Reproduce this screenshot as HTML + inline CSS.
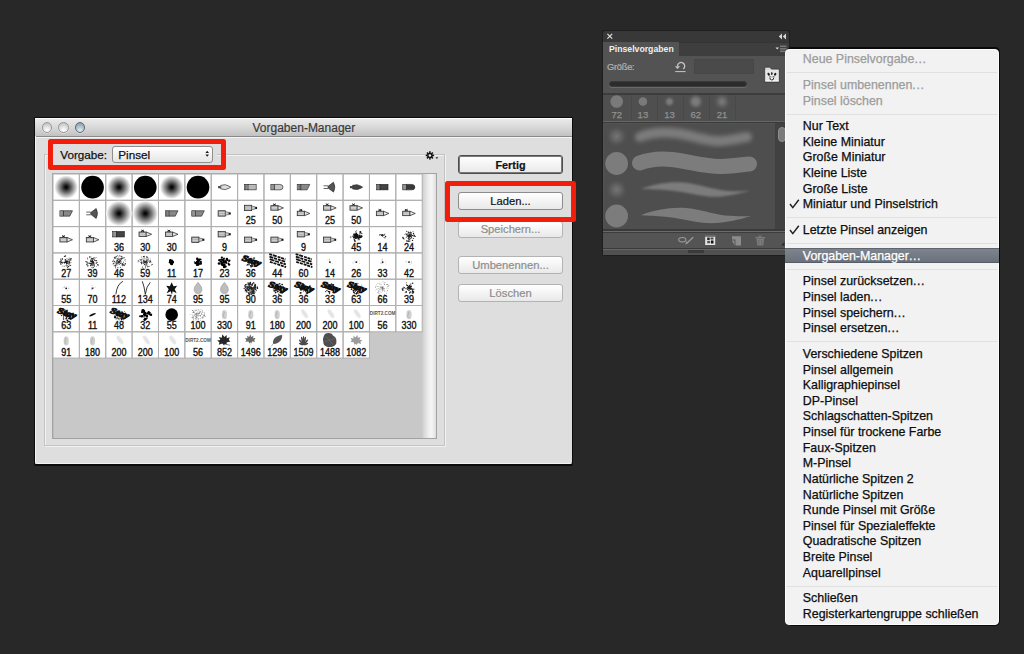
<!DOCTYPE html>
<html><head><meta charset="utf-8"><style>
html,body{margin:0;padding:0;}
body{width:1024px;height:654px;overflow:hidden;background:#282828;position:relative;font-family:"Liberation Sans", sans-serif;}
.abs{position:absolute;}
.t{position:absolute;white-space:nowrap;}
</style></head><body>

<div class="abs" style="left:34px;top:117px;width:539px;height:349px;background:#0c0c0c;border-radius:1px 1px 2px 2px;"></div>
<div class="abs" style="left:35px;top:118px;width:537px;height:346px;background:#dedede;border-radius:0 0 2px 2px;overflow:hidden;">
<div class="abs" style="left:0;top:0;width:100%;height:19px;background:linear-gradient(#eaeaea,#d8d8d8 50%,#c2c2c2);border-top:1px solid #fbfbfb;box-sizing:border-box;border-bottom:1px solid #8a8a8a;"></div><div class="abs" style="left:0;top:19px;width:100%;height:1px;background:#f3f5f5;"></div>
<div class="abs" style="left:0;top:18px;width:1px;height:328px;background:#f4f4f4;"></div>
<div class="abs" style="left:0;bottom:0;width:100%;height:1px;background:#f2f2f2;"></div>
</div>
<div class="abs" style="left:41.9px;top:122.3px;width:10.4px;height:10.4px;border-radius:50%;box-sizing:border-box;border:1px solid #9b9b9b;background:radial-gradient(circle at 50% 80%, #ffffff 0%, #ececec 30%, #c9c9c9 75%, #b4b4b4 100%);box-shadow:0 0.5px 0.5px rgba(255,255,255,0.7);"></div>
<div class="abs" style="left:58.3px;top:122.3px;width:10.4px;height:10.4px;border-radius:50%;box-sizing:border-box;border:1px solid #9b9b9b;background:radial-gradient(circle at 50% 80%, #ffffff 0%, #ececec 30%, #c9c9c9 75%, #b4b4b4 100%);box-shadow:0 0.5px 0.5px rgba(255,255,255,0.7);"></div>
<div class="abs" style="left:74.7px;top:122.3px;width:10.4px;height:10.4px;border-radius:50%;box-sizing:border-box;border:1px solid #5e6f79;background:radial-gradient(circle at 50% 80%, #e4eef3 0%, #bccbd4 35%, #8fa3ae 80%, #7b8e99 100%);box-shadow:0 0.5px 0.5px rgba(255,255,255,0.7);"></div>
<div class="t" style="left:252.5px;top:120px;font-size:12px;line-height:16px;color:#3a3a3a;-webkit-text-stroke:0.2px #3a3a3a;">Vorgaben-Manager</div>
<div class="abs" style="left:44px;top:154px;width:400.5px;height:292px;box-sizing:border-box;border:1px solid #c3c3c3;box-shadow:1px 1px 0 #f2f2f2, inset 1px 1px 0 #f2f2f2;"></div>
<div class="abs" style="left:52px;top:144px;width:164.5px;height:21px;background:#dedede;"></div>
<div class="t" style="left:60.3px;top:147.5px;font-size:11.7px;line-height:14px;color:#111;-webkit-text-stroke:0.25px #111;">Vorgabe:</div>
<div class="abs" style="left:112px;top:146px;width:101px;height:17px;box-sizing:border-box;border:1px solid #8f8f8f;border-radius:3px;background:linear-gradient(#ffffff,#f2f2f2 50%,#e6e6e6);"></div>
<div class="t" style="left:118.3px;top:147.5px;font-size:11.7px;line-height:14px;color:#111;-webkit-text-stroke:0.25px #111;">Pinsel</div>
<svg class="abs" style="left:203px;top:149px" width="8" height="10" viewBox="0 0 8 10"><path d="M4.2 1.8 L6 4.1 L2.4 4.1Z M4.2 7.8 L6 5.5 L2.4 5.5Z" fill="#1a1a1a"/></svg>
<svg class="abs" style="left:423px;top:149px" width="18" height="13" viewBox="0 0 18 13"><g transform="translate(6.9,6.4)"><circle r="2.7" fill="#111"/><rect x="-0.75" y="-4.2" width="1.5" height="2.2" fill="#111" transform="rotate(0)"/><rect x="-0.75" y="-4.2" width="1.5" height="2.2" fill="#111" transform="rotate(45)"/><rect x="-0.75" y="-4.2" width="1.5" height="2.2" fill="#111" transform="rotate(90)"/><rect x="-0.75" y="-4.2" width="1.5" height="2.2" fill="#111" transform="rotate(135)"/><rect x="-0.75" y="-4.2" width="1.5" height="2.2" fill="#111" transform="rotate(180)"/><rect x="-0.75" y="-4.2" width="1.5" height="2.2" fill="#111" transform="rotate(225)"/><rect x="-0.75" y="-4.2" width="1.5" height="2.2" fill="#111" transform="rotate(270)"/><rect x="-0.75" y="-4.2" width="1.5" height="2.2" fill="#111" transform="rotate(315)"/><circle r="1.25" fill="#f4f4f4"/></g><path d="M12.6 8.2 L15.2 8.2 L13.9 10Z" fill="#222"/></svg>
<div class="abs" style="left:52px;top:173px;width:385px;height:266px;box-sizing:border-box;border:1px solid #a2a2a2;background:#c8c8c8;box-shadow:inset 1px 0 0 #bcbcbc;"></div>
<div class="abs" style="left:422px;top:174px;width:14px;height:264px;background:linear-gradient(90deg,#cacaca 0%,#dcdcdc 20%,#f2f2f2 55%,#f4f4f4 70%,#dedede 100%);box-sizing:border-box;"></div>
<div class="abs" style="left:458px;top:155px;width:105px;height:19px;box-sizing:border-box;border:1px solid #4d4d4d;border-radius:3px;background:linear-gradient(#ffffff,#f4f4f4 50%,#e9e9e9);box-shadow:inset 0 0 0 1px #7a7a7a;"></div>
<div class="t" style="left:458px;top:155.8px;width:105px;height:19px;line-height:19px;text-align:center;font-size:10.8px;color:#111;-webkit-text-stroke:0.2px #111;font-weight:bold;">Fertig</div>
<div class="abs" style="left:458px;top:192px;width:105px;height:18px;box-sizing:border-box;border:1px solid #8c8c8c;border-radius:3px;background:linear-gradient(#ffffff,#f4f4f4 50%,#e9e9e9);"></div>
<div class="t" style="left:458px;top:192px;width:105px;height:18px;line-height:18px;text-align:center;font-size:11.2px;color:#111;-webkit-text-stroke:0.2px #111;">Laden...</div>
<div class="abs" style="left:458px;top:221px;width:105px;height:17px;box-sizing:border-box;border:1px solid #b3b3b3;border-radius:3px;background:linear-gradient(#ffffff,#f4f4f4 50%,#e9e9e9);"></div>
<div class="t" style="left:458px;top:221px;width:105px;height:17px;line-height:17px;text-align:center;font-size:11.2px;color:#8d8d8d;-webkit-text-stroke:0.2px #8d8d8d;">Speichern...</div>
<div class="abs" style="left:458px;top:256px;width:105px;height:18px;box-sizing:border-box;border:1px solid #b3b3b3;border-radius:3px;background:linear-gradient(#ffffff,#f4f4f4 50%,#e9e9e9);"></div>
<div class="t" style="left:458px;top:256px;width:105px;height:18px;line-height:18px;text-align:center;font-size:11.2px;color:#8d8d8d;-webkit-text-stroke:0.2px #8d8d8d;">Umbenennen...</div>
<div class="abs" style="left:458px;top:284px;width:105px;height:18px;box-sizing:border-box;border:1px solid #b3b3b3;border-radius:3px;background:linear-gradient(#ffffff,#f4f4f4 50%,#e9e9e9);"></div>
<div class="t" style="left:458px;top:284px;width:105px;height:18px;line-height:18px;text-align:center;font-size:11.2px;color:#8d8d8d;-webkit-text-stroke:0.2px #8d8d8d;">Löschen</div>
<div class="abs" style="left:48px;top:139px;width:178px;height:31px;box-sizing:border-box;border:5px solid #f21d0a;border-radius:2.5px;"></div>
<div class="abs" style="left:445px;top:181px;width:130.5px;height:40.7px;box-sizing:border-box;border:5px solid #f21d0a;border-radius:2.5px;"></div>
<svg class="abs" style="left:0;top:0" width="1024" height="654" viewBox="0 0 1024 654">
<defs><radialGradient id="gsoft"><stop offset="0" stop-color="#000"/><stop offset="0.12" stop-color="#111"/><stop offset="0.5" stop-color="#777"/><stop offset="1" stop-color="#fff"/></radialGradient><filter id="fblur" x="-50%" y="-50%" width="200%" height="200%"><feGaussianBlur stdDeviation="0.5"/></filter></defs>
<rect x="53.00" y="174.00" width="26.37" height="26.30" fill="#fff"/>
<rect x="79.37" y="174.00" width="26.37" height="26.30" fill="#fff"/>
<rect x="105.74" y="174.00" width="26.37" height="26.30" fill="#fff"/>
<rect x="132.11" y="174.00" width="26.37" height="26.30" fill="#fff"/>
<rect x="158.48" y="174.00" width="26.37" height="26.30" fill="#fff"/>
<rect x="184.85" y="174.00" width="26.37" height="26.30" fill="#fff"/>
<rect x="211.22" y="174.00" width="26.37" height="26.30" fill="#fff"/>
<rect x="237.59" y="174.00" width="26.37" height="26.30" fill="#fff"/>
<rect x="263.96" y="174.00" width="26.37" height="26.30" fill="#fff"/>
<rect x="290.33" y="174.00" width="26.37" height="26.30" fill="#fff"/>
<rect x="316.70" y="174.00" width="26.37" height="26.30" fill="#fff"/>
<rect x="343.07" y="174.00" width="26.37" height="26.30" fill="#fff"/>
<rect x="369.44" y="174.00" width="26.37" height="26.30" fill="#fff"/>
<rect x="395.81" y="174.00" width="26.37" height="26.30" fill="#fff"/>
<rect x="53.00" y="200.30" width="26.37" height="26.30" fill="#fff"/>
<rect x="79.37" y="200.30" width="26.37" height="26.30" fill="#fff"/>
<rect x="105.74" y="200.30" width="26.37" height="26.30" fill="#fff"/>
<rect x="132.11" y="200.30" width="26.37" height="26.30" fill="#fff"/>
<rect x="158.48" y="200.30" width="26.37" height="26.30" fill="#fff"/>
<rect x="184.85" y="200.30" width="26.37" height="26.30" fill="#fff"/>
<rect x="211.22" y="200.30" width="26.37" height="26.30" fill="#fff"/>
<rect x="237.59" y="200.30" width="26.37" height="26.30" fill="#fff"/>
<rect x="263.96" y="200.30" width="26.37" height="26.30" fill="#fff"/>
<rect x="290.33" y="200.30" width="26.37" height="26.30" fill="#fff"/>
<rect x="316.70" y="200.30" width="26.37" height="26.30" fill="#fff"/>
<rect x="343.07" y="200.30" width="26.37" height="26.30" fill="#fff"/>
<rect x="369.44" y="200.30" width="26.37" height="26.30" fill="#fff"/>
<rect x="395.81" y="200.30" width="26.37" height="26.30" fill="#fff"/>
<rect x="53.00" y="226.60" width="26.37" height="26.30" fill="#fff"/>
<rect x="79.37" y="226.60" width="26.37" height="26.30" fill="#fff"/>
<rect x="105.74" y="226.60" width="26.37" height="26.30" fill="#fff"/>
<rect x="132.11" y="226.60" width="26.37" height="26.30" fill="#fff"/>
<rect x="158.48" y="226.60" width="26.37" height="26.30" fill="#fff"/>
<rect x="184.85" y="226.60" width="26.37" height="26.30" fill="#fff"/>
<rect x="211.22" y="226.60" width="26.37" height="26.30" fill="#fff"/>
<rect x="237.59" y="226.60" width="26.37" height="26.30" fill="#fff"/>
<rect x="263.96" y="226.60" width="26.37" height="26.30" fill="#fff"/>
<rect x="290.33" y="226.60" width="26.37" height="26.30" fill="#fff"/>
<rect x="316.70" y="226.60" width="26.37" height="26.30" fill="#fff"/>
<rect x="343.07" y="226.60" width="26.37" height="26.30" fill="#fff"/>
<rect x="369.44" y="226.60" width="26.37" height="26.30" fill="#fff"/>
<rect x="395.81" y="226.60" width="26.37" height="26.30" fill="#fff"/>
<rect x="53.00" y="252.90" width="26.37" height="26.30" fill="#fff"/>
<rect x="79.37" y="252.90" width="26.37" height="26.30" fill="#fff"/>
<rect x="105.74" y="252.90" width="26.37" height="26.30" fill="#fff"/>
<rect x="132.11" y="252.90" width="26.37" height="26.30" fill="#fff"/>
<rect x="158.48" y="252.90" width="26.37" height="26.30" fill="#fff"/>
<rect x="184.85" y="252.90" width="26.37" height="26.30" fill="#fff"/>
<rect x="211.22" y="252.90" width="26.37" height="26.30" fill="#fff"/>
<rect x="237.59" y="252.90" width="26.37" height="26.30" fill="#fff"/>
<rect x="263.96" y="252.90" width="26.37" height="26.30" fill="#fff"/>
<rect x="290.33" y="252.90" width="26.37" height="26.30" fill="#fff"/>
<rect x="316.70" y="252.90" width="26.37" height="26.30" fill="#fff"/>
<rect x="343.07" y="252.90" width="26.37" height="26.30" fill="#fff"/>
<rect x="369.44" y="252.90" width="26.37" height="26.30" fill="#fff"/>
<rect x="395.81" y="252.90" width="26.37" height="26.30" fill="#fff"/>
<rect x="53.00" y="279.20" width="26.37" height="26.30" fill="#fff"/>
<rect x="79.37" y="279.20" width="26.37" height="26.30" fill="#fff"/>
<rect x="105.74" y="279.20" width="26.37" height="26.30" fill="#fff"/>
<rect x="132.11" y="279.20" width="26.37" height="26.30" fill="#fff"/>
<rect x="158.48" y="279.20" width="26.37" height="26.30" fill="#fff"/>
<rect x="184.85" y="279.20" width="26.37" height="26.30" fill="#fff"/>
<rect x="211.22" y="279.20" width="26.37" height="26.30" fill="#fff"/>
<rect x="237.59" y="279.20" width="26.37" height="26.30" fill="#fff"/>
<rect x="263.96" y="279.20" width="26.37" height="26.30" fill="#fff"/>
<rect x="290.33" y="279.20" width="26.37" height="26.30" fill="#fff"/>
<rect x="316.70" y="279.20" width="26.37" height="26.30" fill="#fff"/>
<rect x="343.07" y="279.20" width="26.37" height="26.30" fill="#fff"/>
<rect x="369.44" y="279.20" width="26.37" height="26.30" fill="#fff"/>
<rect x="395.81" y="279.20" width="26.37" height="26.30" fill="#fff"/>
<rect x="53.00" y="305.50" width="26.37" height="26.30" fill="#fff"/>
<rect x="79.37" y="305.50" width="26.37" height="26.30" fill="#fff"/>
<rect x="105.74" y="305.50" width="26.37" height="26.30" fill="#fff"/>
<rect x="132.11" y="305.50" width="26.37" height="26.30" fill="#fff"/>
<rect x="158.48" y="305.50" width="26.37" height="26.30" fill="#fff"/>
<rect x="184.85" y="305.50" width="26.37" height="26.30" fill="#fff"/>
<rect x="211.22" y="305.50" width="26.37" height="26.30" fill="#fff"/>
<rect x="237.59" y="305.50" width="26.37" height="26.30" fill="#fff"/>
<rect x="263.96" y="305.50" width="26.37" height="26.30" fill="#fff"/>
<rect x="290.33" y="305.50" width="26.37" height="26.30" fill="#fff"/>
<rect x="316.70" y="305.50" width="26.37" height="26.30" fill="#fff"/>
<rect x="343.07" y="305.50" width="26.37" height="26.30" fill="#fff"/>
<rect x="369.44" y="305.50" width="26.37" height="26.30" fill="#fff"/>
<rect x="395.81" y="305.50" width="26.37" height="26.30" fill="#fff"/>
<rect x="53.00" y="331.80" width="26.37" height="26.30" fill="#fff"/>
<rect x="79.37" y="331.80" width="26.37" height="26.30" fill="#fff"/>
<rect x="105.74" y="331.80" width="26.37" height="26.30" fill="#fff"/>
<rect x="132.11" y="331.80" width="26.37" height="26.30" fill="#fff"/>
<rect x="158.48" y="331.80" width="26.37" height="26.30" fill="#fff"/>
<rect x="184.85" y="331.80" width="26.37" height="26.30" fill="#fff"/>
<rect x="211.22" y="331.80" width="26.37" height="26.30" fill="#fff"/>
<rect x="237.59" y="331.80" width="26.37" height="26.30" fill="#fff"/>
<rect x="263.96" y="331.80" width="26.37" height="26.30" fill="#fff"/>
<rect x="290.33" y="331.80" width="26.37" height="26.30" fill="#fff"/>
<rect x="316.70" y="331.80" width="26.37" height="26.30" fill="#fff"/>
<rect x="343.07" y="331.80" width="26.37" height="26.30" fill="#fff"/>
<rect x="53.00" y="174.00" width="26.37" height="26.30" fill="none" stroke="#b0b0b0" stroke-width="1"/>
<rect x="79.37" y="174.00" width="26.37" height="26.30" fill="none" stroke="#b0b0b0" stroke-width="1"/>
<rect x="105.74" y="174.00" width="26.37" height="26.30" fill="none" stroke="#b0b0b0" stroke-width="1"/>
<rect x="132.11" y="174.00" width="26.37" height="26.30" fill="none" stroke="#b0b0b0" stroke-width="1"/>
<rect x="158.48" y="174.00" width="26.37" height="26.30" fill="none" stroke="#b0b0b0" stroke-width="1"/>
<rect x="184.85" y="174.00" width="26.37" height="26.30" fill="none" stroke="#b0b0b0" stroke-width="1"/>
<rect x="211.22" y="174.00" width="26.37" height="26.30" fill="none" stroke="#b0b0b0" stroke-width="1"/>
<rect x="237.59" y="174.00" width="26.37" height="26.30" fill="none" stroke="#b0b0b0" stroke-width="1"/>
<rect x="263.96" y="174.00" width="26.37" height="26.30" fill="none" stroke="#b0b0b0" stroke-width="1"/>
<rect x="290.33" y="174.00" width="26.37" height="26.30" fill="none" stroke="#b0b0b0" stroke-width="1"/>
<rect x="316.70" y="174.00" width="26.37" height="26.30" fill="none" stroke="#b0b0b0" stroke-width="1"/>
<rect x="343.07" y="174.00" width="26.37" height="26.30" fill="none" stroke="#b0b0b0" stroke-width="1"/>
<rect x="369.44" y="174.00" width="26.37" height="26.30" fill="none" stroke="#b0b0b0" stroke-width="1"/>
<rect x="395.81" y="174.00" width="26.37" height="26.30" fill="none" stroke="#b0b0b0" stroke-width="1"/>
<rect x="53.00" y="200.30" width="26.37" height="26.30" fill="none" stroke="#b0b0b0" stroke-width="1"/>
<rect x="79.37" y="200.30" width="26.37" height="26.30" fill="none" stroke="#b0b0b0" stroke-width="1"/>
<rect x="105.74" y="200.30" width="26.37" height="26.30" fill="none" stroke="#b0b0b0" stroke-width="1"/>
<rect x="132.11" y="200.30" width="26.37" height="26.30" fill="none" stroke="#b0b0b0" stroke-width="1"/>
<rect x="158.48" y="200.30" width="26.37" height="26.30" fill="none" stroke="#b0b0b0" stroke-width="1"/>
<rect x="184.85" y="200.30" width="26.37" height="26.30" fill="none" stroke="#b0b0b0" stroke-width="1"/>
<rect x="211.22" y="200.30" width="26.37" height="26.30" fill="none" stroke="#b0b0b0" stroke-width="1"/>
<rect x="237.59" y="200.30" width="26.37" height="26.30" fill="none" stroke="#b0b0b0" stroke-width="1"/>
<rect x="263.96" y="200.30" width="26.37" height="26.30" fill="none" stroke="#b0b0b0" stroke-width="1"/>
<rect x="290.33" y="200.30" width="26.37" height="26.30" fill="none" stroke="#b0b0b0" stroke-width="1"/>
<rect x="316.70" y="200.30" width="26.37" height="26.30" fill="none" stroke="#b0b0b0" stroke-width="1"/>
<rect x="343.07" y="200.30" width="26.37" height="26.30" fill="none" stroke="#b0b0b0" stroke-width="1"/>
<rect x="369.44" y="200.30" width="26.37" height="26.30" fill="none" stroke="#b0b0b0" stroke-width="1"/>
<rect x="395.81" y="200.30" width="26.37" height="26.30" fill="none" stroke="#b0b0b0" stroke-width="1"/>
<rect x="53.00" y="226.60" width="26.37" height="26.30" fill="none" stroke="#b0b0b0" stroke-width="1"/>
<rect x="79.37" y="226.60" width="26.37" height="26.30" fill="none" stroke="#b0b0b0" stroke-width="1"/>
<rect x="105.74" y="226.60" width="26.37" height="26.30" fill="none" stroke="#b0b0b0" stroke-width="1"/>
<rect x="132.11" y="226.60" width="26.37" height="26.30" fill="none" stroke="#b0b0b0" stroke-width="1"/>
<rect x="158.48" y="226.60" width="26.37" height="26.30" fill="none" stroke="#b0b0b0" stroke-width="1"/>
<rect x="184.85" y="226.60" width="26.37" height="26.30" fill="none" stroke="#b0b0b0" stroke-width="1"/>
<rect x="211.22" y="226.60" width="26.37" height="26.30" fill="none" stroke="#b0b0b0" stroke-width="1"/>
<rect x="237.59" y="226.60" width="26.37" height="26.30" fill="none" stroke="#b0b0b0" stroke-width="1"/>
<rect x="263.96" y="226.60" width="26.37" height="26.30" fill="none" stroke="#b0b0b0" stroke-width="1"/>
<rect x="290.33" y="226.60" width="26.37" height="26.30" fill="none" stroke="#b0b0b0" stroke-width="1"/>
<rect x="316.70" y="226.60" width="26.37" height="26.30" fill="none" stroke="#b0b0b0" stroke-width="1"/>
<rect x="343.07" y="226.60" width="26.37" height="26.30" fill="none" stroke="#b0b0b0" stroke-width="1"/>
<rect x="369.44" y="226.60" width="26.37" height="26.30" fill="none" stroke="#b0b0b0" stroke-width="1"/>
<rect x="395.81" y="226.60" width="26.37" height="26.30" fill="none" stroke="#b0b0b0" stroke-width="1"/>
<rect x="53.00" y="252.90" width="26.37" height="26.30" fill="none" stroke="#b0b0b0" stroke-width="1"/>
<rect x="79.37" y="252.90" width="26.37" height="26.30" fill="none" stroke="#b0b0b0" stroke-width="1"/>
<rect x="105.74" y="252.90" width="26.37" height="26.30" fill="none" stroke="#b0b0b0" stroke-width="1"/>
<rect x="132.11" y="252.90" width="26.37" height="26.30" fill="none" stroke="#b0b0b0" stroke-width="1"/>
<rect x="158.48" y="252.90" width="26.37" height="26.30" fill="none" stroke="#b0b0b0" stroke-width="1"/>
<rect x="184.85" y="252.90" width="26.37" height="26.30" fill="none" stroke="#b0b0b0" stroke-width="1"/>
<rect x="211.22" y="252.90" width="26.37" height="26.30" fill="none" stroke="#b0b0b0" stroke-width="1"/>
<rect x="237.59" y="252.90" width="26.37" height="26.30" fill="none" stroke="#b0b0b0" stroke-width="1"/>
<rect x="263.96" y="252.90" width="26.37" height="26.30" fill="none" stroke="#b0b0b0" stroke-width="1"/>
<rect x="290.33" y="252.90" width="26.37" height="26.30" fill="none" stroke="#b0b0b0" stroke-width="1"/>
<rect x="316.70" y="252.90" width="26.37" height="26.30" fill="none" stroke="#b0b0b0" stroke-width="1"/>
<rect x="343.07" y="252.90" width="26.37" height="26.30" fill="none" stroke="#b0b0b0" stroke-width="1"/>
<rect x="369.44" y="252.90" width="26.37" height="26.30" fill="none" stroke="#b0b0b0" stroke-width="1"/>
<rect x="395.81" y="252.90" width="26.37" height="26.30" fill="none" stroke="#b0b0b0" stroke-width="1"/>
<rect x="53.00" y="279.20" width="26.37" height="26.30" fill="none" stroke="#b0b0b0" stroke-width="1"/>
<rect x="79.37" y="279.20" width="26.37" height="26.30" fill="none" stroke="#b0b0b0" stroke-width="1"/>
<rect x="105.74" y="279.20" width="26.37" height="26.30" fill="none" stroke="#b0b0b0" stroke-width="1"/>
<rect x="132.11" y="279.20" width="26.37" height="26.30" fill="none" stroke="#b0b0b0" stroke-width="1"/>
<rect x="158.48" y="279.20" width="26.37" height="26.30" fill="none" stroke="#b0b0b0" stroke-width="1"/>
<rect x="184.85" y="279.20" width="26.37" height="26.30" fill="none" stroke="#b0b0b0" stroke-width="1"/>
<rect x="211.22" y="279.20" width="26.37" height="26.30" fill="none" stroke="#b0b0b0" stroke-width="1"/>
<rect x="237.59" y="279.20" width="26.37" height="26.30" fill="none" stroke="#b0b0b0" stroke-width="1"/>
<rect x="263.96" y="279.20" width="26.37" height="26.30" fill="none" stroke="#b0b0b0" stroke-width="1"/>
<rect x="290.33" y="279.20" width="26.37" height="26.30" fill="none" stroke="#b0b0b0" stroke-width="1"/>
<rect x="316.70" y="279.20" width="26.37" height="26.30" fill="none" stroke="#b0b0b0" stroke-width="1"/>
<rect x="343.07" y="279.20" width="26.37" height="26.30" fill="none" stroke="#b0b0b0" stroke-width="1"/>
<rect x="369.44" y="279.20" width="26.37" height="26.30" fill="none" stroke="#b0b0b0" stroke-width="1"/>
<rect x="395.81" y="279.20" width="26.37" height="26.30" fill="none" stroke="#b0b0b0" stroke-width="1"/>
<rect x="53.00" y="305.50" width="26.37" height="26.30" fill="none" stroke="#b0b0b0" stroke-width="1"/>
<rect x="79.37" y="305.50" width="26.37" height="26.30" fill="none" stroke="#b0b0b0" stroke-width="1"/>
<rect x="105.74" y="305.50" width="26.37" height="26.30" fill="none" stroke="#b0b0b0" stroke-width="1"/>
<rect x="132.11" y="305.50" width="26.37" height="26.30" fill="none" stroke="#b0b0b0" stroke-width="1"/>
<rect x="158.48" y="305.50" width="26.37" height="26.30" fill="none" stroke="#b0b0b0" stroke-width="1"/>
<rect x="184.85" y="305.50" width="26.37" height="26.30" fill="none" stroke="#b0b0b0" stroke-width="1"/>
<rect x="211.22" y="305.50" width="26.37" height="26.30" fill="none" stroke="#b0b0b0" stroke-width="1"/>
<rect x="237.59" y="305.50" width="26.37" height="26.30" fill="none" stroke="#b0b0b0" stroke-width="1"/>
<rect x="263.96" y="305.50" width="26.37" height="26.30" fill="none" stroke="#b0b0b0" stroke-width="1"/>
<rect x="290.33" y="305.50" width="26.37" height="26.30" fill="none" stroke="#b0b0b0" stroke-width="1"/>
<rect x="316.70" y="305.50" width="26.37" height="26.30" fill="none" stroke="#b0b0b0" stroke-width="1"/>
<rect x="343.07" y="305.50" width="26.37" height="26.30" fill="none" stroke="#b0b0b0" stroke-width="1"/>
<rect x="369.44" y="305.50" width="26.37" height="26.30" fill="none" stroke="#b0b0b0" stroke-width="1"/>
<rect x="395.81" y="305.50" width="26.37" height="26.30" fill="none" stroke="#b0b0b0" stroke-width="1"/>
<rect x="53.00" y="331.80" width="26.37" height="26.30" fill="none" stroke="#b0b0b0" stroke-width="1"/>
<rect x="79.37" y="331.80" width="26.37" height="26.30" fill="none" stroke="#b0b0b0" stroke-width="1"/>
<rect x="105.74" y="331.80" width="26.37" height="26.30" fill="none" stroke="#b0b0b0" stroke-width="1"/>
<rect x="132.11" y="331.80" width="26.37" height="26.30" fill="none" stroke="#b0b0b0" stroke-width="1"/>
<rect x="158.48" y="331.80" width="26.37" height="26.30" fill="none" stroke="#b0b0b0" stroke-width="1"/>
<rect x="184.85" y="331.80" width="26.37" height="26.30" fill="none" stroke="#b0b0b0" stroke-width="1"/>
<rect x="211.22" y="331.80" width="26.37" height="26.30" fill="none" stroke="#b0b0b0" stroke-width="1"/>
<rect x="237.59" y="331.80" width="26.37" height="26.30" fill="none" stroke="#b0b0b0" stroke-width="1"/>
<rect x="263.96" y="331.80" width="26.37" height="26.30" fill="none" stroke="#b0b0b0" stroke-width="1"/>
<rect x="290.33" y="331.80" width="26.37" height="26.30" fill="none" stroke="#b0b0b0" stroke-width="1"/>
<rect x="316.70" y="331.80" width="26.37" height="26.30" fill="none" stroke="#b0b0b0" stroke-width="1"/>
<rect x="343.07" y="331.80" width="26.37" height="26.30" fill="none" stroke="#b0b0b0" stroke-width="1"/>
<circle cx="66.19" cy="187.15" r="11.8" fill="url(#gsoft)"/>
<circle cx="92.56" cy="187.15" r="11.3" fill="#000"/>
<circle cx="118.93" cy="187.15" r="11.8" fill="url(#gsoft)"/>
<circle cx="145.30" cy="187.15" r="11.3" fill="#000"/>
<circle cx="171.67" cy="187.15" r="11.8" fill="url(#gsoft)"/>
<circle cx="198.03" cy="187.15" r="11.3" fill="#000"/>
<g transform="translate(218.10,184.00) scale(0.9)"><rect x="0" y="2.3" width="3" height="2.4" fill="#444"/><path d="M3 1.5 L8 0.8 Q13 2.5 14 3.5 Q13 4.5 8 6.2 L3 5.5Z" fill="#ddd" stroke="#333" stroke-width="0.8"/></g>
<g transform="translate(244.47,184.00) scale(0.9)"><rect x="0" y="0.5" width="4" height="6" fill="#eee" stroke="#222" stroke-width="0.7"/><path d="M1.2 0.5 V6.5 M2.6 0.5 V6.5" stroke="#333" stroke-width="0.8"/><rect x="4" y="0.5" width="9" height="6" fill="#c4c4c4" stroke="#222" stroke-width="0.7"/><path d="M5 2.5H12.5 M5 4.5H12.5" stroke="#999" stroke-width="0.5"/></g>
<g transform="translate(270.85,184.00) scale(0.9)"><rect x="0" y="0.5" width="4" height="6" fill="#eee" stroke="#222" stroke-width="0.7"/><path d="M1.2 0.5 V6.5 M2.6 0.5 V6.5" stroke="#333" stroke-width="0.8"/><path d="M4 0.5 L10 0.5 Q13.5 0.5 13.5 3.5 Q13.5 6.5 10 6.5 L4 6.5Z" fill="#c4c4c4" stroke="#222" stroke-width="0.7"/></g>
<g transform="translate(297.22,184.00) scale(0.9)"><rect x="0" y="0.5" width="4" height="6" fill="#eee" stroke="#222" stroke-width="0.7"/><path d="M1.2 0.5 V6.5 M2.6 0.5 V6.5" stroke="#333" stroke-width="0.8"/><path d="M4 0.5 L14 0.5 L11 6.5 L4 6.5Z" fill="#888" stroke="#222" stroke-width="0.7"/></g>
<g transform="translate(323.58,184.00) scale(0.9)"><path d="M0 2 H5 M0 5 H5" stroke="#555" stroke-width="1"/><path d="M5 2.5 L11 -2 Q14 3.5 11 9 L5 4.5Z" fill="#555" stroke="#222" stroke-width="0.7"/></g>
<g transform="translate(349.95,184.00) scale(0.9)"><rect x="0" y="2.3" width="3" height="2.4" fill="#444"/><path d="M3 1.5 L8 0.8 Q13 2.5 14 3.5 Q13 4.5 8 6.2 L3 5.5Z" fill="#444" stroke="#333" stroke-width="0.8"/></g>
<g transform="translate(376.32,184.00) scale(0.9)"><rect x="0" y="0.5" width="4" height="6" fill="#eee" stroke="#222" stroke-width="0.7"/><path d="M1.2 0.5 V6.5 M2.6 0.5 V6.5" stroke="#333" stroke-width="0.8"/><rect x="4" y="0.5" width="9" height="6" fill="#3a3a3a" stroke="#222" stroke-width="0.7"/><path d="M5 2.5H12.5 M5 4.5H12.5" stroke="#666" stroke-width="0.5"/></g>
<g transform="translate(402.69,184.00) scale(0.9)"><rect x="0" y="0.5" width="4" height="6" fill="#eee" stroke="#222" stroke-width="0.7"/><path d="M1.2 0.5 V6.5 M2.6 0.5 V6.5" stroke="#333" stroke-width="0.8"/><path d="M4 0.5 L10 0.5 Q13.5 0.5 13.5 3.5 Q13.5 6.5 10 6.5 L4 6.5Z" fill="#3a3a3a" stroke="#222" stroke-width="0.7"/></g>
<g transform="translate(59.89,210.30) scale(0.9)"><rect x="0" y="0.5" width="4" height="6" fill="#eee" stroke="#222" stroke-width="0.7"/><path d="M1.2 0.5 V6.5 M2.6 0.5 V6.5" stroke="#333" stroke-width="0.8"/><path d="M4 0.5 L14 0.5 L11 6.5 L4 6.5Z" fill="#888" stroke="#222" stroke-width="0.7"/></g>
<g transform="translate(86.26,210.30) scale(0.9)"><path d="M0 2 H5 M0 5 H5" stroke="#555" stroke-width="1"/><path d="M5 2.5 L11 -2 Q14 3.5 11 9 L5 4.5Z" fill="#555" stroke="#222" stroke-width="0.7"/></g>
<circle cx="118.93" cy="213.45" r="12.6" fill="url(#gsoft)"/>
<circle cx="145.30" cy="213.45" r="12.6" fill="url(#gsoft)"/>
<g transform="translate(165.37,210.30) scale(0.9)"><rect x="0" y="0.5" width="4" height="6" fill="#eee" stroke="#222" stroke-width="0.7"/><path d="M1.2 0.5 V6.5 M2.6 0.5 V6.5" stroke="#333" stroke-width="0.8"/><path d="M4 0.5 L14 0.5 L11 6.5 L4 6.5Z" fill="#888" stroke="#222" stroke-width="0.7"/></g>
<g transform="translate(191.73,210.30) scale(0.9)"><rect x="0" y="0.5" width="4" height="6" fill="#eee" stroke="#222" stroke-width="0.7"/><path d="M1.2 0.5 V6.5 M2.6 0.5 V6.5" stroke="#333" stroke-width="0.8"/><path d="M4 0.5 L14 0.5 L11 6.5 L4 6.5Z" fill="#888" stroke="#222" stroke-width="0.7"/></g>
<g transform="translate(218.10,210.30) scale(0.9)"><rect x="0" y="0.5" width="8" height="6" fill="#aaa" stroke="#222" stroke-width="0.8"/><path d="M1 2.5H8 M1 4.5H8" stroke="#e8e8e8" stroke-width="0.7"/><path d="M8 1.5 L12 2.3 L12 4.7 L8 5.5Z" fill="#ccc" stroke="#333" stroke-width="0.6"/><rect x="12" y="2.3" width="2" height="2.4" fill="#111"/></g>
<g transform="translate(244.47,204.80) scale(0.9)"><rect x="0" y="0.5" width="8" height="6" fill="#aaa" stroke="#222" stroke-width="0.8"/><path d="M1 2.5H8 M1 4.5H8" stroke="#e8e8e8" stroke-width="0.7"/><path d="M8 1.5 L12 2.3 L12 4.7 L8 5.5Z" fill="#ccc" stroke="#333" stroke-width="0.6"/><rect x="12" y="2.3" width="2" height="2.4" fill="#111"/></g><text x="0" y="224.25" font-size="10" text-anchor="middle" fill="#111" stroke="#111" stroke-width="0.36" font-family="Liberation Sans" transform="translate(250.78,0) scale(0.9,1)">25</text>
<g transform="translate(270.85,204.80) scale(0.9)"><path d="M2.5 -1.2 L6 1 M5.5 -1.2 L2 1" stroke="#111" stroke-width="1"/><rect x="0" y="1" width="8" height="5" fill="#b0b0b0" stroke="#222" stroke-width="0.8"/><path d="M1 3H8 M1 4.5H8" stroke="#eee" stroke-width="0.6"/><path d="M8 1 L14 3.5 L8 6Z" fill="#e8e8e8" stroke="#222" stroke-width="0.8"/></g><text x="0" y="224.25" font-size="10" text-anchor="middle" fill="#111" stroke="#111" stroke-width="0.36" font-family="Liberation Sans" transform="translate(277.15,0) scale(0.9,1)">50</text>
<g transform="translate(297.22,210.30) scale(0.9)"><path d="M2.5 -1.2 L6 1 M5.5 -1.2 L2 1" stroke="#111" stroke-width="1"/><rect x="0" y="1" width="8" height="5" fill="#b0b0b0" stroke="#222" stroke-width="0.8"/><path d="M1 3H8 M1 4.5H8" stroke="#eee" stroke-width="0.6"/><path d="M8 1 L14 3.5 L8 6Z" fill="#e8e8e8" stroke="#222" stroke-width="0.8"/></g>
<g transform="translate(323.58,204.80) scale(0.9)"><path d="M2.5 -1.2 L6 1 M5.5 -1.2 L2 1" stroke="#111" stroke-width="1"/><rect x="0" y="1" width="8" height="5" fill="#b0b0b0" stroke="#222" stroke-width="0.8"/><path d="M1 3H8 M1 4.5H8" stroke="#eee" stroke-width="0.6"/><path d="M8 1 L14 3.5 L8 6Z" fill="#e8e8e8" stroke="#222" stroke-width="0.8"/></g><text x="0" y="224.25" font-size="10" text-anchor="middle" fill="#111" stroke="#111" stroke-width="0.36" font-family="Liberation Sans" transform="translate(329.88,0) scale(0.9,1)">25</text>
<g transform="translate(349.95,204.80) scale(0.9)"><path d="M2.5 -1.2 L6 1 M5.5 -1.2 L2 1" stroke="#111" stroke-width="1"/><rect x="0" y="1" width="8" height="5" fill="#b0b0b0" stroke="#222" stroke-width="0.8"/><path d="M1 3H8 M1 4.5H8" stroke="#eee" stroke-width="0.6"/><path d="M8 1 L14 3.5 L8 6Z" fill="#e8e8e8" stroke="#222" stroke-width="0.8"/></g><text x="0" y="224.25" font-size="10" text-anchor="middle" fill="#111" stroke="#111" stroke-width="0.36" font-family="Liberation Sans" transform="translate(356.25,0) scale(0.9,1)">50</text>
<g transform="translate(376.32,210.30) scale(0.9)"><path d="M2.5 -1.2 L6 1 M5.5 -1.2 L2 1" stroke="#111" stroke-width="1"/><rect x="0" y="1" width="8" height="5" fill="#b0b0b0" stroke="#222" stroke-width="0.8"/><path d="M1 3H8 M1 4.5H8" stroke="#eee" stroke-width="0.6"/><path d="M8 1 L14 3.5 L8 6Z" fill="#e8e8e8" stroke="#222" stroke-width="0.8"/></g>
<g transform="translate(402.69,210.30) scale(0.9)"><path d="M2.5 -1.2 L6 1 M5.5 -1.2 L2 1" stroke="#111" stroke-width="1"/><rect x="0" y="1" width="8" height="5" fill="#b0b0b0" stroke="#222" stroke-width="0.8"/><path d="M1 3H8 M1 4.5H8" stroke="#eee" stroke-width="0.6"/><path d="M8 1 L14 3.5 L8 6Z" fill="#e8e8e8" stroke="#222" stroke-width="0.8"/></g>
<g transform="translate(59.89,236.60) scale(0.9)"><path d="M2.5 -1.2 L6 1 M5.5 -1.2 L2 1" stroke="#111" stroke-width="1"/><rect x="0" y="1" width="8" height="5" fill="#b0b0b0" stroke="#222" stroke-width="0.8"/><path d="M1 3H8 M1 4.5H8" stroke="#eee" stroke-width="0.6"/><path d="M8 1 L14 3.5 L8 6Z" fill="#e8e8e8" stroke="#222" stroke-width="0.8"/></g>
<g transform="translate(86.26,236.60) scale(0.9)"><path d="M2.5 -1.2 L6 1 M5.5 -1.2 L2 1" stroke="#111" stroke-width="1"/><rect x="0" y="1" width="8" height="5" fill="#b0b0b0" stroke="#222" stroke-width="0.8"/><path d="M1 3H8 M1 4.5H8" stroke="#eee" stroke-width="0.6"/><path d="M8 1 L14 3.5 L8 6Z" fill="#e8e8e8" stroke="#222" stroke-width="0.8"/></g>
<g transform="translate(112.63,231.10) scale(0.9)"><rect x="0" y="0.5" width="4" height="6" fill="#eee" stroke="#222" stroke-width="0.7"/><path d="M1.2 0.5 V6.5 M2.6 0.5 V6.5" stroke="#333" stroke-width="0.8"/><rect x="4" y="0.5" width="9" height="6" fill="#3a3a3a" stroke="#222" stroke-width="0.7"/><path d="M5 2.5H12.5 M5 4.5H12.5" stroke="#666" stroke-width="0.5"/></g><text x="0" y="250.55" font-size="10" text-anchor="middle" fill="#111" stroke="#111" stroke-width="0.36" font-family="Liberation Sans" transform="translate(118.93,0) scale(0.9,1)">36</text>
<g transform="translate(139.00,231.10) scale(0.9)"><path d="M2.5 -1.2 L6 1 M5.5 -1.2 L2 1" stroke="#111" stroke-width="1"/><rect x="0" y="1" width="8" height="5" fill="#b0b0b0" stroke="#222" stroke-width="0.8"/><path d="M1 3H8 M1 4.5H8" stroke="#eee" stroke-width="0.6"/><path d="M8 1 L14 3.5 L8 6Z" fill="#e8e8e8" stroke="#222" stroke-width="0.8"/></g><text x="0" y="250.55" font-size="10" text-anchor="middle" fill="#111" stroke="#111" stroke-width="0.36" font-family="Liberation Sans" transform="translate(145.30,0) scale(0.9,1)">30</text>
<g transform="translate(165.37,231.10) scale(0.9)"><path d="M2.5 -1.2 L6 1 M5.5 -1.2 L2 1" stroke="#111" stroke-width="1"/><rect x="0" y="1" width="8" height="5" fill="#b0b0b0" stroke="#222" stroke-width="0.8"/><path d="M1 3H8 M1 4.5H8" stroke="#eee" stroke-width="0.6"/><path d="M8 1 L14 3.5 L8 6Z" fill="#e8e8e8" stroke="#222" stroke-width="0.8"/></g><text x="0" y="250.55" font-size="10" text-anchor="middle" fill="#111" stroke="#111" stroke-width="0.36" font-family="Liberation Sans" transform="translate(171.67,0) scale(0.9,1)">30</text>
<g transform="translate(191.73,236.60) scale(0.9)"><rect x="0" y="0.5" width="8" height="6" fill="#aaa" stroke="#222" stroke-width="0.8"/><path d="M1 2.5H8 M1 4.5H8" stroke="#e8e8e8" stroke-width="0.7"/><path d="M8 1.5 L12 2.3 L12 4.7 L8 5.5Z" fill="#ccc" stroke="#333" stroke-width="0.6"/><rect x="12" y="2.3" width="2" height="2.4" fill="#111"/></g>
<g transform="translate(218.10,231.10) scale(0.9)"><rect x="0" y="0.5" width="8" height="6" fill="#aaa" stroke="#222" stroke-width="0.8"/><path d="M1 2.5H8 M1 4.5H8" stroke="#e8e8e8" stroke-width="0.7"/><path d="M8 1.5 L12 2.3 L12 4.7 L8 5.5Z" fill="#ccc" stroke="#333" stroke-width="0.6"/><rect x="12" y="2.3" width="2" height="2.4" fill="#111"/></g><text x="0" y="250.55" font-size="10" text-anchor="middle" fill="#111" stroke="#111" stroke-width="0.36" font-family="Liberation Sans" transform="translate(224.41,0) scale(0.9,1)">9</text>
<g transform="translate(244.47,236.60) scale(0.9)"><rect x="0" y="0.5" width="8" height="6" fill="#aaa" stroke="#222" stroke-width="0.8"/><path d="M1 2.5H8 M1 4.5H8" stroke="#e8e8e8" stroke-width="0.7"/><path d="M8 1.5 L12 2.3 L12 4.7 L8 5.5Z" fill="#ccc" stroke="#333" stroke-width="0.6"/><rect x="12" y="2.3" width="2" height="2.4" fill="#111"/></g>
<g transform="translate(270.85,236.60) scale(0.9)"><rect x="0" y="0.5" width="8" height="6" fill="#aaa" stroke="#222" stroke-width="0.8"/><path d="M1 2.5H8 M1 4.5H8" stroke="#e8e8e8" stroke-width="0.7"/><path d="M8 1.5 L12 2.3 L12 4.7 L8 5.5Z" fill="#ccc" stroke="#333" stroke-width="0.6"/><rect x="12" y="2.3" width="2" height="2.4" fill="#111"/></g>
<g transform="translate(297.22,231.10) scale(0.9)"><rect x="0" y="0.5" width="8" height="6" fill="#aaa" stroke="#222" stroke-width="0.8"/><path d="M1 2.5H8 M1 4.5H8" stroke="#e8e8e8" stroke-width="0.7"/><path d="M8 1.5 L12 2.3 L12 4.7 L8 5.5Z" fill="#ccc" stroke="#333" stroke-width="0.6"/><rect x="12" y="2.3" width="2" height="2.4" fill="#111"/></g><text x="0" y="250.55" font-size="10" text-anchor="middle" fill="#111" stroke="#111" stroke-width="0.36" font-family="Liberation Sans" transform="translate(303.52,0) scale(0.9,1)">9</text>
<g transform="translate(323.58,236.60) scale(0.9)"><rect x="0" y="0.5" width="8" height="6" fill="#aaa" stroke="#222" stroke-width="0.8"/><path d="M1 2.5H8 M1 4.5H8" stroke="#e8e8e8" stroke-width="0.7"/><path d="M8 1.5 L12 2.3 L12 4.7 L8 5.5Z" fill="#ccc" stroke="#333" stroke-width="0.6"/><rect x="12" y="2.3" width="2" height="2.4" fill="#111"/></g>
<circle cx="351.1" cy="237.0" r="0.40" fill="#111" fill-opacity="1.0"/><circle cx="355.0" cy="241.1" r="0.87" fill="#111" fill-opacity="1.0"/><circle cx="357.4" cy="236.8" r="1.03" fill="#111" fill-opacity="1.0"/><circle cx="356.2" cy="235.8" r="1.05" fill="#111" fill-opacity="1.0"/><circle cx="358.7" cy="238.1" r="0.84" fill="#111" fill-opacity="1.0"/><circle cx="350.4" cy="237.1" r="0.51" fill="#111" fill-opacity="1.0"/><circle cx="356.0" cy="235.5" r="1.10" fill="#111" fill-opacity="1.0"/><circle cx="357.9" cy="237.6" r="1.00" fill="#111" fill-opacity="1.0"/><circle cx="356.5" cy="235.6" r="1.03" fill="#111" fill-opacity="1.0"/><circle cx="357.0" cy="234.7" r="0.94" fill="#111" fill-opacity="1.0"/><circle cx="356.3" cy="236.2" r="0.50" fill="#111" fill-opacity="1.0"/><circle cx="354.5" cy="239.9" r="0.72" fill="#111" fill-opacity="1.0"/><circle cx="361.7" cy="235.4" r="0.53" fill="#111" fill-opacity="1.0"/><circle cx="356.1" cy="235.8" r="0.81" fill="#111" fill-opacity="1.0"/><circle cx="353.8" cy="233.9" r="0.44" fill="#111" fill-opacity="1.0"/><circle cx="356.0" cy="235.5" r="1.01" fill="#111" fill-opacity="1.0"/><circle cx="356.0" cy="235.8" r="1.11" fill="#111" fill-opacity="1.0"/><circle cx="357.7" cy="235.3" r="1.07" fill="#111" fill-opacity="1.0"/><circle cx="355.6" cy="238.2" r="0.80" fill="#111" fill-opacity="1.0"/><circle cx="356.3" cy="235.6" r="0.40" fill="#111" fill-opacity="1.0"/><circle cx="357.3" cy="237.1" r="0.97" fill="#111" fill-opacity="1.0"/><circle cx="356.2" cy="235.4" r="0.93" fill="#111" fill-opacity="1.0"/><circle cx="356.3" cy="235.8" r="0.73" fill="#111" fill-opacity="1.0"/><circle cx="360.9" cy="233.1" r="0.71" fill="#111" fill-opacity="1.0"/><circle cx="356.5" cy="235.1" r="0.49" fill="#111" fill-opacity="1.0"/><circle cx="359.9" cy="234.9" r="0.50" fill="#111" fill-opacity="1.0"/><circle cx="353.9" cy="239.2" r="0.42" fill="#111" fill-opacity="1.0"/><circle cx="358.1" cy="239.7" r="0.55" fill="#111" fill-opacity="1.0"/><circle cx="354.4" cy="236.7" r="0.73" fill="#111" fill-opacity="1.0"/><circle cx="355.9" cy="236.6" r="0.98" fill="#111" fill-opacity="1.0"/><circle cx="356.6" cy="230.5" r="0.41" fill="#111" fill-opacity="1.0"/><circle cx="359.1" cy="239.6" r="0.61" fill="#111" fill-opacity="1.0"/><circle cx="356.6" cy="234.6" r="0.67" fill="#111" fill-opacity="1.0"/><circle cx="355.3" cy="234.1" r="0.77" fill="#111" fill-opacity="1.0"/><circle cx="361.3" cy="236.8" r="0.84" fill="#111" fill-opacity="1.0"/><circle cx="356.2" cy="237.9" r="0.85" fill="#111" fill-opacity="1.0"/><circle cx="356.3" cy="235.7" r="1.07" fill="#111" fill-opacity="1.0"/><circle cx="356.2" cy="235.7" r="0.65" fill="#111" fill-opacity="1.0"/><circle cx="356.2" cy="235.4" r="0.82" fill="#111" fill-opacity="1.0"/><circle cx="353.4" cy="234.7" r="0.39" fill="#111" fill-opacity="1.0"/><circle cx="362.2" cy="236.4" r="0.50" fill="#111" fill-opacity="1.0"/><circle cx="357.4" cy="238.3" r="0.39" fill="#111" fill-opacity="1.0"/><circle cx="355.8" cy="231.8" r="0.63" fill="#111" fill-opacity="1.0"/><circle cx="354.3" cy="234.4" r="0.89" fill="#111" fill-opacity="1.0"/><circle cx="356.3" cy="235.8" r="0.45" fill="#111" fill-opacity="1.0"/><circle cx="361.9" cy="233.5" r="0.57" fill="#111" fill-opacity="1.0"/><circle cx="356.1" cy="234.9" r="0.82" fill="#111" fill-opacity="1.0"/><circle cx="354.0" cy="237.5" r="1.06" fill="#111" fill-opacity="1.0"/><circle cx="360.3" cy="232.0" r="1.00" fill="#111" fill-opacity="1.0"/><circle cx="355.5" cy="235.9" r="1.00" fill="#111" fill-opacity="1.0"/><circle cx="355.9" cy="235.4" r="0.67" fill="#111" fill-opacity="1.0"/><circle cx="360.5" cy="237.1" r="1.08" fill="#111" fill-opacity="1.0"/><circle cx="359.7" cy="235.9" r="1.05" fill="#111" fill-opacity="1.0"/><circle cx="359.5" cy="233.4" r="0.47" fill="#111" fill-opacity="1.0"/><circle cx="354.8" cy="235.2" r="0.81" fill="#111" fill-opacity="1.0"/><circle cx="355.7" cy="236.3" r="0.82" fill="#111" fill-opacity="1.0"/><circle cx="356.6" cy="236.0" r="0.84" fill="#111" fill-opacity="1.0"/><circle cx="356.2" cy="235.4" r="0.43" fill="#111" fill-opacity="1.0"/><circle cx="356.0" cy="235.9" r="1.08" fill="#111" fill-opacity="1.0"/><circle cx="356.2" cy="235.8" r="0.74" fill="#111" fill-opacity="1.0"/><circle cx="354.2" cy="235.3" r="0.81" fill="#111" fill-opacity="1.0"/><circle cx="356.8" cy="236.0" r="0.82" fill="#111" fill-opacity="1.0"/><circle cx="358.4" cy="236.2" r="0.55" fill="#111" fill-opacity="1.0"/><circle cx="356.4" cy="233.3" r="0.83" fill="#111" fill-opacity="1.0"/><circle cx="355.5" cy="237.9" r="0.73" fill="#111" fill-opacity="1.0"/><circle cx="353.0" cy="236.3" r="0.75" fill="#111" fill-opacity="1.0"/><circle cx="356.3" cy="233.9" r="0.55" fill="#111" fill-opacity="1.0"/><circle cx="356.4" cy="235.8" r="0.38" fill="#111" fill-opacity="1.0"/><circle cx="359.6" cy="237.6" r="0.86" fill="#111" fill-opacity="1.0"/><circle cx="354.6" cy="240.0" r="0.56" fill="#111" fill-opacity="1.0"/><text x="0" y="250.55" font-size="10" text-anchor="middle" fill="#111" stroke="#111" stroke-width="0.36" font-family="Liberation Sans" transform="translate(356.25,0) scale(0.9,1)">45</text>
<circle cx="382.2" cy="236.1" r="0.33" fill="#222" fill-opacity="1.0"/><circle cx="384.3" cy="234.9" r="0.60" fill="#222" fill-opacity="1.0"/><circle cx="381.5" cy="235.4" r="0.62" fill="#222" fill-opacity="1.0"/><circle cx="380.2" cy="234.6" r="0.58" fill="#222" fill-opacity="1.0"/><circle cx="383.4" cy="234.7" r="0.33" fill="#222" fill-opacity="1.0"/><circle cx="384.1" cy="237.6" r="0.33" fill="#222" fill-opacity="1.0"/><circle cx="381.5" cy="234.2" r="0.28" fill="#222" fill-opacity="1.0"/><circle cx="382.6" cy="235.7" r="0.68" fill="#222" fill-opacity="1.0"/><circle cx="382.9" cy="235.3" r="0.61" fill="#222" fill-opacity="1.0"/><circle cx="382.6" cy="235.5" r="0.58" fill="#222" fill-opacity="1.0"/><circle cx="385.0" cy="237.8" r="0.59" fill="#222" fill-opacity="1.0"/><circle cx="382.7" cy="235.7" r="0.41" fill="#222" fill-opacity="1.0"/><circle cx="381.1" cy="234.5" r="0.34" fill="#222" fill-opacity="1.0"/><circle cx="384.9" cy="234.0" r="0.40" fill="#222" fill-opacity="1.0"/><circle cx="384.0" cy="237.4" r="0.45" fill="#222" fill-opacity="1.0"/><circle cx="381.8" cy="234.5" r="0.45" fill="#222" fill-opacity="1.0"/><circle cx="383.0" cy="235.8" r="0.48" fill="#222" fill-opacity="1.0"/><circle cx="382.4" cy="234.6" r="0.62" fill="#222" fill-opacity="1.0"/><circle cx="379.6" cy="235.0" r="0.58" fill="#222" fill-opacity="1.0"/><circle cx="382.5" cy="236.0" r="0.28" fill="#222" fill-opacity="1.0"/><circle cx="385.6" cy="236.4" r="0.69" fill="#222" fill-opacity="1.0"/><circle cx="382.6" cy="235.5" r="0.58" fill="#222" fill-opacity="1.0"/><text x="0" y="250.55" font-size="10" text-anchor="middle" fill="#111" stroke="#111" stroke-width="0.36" font-family="Liberation Sans" transform="translate(382.62,0) scale(0.9,1)">14</text>
<circle cx="409.0" cy="235.7" r="0.39" fill="#222" fill-opacity="1.0"/><circle cx="409.7" cy="239.7" r="0.59" fill="#222" fill-opacity="1.0"/><circle cx="409.2" cy="235.6" r="0.46" fill="#222" fill-opacity="1.0"/><circle cx="409.8" cy="235.9" r="0.50" fill="#222" fill-opacity="1.0"/><circle cx="409.7" cy="235.9" r="0.57" fill="#222" fill-opacity="1.0"/><circle cx="408.2" cy="235.5" r="0.54" fill="#222" fill-opacity="1.0"/><circle cx="409.0" cy="235.7" r="0.65" fill="#222" fill-opacity="1.0"/><circle cx="408.5" cy="234.5" r="0.33" fill="#222" fill-opacity="1.0"/><circle cx="410.4" cy="235.4" r="0.30" fill="#222" fill-opacity="1.0"/><circle cx="413.4" cy="238.5" r="0.55" fill="#222" fill-opacity="1.0"/><circle cx="410.5" cy="232.0" r="0.52" fill="#222" fill-opacity="1.0"/><circle cx="410.7" cy="235.5" r="0.53" fill="#222" fill-opacity="1.0"/><circle cx="410.7" cy="233.0" r="0.68" fill="#222" fill-opacity="1.0"/><circle cx="405.3" cy="234.0" r="0.27" fill="#222" fill-opacity="1.0"/><circle cx="409.2" cy="236.8" r="0.29" fill="#222" fill-opacity="1.0"/><circle cx="409.0" cy="236.0" r="0.39" fill="#222" fill-opacity="1.0"/><circle cx="407.9" cy="234.6" r="0.44" fill="#222" fill-opacity="1.0"/><circle cx="409.3" cy="236.7" r="0.72" fill="#222" fill-opacity="1.0"/><circle cx="407.0" cy="233.3" r="0.34" fill="#222" fill-opacity="1.0"/><circle cx="408.9" cy="235.3" r="0.44" fill="#222" fill-opacity="1.0"/><circle cx="412.6" cy="235.5" r="0.53" fill="#222" fill-opacity="1.0"/><circle cx="406.8" cy="231.3" r="0.64" fill="#222" fill-opacity="1.0"/><circle cx="409.0" cy="235.8" r="0.41" fill="#222" fill-opacity="1.0"/><circle cx="408.9" cy="236.4" r="0.72" fill="#222" fill-opacity="1.0"/><circle cx="410.0" cy="234.9" r="0.58" fill="#222" fill-opacity="1.0"/><circle cx="404.2" cy="239.1" r="0.48" fill="#222" fill-opacity="1.0"/><circle cx="408.9" cy="236.6" r="0.53" fill="#222" fill-opacity="1.0"/><circle cx="408.7" cy="238.7" r="0.70" fill="#222" fill-opacity="1.0"/><circle cx="408.3" cy="236.2" r="0.75" fill="#222" fill-opacity="1.0"/><circle cx="408.8" cy="235.7" r="0.27" fill="#222" fill-opacity="1.0"/><circle cx="411.7" cy="237.8" r="0.65" fill="#222" fill-opacity="1.0"/><circle cx="408.9" cy="235.8" r="0.44" fill="#222" fill-opacity="1.0"/><circle cx="411.8" cy="235.7" r="0.74" fill="#222" fill-opacity="1.0"/><circle cx="409.0" cy="235.7" r="0.61" fill="#222" fill-opacity="1.0"/><circle cx="407.8" cy="233.4" r="0.38" fill="#222" fill-opacity="1.0"/><circle cx="408.8" cy="235.5" r="0.47" fill="#222" fill-opacity="1.0"/><circle cx="402.9" cy="237.4" r="0.69" fill="#222" fill-opacity="1.0"/><circle cx="408.8" cy="238.1" r="0.34" fill="#222" fill-opacity="1.0"/><circle cx="413.8" cy="233.1" r="0.40" fill="#222" fill-opacity="1.0"/><circle cx="406.8" cy="233.4" r="0.33" fill="#222" fill-opacity="1.0"/><circle cx="409.2" cy="233.2" r="0.64" fill="#222" fill-opacity="1.0"/><circle cx="409.0" cy="235.7" r="0.41" fill="#222" fill-opacity="1.0"/><circle cx="415.1" cy="236.4" r="0.69" fill="#222" fill-opacity="1.0"/><circle cx="409.6" cy="234.7" r="0.28" fill="#222" fill-opacity="1.0"/><circle cx="413.5" cy="231.8" r="0.29" fill="#222" fill-opacity="1.0"/><circle cx="408.8" cy="235.8" r="0.63" fill="#222" fill-opacity="1.0"/><circle cx="409.0" cy="235.4" r="0.49" fill="#222" fill-opacity="1.0"/><circle cx="408.0" cy="235.5" r="0.69" fill="#222" fill-opacity="1.0"/><circle cx="408.3" cy="236.1" r="0.52" fill="#222" fill-opacity="1.0"/><circle cx="408.9" cy="235.1" r="0.41" fill="#222" fill-opacity="1.0"/><circle cx="412.7" cy="235.6" r="0.47" fill="#222" fill-opacity="1.0"/><circle cx="408.6" cy="235.7" r="0.36" fill="#222" fill-opacity="1.0"/><circle cx="407.3" cy="238.2" r="0.37" fill="#222" fill-opacity="1.0"/><circle cx="409.0" cy="235.9" r="0.57" fill="#222" fill-opacity="1.0"/><circle cx="409.8" cy="241.1" r="0.68" fill="#222" fill-opacity="1.0"/><circle cx="409.8" cy="236.1" r="0.58" fill="#222" fill-opacity="1.0"/><circle cx="409.1" cy="236.1" r="0.72" fill="#222" fill-opacity="1.0"/><circle cx="406.8" cy="234.8" r="0.64" fill="#222" fill-opacity="1.0"/><circle cx="409.2" cy="235.2" r="0.30" fill="#222" fill-opacity="1.0"/><circle cx="407.1" cy="236.5" r="0.48" fill="#222" fill-opacity="1.0"/><circle cx="408.5" cy="232.2" r="0.74" fill="#222" fill-opacity="1.0"/><circle cx="410.6" cy="236.8" r="0.42" fill="#222" fill-opacity="1.0"/><circle cx="409.6" cy="235.1" r="0.35" fill="#222" fill-opacity="1.0"/><circle cx="407.1" cy="236.3" r="0.39" fill="#222" fill-opacity="1.0"/><circle cx="409.0" cy="241.3" r="0.47" fill="#222" fill-opacity="1.0"/><circle cx="410.9" cy="233.7" r="0.28" fill="#222" fill-opacity="1.0"/><circle cx="414.3" cy="235.7" r="0.73" fill="#222" fill-opacity="1.0"/><circle cx="413.8" cy="233.6" r="0.33" fill="#222" fill-opacity="1.0"/><circle cx="408.2" cy="235.8" r="0.45" fill="#222" fill-opacity="1.0"/><circle cx="410.6" cy="236.3" r="0.74" fill="#222" fill-opacity="1.0"/><circle cx="408.5" cy="240.1" r="0.48" fill="#222" fill-opacity="1.0"/><circle cx="403.3" cy="238.5" r="0.75" fill="#222" fill-opacity="1.0"/><circle cx="405.0" cy="234.4" r="0.33" fill="#222" fill-opacity="1.0"/><circle cx="407.1" cy="241.4" r="0.54" fill="#222" fill-opacity="1.0"/><circle cx="404.6" cy="234.7" r="0.28" fill="#222" fill-opacity="1.0"/><circle cx="406.7" cy="234.6" r="0.68" fill="#222" fill-opacity="1.0"/><circle cx="412.5" cy="240.6" r="0.29" fill="#222" fill-opacity="1.0"/><circle cx="410.3" cy="238.5" r="0.59" fill="#222" fill-opacity="1.0"/><circle cx="409.0" cy="236.1" r="0.70" fill="#222" fill-opacity="1.0"/><circle cx="409.1" cy="238.7" r="0.56" fill="#222" fill-opacity="1.0"/><circle cx="406.2" cy="237.2" r="0.51" fill="#222" fill-opacity="1.0"/><circle cx="409.7" cy="235.5" r="0.61" fill="#222" fill-opacity="1.0"/><circle cx="409.1" cy="237.4" r="0.59" fill="#222" fill-opacity="1.0"/><circle cx="408.6" cy="236.9" r="0.63" fill="#222" fill-opacity="1.0"/><circle cx="411.1" cy="236.7" r="0.75" fill="#222" fill-opacity="1.0"/><circle cx="409.2" cy="235.7" r="0.36" fill="#222" fill-opacity="1.0"/><circle cx="408.4" cy="241.3" r="0.69" fill="#222" fill-opacity="1.0"/><circle cx="410.2" cy="234.7" r="0.33" fill="#222" fill-opacity="1.0"/><circle cx="411.1" cy="232.5" r="0.56" fill="#222" fill-opacity="1.0"/><circle cx="412.7" cy="235.5" r="0.25" fill="#222" fill-opacity="1.0"/><circle cx="409.5" cy="234.7" r="0.58" fill="#222" fill-opacity="1.0"/><circle cx="409.4" cy="235.6" r="0.31" fill="#222" fill-opacity="1.0"/><circle cx="411.3" cy="237.4" r="0.39" fill="#222" fill-opacity="1.0"/><circle cx="405.6" cy="233.4" r="0.35" fill="#222" fill-opacity="1.0"/><circle cx="408.3" cy="235.0" r="0.49" fill="#222" fill-opacity="1.0"/><circle cx="413.5" cy="233.0" r="0.30" fill="#222" fill-opacity="1.0"/><circle cx="408.0" cy="236.2" r="0.25" fill="#222" fill-opacity="1.0"/><circle cx="409.5" cy="232.5" r="0.38" fill="#222" fill-opacity="1.0"/><circle cx="408.8" cy="233.1" r="0.46" fill="#222" fill-opacity="1.0"/><circle cx="409.2" cy="235.8" r="0.69" fill="#222" fill-opacity="1.0"/><circle cx="411.4" cy="234.2" r="0.67" fill="#222" fill-opacity="1.0"/><circle cx="408.6" cy="235.5" r="0.31" fill="#222" fill-opacity="1.0"/><circle cx="406.9" cy="240.7" r="0.65" fill="#222" fill-opacity="1.0"/><circle cx="412.8" cy="231.7" r="0.36" fill="#222" fill-opacity="1.0"/><circle cx="409.0" cy="236.0" r="0.64" fill="#222" fill-opacity="1.0"/><circle cx="410.4" cy="234.6" r="0.56" fill="#222" fill-opacity="1.0"/><circle cx="412.5" cy="240.4" r="0.68" fill="#222" fill-opacity="1.0"/><circle cx="414.0" cy="235.1" r="0.69" fill="#222" fill-opacity="1.0"/><circle cx="413.4" cy="236.4" r="0.42" fill="#222" fill-opacity="1.0"/><circle cx="413.5" cy="233.8" r="0.68" fill="#222" fill-opacity="1.0"/><text x="0" y="250.55" font-size="10" text-anchor="middle" fill="#111" stroke="#111" stroke-width="0.36" font-family="Liberation Sans" transform="translate(409.00,0) scale(0.9,1)">24</text>
<circle cx="70.2" cy="262.9" r="0.32" fill="#222" fill-opacity="1.0"/><circle cx="62.4" cy="262.9" r="0.65" fill="#222" fill-opacity="1.0"/><circle cx="63.7" cy="262.7" r="0.26" fill="#222" fill-opacity="1.0"/><circle cx="64.6" cy="262.7" r="0.68" fill="#222" fill-opacity="1.0"/><circle cx="61.8" cy="260.8" r="0.47" fill="#222" fill-opacity="1.0"/><circle cx="68.6" cy="266.5" r="0.66" fill="#222" fill-opacity="1.0"/><circle cx="66.0" cy="262.2" r="0.51" fill="#222" fill-opacity="1.0"/><circle cx="61.4" cy="262.2" r="0.55" fill="#222" fill-opacity="1.0"/><circle cx="63.0" cy="261.9" r="0.44" fill="#222" fill-opacity="1.0"/><circle cx="66.3" cy="262.1" r="0.72" fill="#222" fill-opacity="1.0"/><circle cx="66.8" cy="261.1" r="0.69" fill="#222" fill-opacity="1.0"/><circle cx="65.9" cy="262.0" r="0.68" fill="#222" fill-opacity="1.0"/><circle cx="60.8" cy="259.2" r="0.59" fill="#222" fill-opacity="1.0"/><circle cx="69.1" cy="263.8" r="0.64" fill="#222" fill-opacity="1.0"/><circle cx="67.4" cy="261.3" r="0.51" fill="#222" fill-opacity="1.0"/><circle cx="66.0" cy="261.6" r="0.67" fill="#222" fill-opacity="1.0"/><circle cx="66.2" cy="262.0" r="0.55" fill="#222" fill-opacity="1.0"/><circle cx="65.7" cy="262.5" r="0.55" fill="#222" fill-opacity="1.0"/><circle cx="69.1" cy="261.5" r="0.31" fill="#222" fill-opacity="1.0"/><circle cx="61.4" cy="262.2" r="0.73" fill="#222" fill-opacity="1.0"/><circle cx="66.2" cy="262.0" r="0.73" fill="#222" fill-opacity="1.0"/><circle cx="66.0" cy="261.9" r="0.31" fill="#222" fill-opacity="1.0"/><circle cx="69.5" cy="263.8" r="0.33" fill="#222" fill-opacity="1.0"/><circle cx="66.3" cy="261.8" r="0.52" fill="#222" fill-opacity="1.0"/><circle cx="66.1" cy="262.1" r="0.25" fill="#222" fill-opacity="1.0"/><circle cx="71.6" cy="258.6" r="0.31" fill="#222" fill-opacity="1.0"/><circle cx="65.5" cy="256.0" r="0.70" fill="#222" fill-opacity="1.0"/><circle cx="67.3" cy="261.2" r="0.61" fill="#222" fill-opacity="1.0"/><circle cx="60.0" cy="262.1" r="0.60" fill="#222" fill-opacity="1.0"/><circle cx="69.2" cy="257.9" r="0.44" fill="#222" fill-opacity="1.0"/><circle cx="66.1" cy="261.8" r="0.35" fill="#222" fill-opacity="1.0"/><circle cx="68.0" cy="261.4" r="0.59" fill="#222" fill-opacity="1.0"/><circle cx="65.3" cy="261.6" r="0.54" fill="#222" fill-opacity="1.0"/><circle cx="67.4" cy="261.4" r="0.42" fill="#222" fill-opacity="1.0"/><circle cx="66.4" cy="262.6" r="0.66" fill="#222" fill-opacity="1.0"/><circle cx="64.4" cy="256.4" r="0.58" fill="#222" fill-opacity="1.0"/><circle cx="67.0" cy="261.9" r="0.34" fill="#222" fill-opacity="1.0"/><circle cx="66.6" cy="263.6" r="0.74" fill="#222" fill-opacity="1.0"/><circle cx="66.5" cy="264.1" r="0.28" fill="#222" fill-opacity="1.0"/><circle cx="69.1" cy="262.5" r="0.56" fill="#222" fill-opacity="1.0"/><circle cx="60.2" cy="261.7" r="0.68" fill="#222" fill-opacity="1.0"/><circle cx="69.2" cy="261.2" r="0.38" fill="#222" fill-opacity="1.0"/><circle cx="69.4" cy="265.1" r="0.33" fill="#222" fill-opacity="1.0"/><circle cx="70.3" cy="262.2" r="0.31" fill="#222" fill-opacity="1.0"/><circle cx="65.7" cy="261.6" r="0.46" fill="#222" fill-opacity="1.0"/><circle cx="67.9" cy="262.2" r="0.41" fill="#222" fill-opacity="1.0"/><circle cx="66.2" cy="262.4" r="0.54" fill="#222" fill-opacity="1.0"/><circle cx="65.9" cy="261.4" r="0.27" fill="#222" fill-opacity="1.0"/><circle cx="65.7" cy="265.8" r="0.39" fill="#222" fill-opacity="1.0"/><circle cx="66.1" cy="261.9" r="0.60" fill="#222" fill-opacity="1.0"/><circle cx="66.7" cy="262.6" r="0.61" fill="#222" fill-opacity="1.0"/><circle cx="62.6" cy="262.6" r="0.39" fill="#222" fill-opacity="1.0"/><circle cx="65.6" cy="261.1" r="0.49" fill="#222" fill-opacity="1.0"/><circle cx="60.6" cy="263.9" r="0.63" fill="#222" fill-opacity="1.0"/><circle cx="61.0" cy="260.6" r="0.56" fill="#222" fill-opacity="1.0"/><circle cx="65.7" cy="259.6" r="0.54" fill="#222" fill-opacity="1.0"/><circle cx="67.6" cy="267.5" r="0.57" fill="#222" fill-opacity="1.0"/><circle cx="67.6" cy="259.3" r="0.26" fill="#222" fill-opacity="1.0"/><circle cx="70.6" cy="265.3" r="0.60" fill="#222" fill-opacity="1.0"/><circle cx="71.0" cy="259.1" r="0.37" fill="#222" fill-opacity="1.0"/><circle cx="69.6" cy="261.8" r="0.62" fill="#222" fill-opacity="1.0"/><circle cx="65.2" cy="262.0" r="0.49" fill="#222" fill-opacity="1.0"/><circle cx="65.0" cy="262.3" r="0.42" fill="#222" fill-opacity="1.0"/><circle cx="65.2" cy="262.4" r="0.32" fill="#222" fill-opacity="1.0"/><circle cx="66.7" cy="260.7" r="0.43" fill="#222" fill-opacity="1.0"/><circle cx="67.0" cy="258.4" r="0.47" fill="#222" fill-opacity="1.0"/><circle cx="64.4" cy="266.2" r="0.37" fill="#222" fill-opacity="1.0"/><circle cx="64.5" cy="262.4" r="0.75" fill="#222" fill-opacity="1.0"/><circle cx="66.4" cy="265.0" r="0.51" fill="#222" fill-opacity="1.0"/><circle cx="66.8" cy="262.2" r="0.69" fill="#222" fill-opacity="1.0"/><circle cx="66.4" cy="261.4" r="0.34" fill="#222" fill-opacity="1.0"/><circle cx="69.2" cy="260.9" r="0.61" fill="#222" fill-opacity="1.0"/><circle cx="67.1" cy="261.5" r="0.50" fill="#222" fill-opacity="1.0"/><circle cx="66.7" cy="261.7" r="0.38" fill="#222" fill-opacity="1.0"/><circle cx="70.1" cy="258.8" r="0.51" fill="#222" fill-opacity="1.0"/><circle cx="69.7" cy="265.6" r="0.40" fill="#222" fill-opacity="1.0"/><circle cx="66.2" cy="261.1" r="0.33" fill="#222" fill-opacity="1.0"/><circle cx="65.5" cy="260.5" r="0.44" fill="#222" fill-opacity="1.0"/><circle cx="64.1" cy="262.8" r="0.49" fill="#222" fill-opacity="1.0"/><circle cx="66.0" cy="261.8" r="0.59" fill="#222" fill-opacity="1.0"/><circle cx="61.0" cy="262.4" r="0.39" fill="#222" fill-opacity="1.0"/><circle cx="65.8" cy="261.5" r="0.60" fill="#222" fill-opacity="1.0"/><circle cx="65.0" cy="259.7" r="0.49" fill="#222" fill-opacity="1.0"/><circle cx="67.7" cy="261.6" r="0.29" fill="#222" fill-opacity="1.0"/><circle cx="66.1" cy="262.1" r="0.70" fill="#222" fill-opacity="1.0"/><circle cx="66.5" cy="261.5" r="0.56" fill="#222" fill-opacity="1.0"/><circle cx="67.7" cy="266.8" r="0.46" fill="#222" fill-opacity="1.0"/><circle cx="69.6" cy="263.2" r="0.29" fill="#222" fill-opacity="1.0"/><circle cx="71.0" cy="258.6" r="0.56" fill="#222" fill-opacity="1.0"/><circle cx="66.3" cy="266.4" r="0.27" fill="#222" fill-opacity="1.0"/><circle cx="67.2" cy="262.8" r="0.29" fill="#222" fill-opacity="1.0"/><circle cx="68.9" cy="259.5" r="0.65" fill="#222" fill-opacity="1.0"/><circle cx="65.7" cy="261.4" r="0.39" fill="#222" fill-opacity="1.0"/><circle cx="62.4" cy="259.3" r="0.56" fill="#222" fill-opacity="1.0"/><circle cx="64.0" cy="266.1" r="0.46" fill="#222" fill-opacity="1.0"/><circle cx="62.4" cy="258.5" r="0.58" fill="#222" fill-opacity="1.0"/><circle cx="63.0" cy="262.8" r="0.35" fill="#222" fill-opacity="1.0"/><circle cx="61.3" cy="263.9" r="0.49" fill="#222" fill-opacity="1.0"/><circle cx="71.3" cy="262.5" r="0.33" fill="#222" fill-opacity="1.0"/><circle cx="69.3" cy="262.6" r="0.63" fill="#222" fill-opacity="1.0"/><circle cx="67.9" cy="263.3" r="0.48" fill="#222" fill-opacity="1.0"/><circle cx="68.7" cy="264.3" r="0.38" fill="#222" fill-opacity="1.0"/><circle cx="65.2" cy="259.9" r="0.51" fill="#222" fill-opacity="1.0"/><circle cx="66.7" cy="266.3" r="0.26" fill="#222" fill-opacity="1.0"/><circle cx="66.1" cy="262.3" r="0.29" fill="#222" fill-opacity="1.0"/><circle cx="68.9" cy="262.2" r="0.29" fill="#222" fill-opacity="1.0"/><circle cx="67.8" cy="263.3" r="0.59" fill="#222" fill-opacity="1.0"/><circle cx="67.3" cy="265.3" r="0.53" fill="#222" fill-opacity="1.0"/><circle cx="70.7" cy="259.9" r="0.75" fill="#222" fill-opacity="1.0"/><circle cx="62.6" cy="266.1" r="0.41" fill="#222" fill-opacity="1.0"/><text x="0" y="276.85" font-size="10" text-anchor="middle" fill="#111" stroke="#111" stroke-width="0.36" font-family="Liberation Sans" transform="translate(66.19,0) scale(0.9,1)">27</text>
<circle cx="90.1" cy="263.5" r="0.68" fill="#222" fill-opacity="1.0"/><circle cx="92.9" cy="262.7" r="0.26" fill="#222" fill-opacity="1.0"/><circle cx="92.6" cy="262.1" r="0.33" fill="#222" fill-opacity="1.0"/><circle cx="85.9" cy="261.5" r="0.60" fill="#222" fill-opacity="1.0"/><circle cx="91.2" cy="263.3" r="0.60" fill="#222" fill-opacity="1.0"/><circle cx="92.5" cy="262.2" r="0.67" fill="#222" fill-opacity="1.0"/><circle cx="92.3" cy="261.9" r="0.29" fill="#222" fill-opacity="1.0"/><circle cx="97.9" cy="265.3" r="0.30" fill="#222" fill-opacity="1.0"/><circle cx="87.9" cy="257.9" r="0.27" fill="#222" fill-opacity="1.0"/><circle cx="90.7" cy="263.5" r="0.71" fill="#222" fill-opacity="1.0"/><circle cx="92.9" cy="262.9" r="0.37" fill="#222" fill-opacity="1.0"/><circle cx="96.3" cy="263.1" r="0.66" fill="#222" fill-opacity="1.0"/><circle cx="92.5" cy="262.1" r="0.61" fill="#222" fill-opacity="1.0"/><circle cx="92.2" cy="258.7" r="0.41" fill="#222" fill-opacity="1.0"/><circle cx="94.3" cy="259.2" r="0.54" fill="#222" fill-opacity="1.0"/><circle cx="91.7" cy="261.8" r="0.48" fill="#222" fill-opacity="1.0"/><circle cx="93.6" cy="258.6" r="0.42" fill="#222" fill-opacity="1.0"/><circle cx="94.8" cy="257.7" r="0.27" fill="#222" fill-opacity="1.0"/><circle cx="93.0" cy="262.7" r="0.26" fill="#222" fill-opacity="1.0"/><circle cx="92.6" cy="258.7" r="0.52" fill="#222" fill-opacity="1.0"/><circle cx="94.2" cy="262.0" r="0.35" fill="#222" fill-opacity="1.0"/><circle cx="93.7" cy="262.9" r="0.67" fill="#222" fill-opacity="1.0"/><circle cx="92.5" cy="262.0" r="0.47" fill="#222" fill-opacity="1.0"/><circle cx="95.9" cy="263.0" r="0.31" fill="#222" fill-opacity="1.0"/><circle cx="94.1" cy="265.1" r="0.67" fill="#222" fill-opacity="1.0"/><circle cx="91.7" cy="261.3" r="0.57" fill="#222" fill-opacity="1.0"/><circle cx="92.6" cy="262.1" r="0.39" fill="#222" fill-opacity="1.0"/><circle cx="91.2" cy="259.1" r="0.35" fill="#222" fill-opacity="1.0"/><circle cx="95.4" cy="258.0" r="0.39" fill="#222" fill-opacity="1.0"/><circle cx="93.6" cy="261.8" r="0.28" fill="#222" fill-opacity="1.0"/><circle cx="87.0" cy="261.7" r="0.55" fill="#222" fill-opacity="1.0"/><circle cx="90.2" cy="261.4" r="0.39" fill="#222" fill-opacity="1.0"/><circle cx="92.0" cy="263.7" r="0.52" fill="#222" fill-opacity="1.0"/><circle cx="92.7" cy="262.0" r="0.38" fill="#222" fill-opacity="1.0"/><circle cx="96.1" cy="260.9" r="0.29" fill="#222" fill-opacity="1.0"/><circle cx="89.1" cy="263.3" r="0.71" fill="#222" fill-opacity="1.0"/><circle cx="97.7" cy="264.7" r="0.64" fill="#222" fill-opacity="1.0"/><circle cx="92.0" cy="264.6" r="0.66" fill="#222" fill-opacity="1.0"/><circle cx="92.7" cy="265.8" r="0.53" fill="#222" fill-opacity="1.0"/><circle cx="93.5" cy="262.5" r="0.46" fill="#222" fill-opacity="1.0"/><circle cx="96.6" cy="266.4" r="0.38" fill="#222" fill-opacity="1.0"/><circle cx="92.9" cy="265.0" r="0.51" fill="#222" fill-opacity="1.0"/><circle cx="92.0" cy="263.2" r="0.50" fill="#222" fill-opacity="1.0"/><circle cx="92.7" cy="262.0" r="0.71" fill="#222" fill-opacity="1.0"/><circle cx="96.3" cy="260.7" r="0.65" fill="#222" fill-opacity="1.0"/><circle cx="87.8" cy="266.0" r="0.62" fill="#222" fill-opacity="1.0"/><circle cx="91.7" cy="260.2" r="0.36" fill="#222" fill-opacity="1.0"/><circle cx="91.0" cy="258.3" r="0.25" fill="#222" fill-opacity="1.0"/><circle cx="91.5" cy="264.4" r="0.36" fill="#222" fill-opacity="1.0"/><circle cx="93.0" cy="262.5" r="0.26" fill="#222" fill-opacity="1.0"/><circle cx="93.9" cy="263.2" r="0.50" fill="#222" fill-opacity="1.0"/><circle cx="91.7" cy="261.1" r="0.31" fill="#222" fill-opacity="1.0"/><circle cx="95.7" cy="260.5" r="0.59" fill="#222" fill-opacity="1.0"/><circle cx="92.0" cy="260.9" r="0.55" fill="#222" fill-opacity="1.0"/><circle cx="91.0" cy="265.1" r="0.66" fill="#222" fill-opacity="1.0"/><circle cx="97.5" cy="262.5" r="0.31" fill="#222" fill-opacity="1.0"/><circle cx="92.7" cy="262.1" r="0.53" fill="#222" fill-opacity="1.0"/><circle cx="96.4" cy="257.7" r="0.33" fill="#222" fill-opacity="1.0"/><circle cx="86.9" cy="264.5" r="0.69" fill="#222" fill-opacity="1.0"/><circle cx="93.0" cy="261.3" r="0.39" fill="#222" fill-opacity="1.0"/><circle cx="93.2" cy="262.8" r="0.45" fill="#222" fill-opacity="1.0"/><circle cx="93.7" cy="258.7" r="0.34" fill="#222" fill-opacity="1.0"/><circle cx="93.5" cy="263.9" r="0.70" fill="#222" fill-opacity="1.0"/><circle cx="87.7" cy="262.8" r="0.59" fill="#222" fill-opacity="1.0"/><circle cx="94.4" cy="260.4" r="0.44" fill="#222" fill-opacity="1.0"/><circle cx="87.7" cy="263.2" r="0.39" fill="#222" fill-opacity="1.0"/><circle cx="94.4" cy="266.6" r="0.49" fill="#222" fill-opacity="1.0"/><circle cx="92.2" cy="261.6" r="0.27" fill="#222" fill-opacity="1.0"/><circle cx="92.9" cy="263.9" r="0.27" fill="#222" fill-opacity="1.0"/><circle cx="91.7" cy="267.7" r="0.47" fill="#222" fill-opacity="1.0"/><circle cx="97.6" cy="262.2" r="0.40" fill="#222" fill-opacity="1.0"/><circle cx="94.3" cy="265.0" r="0.58" fill="#222" fill-opacity="1.0"/><circle cx="90.7" cy="265.5" r="0.69" fill="#222" fill-opacity="1.0"/><circle cx="91.2" cy="264.0" r="0.25" fill="#222" fill-opacity="1.0"/><circle cx="91.5" cy="261.5" r="0.58" fill="#222" fill-opacity="1.0"/><circle cx="92.6" cy="260.7" r="0.58" fill="#222" fill-opacity="1.0"/><circle cx="93.1" cy="261.9" r="0.65" fill="#222" fill-opacity="1.0"/><circle cx="86.3" cy="262.9" r="0.29" fill="#222" fill-opacity="1.0"/><circle cx="92.2" cy="262.4" r="0.38" fill="#222" fill-opacity="1.0"/><circle cx="94.7" cy="260.4" r="0.43" fill="#222" fill-opacity="1.0"/><circle cx="92.7" cy="262.0" r="0.26" fill="#222" fill-opacity="1.0"/><circle cx="92.9" cy="259.3" r="0.67" fill="#222" fill-opacity="1.0"/><circle cx="86.3" cy="262.2" r="0.42" fill="#222" fill-opacity="1.0"/><circle cx="93.3" cy="267.2" r="0.52" fill="#222" fill-opacity="1.0"/><circle cx="92.6" cy="262.1" r="0.26" fill="#222" fill-opacity="1.0"/><circle cx="92.1" cy="258.8" r="0.31" fill="#222" fill-opacity="1.0"/><circle cx="93.9" cy="257.9" r="0.57" fill="#222" fill-opacity="1.0"/><circle cx="90.7" cy="261.1" r="0.60" fill="#222" fill-opacity="1.0"/><circle cx="87.9" cy="265.6" r="0.55" fill="#222" fill-opacity="1.0"/><circle cx="89.7" cy="257.1" r="0.74" fill="#222" fill-opacity="1.0"/><circle cx="92.2" cy="262.0" r="0.51" fill="#222" fill-opacity="1.0"/><circle cx="93.2" cy="261.7" r="0.38" fill="#222" fill-opacity="1.0"/><circle cx="92.4" cy="262.8" r="0.66" fill="#222" fill-opacity="1.0"/><circle cx="92.3" cy="262.0" r="0.51" fill="#222" fill-opacity="1.0"/><circle cx="92.5" cy="262.0" r="0.35" fill="#222" fill-opacity="1.0"/><circle cx="96.6" cy="262.4" r="0.45" fill="#222" fill-opacity="1.0"/><circle cx="93.5" cy="262.1" r="0.35" fill="#222" fill-opacity="1.0"/><circle cx="90.7" cy="261.3" r="0.46" fill="#222" fill-opacity="1.0"/><circle cx="92.5" cy="262.1" r="0.41" fill="#222" fill-opacity="1.0"/><circle cx="90.6" cy="260.1" r="0.54" fill="#222" fill-opacity="1.0"/><circle cx="92.6" cy="262.1" r="0.63" fill="#222" fill-opacity="1.0"/><circle cx="91.7" cy="258.7" r="0.73" fill="#222" fill-opacity="1.0"/><circle cx="91.0" cy="265.8" r="0.39" fill="#222" fill-opacity="1.0"/><circle cx="87.7" cy="258.9" r="0.48" fill="#222" fill-opacity="1.0"/><circle cx="87.5" cy="258.0" r="0.49" fill="#222" fill-opacity="1.0"/><circle cx="93.0" cy="267.8" r="0.59" fill="#222" fill-opacity="1.0"/><circle cx="92.0" cy="262.9" r="0.26" fill="#222" fill-opacity="1.0"/><circle cx="98.2" cy="265.1" r="0.53" fill="#222" fill-opacity="1.0"/><circle cx="92.7" cy="261.2" r="0.67" fill="#222" fill-opacity="1.0"/><circle cx="91.0" cy="257.1" r="0.49" fill="#222" fill-opacity="1.0"/><text x="0" y="276.85" font-size="10" text-anchor="middle" fill="#111" stroke="#111" stroke-width="0.36" font-family="Liberation Sans" transform="translate(92.56,0) scale(0.9,1)">39</text>
<circle cx="118.5" cy="264.8" r="0.26" fill="#333" fill-opacity="1.0"/><circle cx="118.8" cy="262.3" r="0.23" fill="#333" fill-opacity="1.0"/><circle cx="118.8" cy="262.5" r="0.36" fill="#333" fill-opacity="1.0"/><circle cx="118.9" cy="261.9" r="0.51" fill="#333" fill-opacity="1.0"/><circle cx="122.6" cy="265.8" r="0.56" fill="#333" fill-opacity="1.0"/><circle cx="120.4" cy="267.3" r="0.55" fill="#333" fill-opacity="1.0"/><circle cx="121.2" cy="263.1" r="0.54" fill="#333" fill-opacity="1.0"/><circle cx="119.7" cy="261.7" r="0.34" fill="#333" fill-opacity="1.0"/><circle cx="120.0" cy="255.8" r="0.27" fill="#333" fill-opacity="1.0"/><circle cx="123.3" cy="264.6" r="0.37" fill="#333" fill-opacity="1.0"/><circle cx="114.2" cy="265.8" r="0.56" fill="#333" fill-opacity="1.0"/><circle cx="115.6" cy="257.3" r="0.55" fill="#333" fill-opacity="1.0"/><circle cx="120.5" cy="258.4" r="0.49" fill="#333" fill-opacity="1.0"/><circle cx="125.0" cy="264.2" r="0.64" fill="#333" fill-opacity="1.0"/><circle cx="116.4" cy="265.1" r="0.23" fill="#333" fill-opacity="1.0"/><circle cx="114.8" cy="262.1" r="0.36" fill="#333" fill-opacity="1.0"/><circle cx="113.8" cy="264.8" r="0.29" fill="#333" fill-opacity="1.0"/><circle cx="118.6" cy="262.1" r="0.40" fill="#333" fill-opacity="1.0"/><circle cx="121.9" cy="259.6" r="0.24" fill="#333" fill-opacity="1.0"/><circle cx="121.7" cy="258.9" r="0.46" fill="#333" fill-opacity="1.0"/><circle cx="118.5" cy="263.6" r="0.31" fill="#333" fill-opacity="1.0"/><circle cx="118.8" cy="261.9" r="0.65" fill="#333" fill-opacity="1.0"/><circle cx="122.3" cy="264.3" r="0.48" fill="#333" fill-opacity="1.0"/><circle cx="117.9" cy="263.1" r="0.42" fill="#333" fill-opacity="1.0"/><circle cx="115.5" cy="267.7" r="0.52" fill="#333" fill-opacity="1.0"/><circle cx="114.5" cy="261.6" r="0.45" fill="#333" fill-opacity="1.0"/><circle cx="119.0" cy="262.1" r="0.66" fill="#333" fill-opacity="1.0"/><circle cx="119.2" cy="261.7" r="0.50" fill="#333" fill-opacity="1.0"/><circle cx="120.3" cy="256.4" r="0.25" fill="#333" fill-opacity="1.0"/><circle cx="120.5" cy="263.6" r="0.50" fill="#333" fill-opacity="1.0"/><circle cx="123.1" cy="264.2" r="0.56" fill="#333" fill-opacity="1.0"/><circle cx="113.2" cy="263.8" r="0.40" fill="#333" fill-opacity="1.0"/><circle cx="120.1" cy="260.2" r="0.41" fill="#333" fill-opacity="1.0"/><circle cx="115.4" cy="265.1" r="0.62" fill="#333" fill-opacity="1.0"/><circle cx="122.4" cy="263.6" r="0.60" fill="#333" fill-opacity="1.0"/><circle cx="118.5" cy="261.0" r="0.39" fill="#333" fill-opacity="1.0"/><circle cx="119.8" cy="261.4" r="0.65" fill="#333" fill-opacity="1.0"/><circle cx="116.3" cy="264.0" r="0.54" fill="#333" fill-opacity="1.0"/><circle cx="117.3" cy="258.8" r="0.62" fill="#333" fill-opacity="1.0"/><circle cx="114.7" cy="257.4" r="0.52" fill="#333" fill-opacity="1.0"/><circle cx="118.7" cy="261.9" r="0.63" fill="#333" fill-opacity="1.0"/><circle cx="119.1" cy="263.2" r="0.25" fill="#333" fill-opacity="1.0"/><circle cx="117.3" cy="260.7" r="0.52" fill="#333" fill-opacity="1.0"/><circle cx="121.6" cy="256.3" r="0.59" fill="#333" fill-opacity="1.0"/><circle cx="120.1" cy="260.3" r="0.25" fill="#333" fill-opacity="1.0"/><circle cx="119.8" cy="255.5" r="0.43" fill="#333" fill-opacity="1.0"/><circle cx="121.9" cy="260.1" r="0.40" fill="#333" fill-opacity="1.0"/><circle cx="119.1" cy="261.8" r="0.39" fill="#333" fill-opacity="1.0"/><circle cx="118.8" cy="261.7" r="0.47" fill="#333" fill-opacity="1.0"/><circle cx="118.0" cy="262.7" r="0.41" fill="#333" fill-opacity="1.0"/><circle cx="118.7" cy="257.9" r="0.49" fill="#333" fill-opacity="1.0"/><circle cx="119.3" cy="259.8" r="0.49" fill="#333" fill-opacity="1.0"/><circle cx="122.5" cy="264.4" r="0.53" fill="#333" fill-opacity="1.0"/><circle cx="115.0" cy="258.4" r="0.67" fill="#333" fill-opacity="1.0"/><circle cx="117.7" cy="255.7" r="0.52" fill="#333" fill-opacity="1.0"/><circle cx="117.9" cy="267.6" r="0.53" fill="#333" fill-opacity="1.0"/><circle cx="118.4" cy="261.6" r="0.48" fill="#333" fill-opacity="1.0"/><circle cx="116.9" cy="264.9" r="0.64" fill="#333" fill-opacity="1.0"/><circle cx="118.9" cy="262.1" r="0.28" fill="#333" fill-opacity="1.0"/><circle cx="113.1" cy="260.8" r="0.25" fill="#333" fill-opacity="1.0"/><circle cx="117.2" cy="263.0" r="0.42" fill="#333" fill-opacity="1.0"/><circle cx="116.7" cy="260.0" r="0.35" fill="#333" fill-opacity="1.0"/><circle cx="122.8" cy="258.3" r="0.63" fill="#333" fill-opacity="1.0"/><circle cx="121.4" cy="264.3" r="0.33" fill="#333" fill-opacity="1.0"/><circle cx="124.4" cy="265.5" r="0.52" fill="#333" fill-opacity="1.0"/><circle cx="113.8" cy="263.4" r="0.61" fill="#333" fill-opacity="1.0"/><circle cx="118.4" cy="262.1" r="0.63" fill="#333" fill-opacity="1.0"/><circle cx="116.3" cy="261.9" r="0.31" fill="#333" fill-opacity="1.0"/><circle cx="112.8" cy="261.3" r="0.64" fill="#333" fill-opacity="1.0"/><circle cx="119.3" cy="262.5" r="0.67" fill="#333" fill-opacity="1.0"/><circle cx="114.7" cy="261.5" r="0.54" fill="#333" fill-opacity="1.0"/><circle cx="116.9" cy="263.2" r="0.62" fill="#333" fill-opacity="1.0"/><circle cx="118.9" cy="262.0" r="0.24" fill="#333" fill-opacity="1.0"/><circle cx="121.0" cy="259.0" r="0.56" fill="#333" fill-opacity="1.0"/><circle cx="114.0" cy="262.1" r="0.38" fill="#333" fill-opacity="1.0"/><circle cx="117.6" cy="263.4" r="0.36" fill="#333" fill-opacity="1.0"/><circle cx="124.9" cy="260.2" r="0.47" fill="#333" fill-opacity="1.0"/><circle cx="125.4" cy="263.6" r="0.59" fill="#333" fill-opacity="1.0"/><circle cx="114.4" cy="257.2" r="0.56" fill="#333" fill-opacity="1.0"/><circle cx="117.4" cy="260.9" r="0.51" fill="#333" fill-opacity="1.0"/><circle cx="118.1" cy="262.4" r="0.30" fill="#333" fill-opacity="1.0"/><circle cx="122.6" cy="264.7" r="0.39" fill="#333" fill-opacity="1.0"/><circle cx="125.5" cy="261.6" r="0.35" fill="#333" fill-opacity="1.0"/><circle cx="123.7" cy="265.2" r="0.61" fill="#333" fill-opacity="1.0"/><circle cx="115.3" cy="265.6" r="0.65" fill="#333" fill-opacity="1.0"/><circle cx="116.3" cy="262.9" r="0.50" fill="#333" fill-opacity="1.0"/><circle cx="121.6" cy="258.4" r="0.67" fill="#333" fill-opacity="1.0"/><circle cx="119.2" cy="262.4" r="0.28" fill="#333" fill-opacity="1.0"/><circle cx="120.5" cy="261.5" r="0.26" fill="#333" fill-opacity="1.0"/><circle cx="119.0" cy="262.1" r="0.46" fill="#333" fill-opacity="1.0"/><circle cx="117.9" cy="260.9" r="0.23" fill="#333" fill-opacity="1.0"/><circle cx="123.5" cy="263.1" r="0.23" fill="#333" fill-opacity="1.0"/><circle cx="119.1" cy="264.6" r="0.41" fill="#333" fill-opacity="1.0"/><circle cx="125.1" cy="259.5" r="0.45" fill="#333" fill-opacity="1.0"/><circle cx="117.3" cy="260.8" r="0.51" fill="#333" fill-opacity="1.0"/><circle cx="119.9" cy="262.4" r="0.60" fill="#333" fill-opacity="1.0"/><circle cx="115.9" cy="262.8" r="0.60" fill="#333" fill-opacity="1.0"/><circle cx="118.4" cy="261.4" r="0.43" fill="#333" fill-opacity="1.0"/><circle cx="120.2" cy="260.6" r="0.65" fill="#333" fill-opacity="1.0"/><circle cx="119.8" cy="264.1" r="0.31" fill="#333" fill-opacity="1.0"/><circle cx="118.7" cy="263.1" r="0.52" fill="#333" fill-opacity="1.0"/><circle cx="118.9" cy="256.4" r="0.29" fill="#333" fill-opacity="1.0"/><circle cx="123.6" cy="261.9" r="0.35" fill="#333" fill-opacity="1.0"/><circle cx="117.0" cy="258.8" r="0.38" fill="#333" fill-opacity="1.0"/><circle cx="118.9" cy="262.4" r="0.32" fill="#333" fill-opacity="1.0"/><circle cx="120.3" cy="260.5" r="0.52" fill="#333" fill-opacity="1.0"/><circle cx="117.7" cy="262.4" r="0.42" fill="#333" fill-opacity="1.0"/><circle cx="119.4" cy="264.4" r="0.31" fill="#333" fill-opacity="1.0"/><circle cx="122.7" cy="265.7" r="0.37" fill="#333" fill-opacity="1.0"/><circle cx="116.2" cy="256.5" r="0.64" fill="#333" fill-opacity="1.0"/><circle cx="120.5" cy="259.6" r="0.46" fill="#333" fill-opacity="1.0"/><circle cx="123.5" cy="262.5" r="0.45" fill="#333" fill-opacity="1.0"/><circle cx="115.6" cy="266.7" r="0.56" fill="#333" fill-opacity="1.0"/><circle cx="119.4" cy="260.3" r="0.45" fill="#333" fill-opacity="1.0"/><circle cx="120.0" cy="256.2" r="0.44" fill="#333" fill-opacity="1.0"/><circle cx="118.2" cy="258.8" r="0.33" fill="#333" fill-opacity="1.0"/><circle cx="121.4" cy="259.8" r="0.30" fill="#333" fill-opacity="1.0"/><circle cx="113.6" cy="259.4" r="0.30" fill="#333" fill-opacity="1.0"/><circle cx="121.1" cy="265.4" r="0.29" fill="#333" fill-opacity="1.0"/><circle cx="119.3" cy="258.4" r="0.44" fill="#333" fill-opacity="1.0"/><circle cx="112.1" cy="263.9" r="0.36" fill="#333" fill-opacity="1.0"/><circle cx="116.5" cy="261.1" r="0.66" fill="#333" fill-opacity="1.0"/><circle cx="118.9" cy="262.1" r="0.42" fill="#333" fill-opacity="1.0"/><circle cx="113.9" cy="260.8" r="0.51" fill="#333" fill-opacity="1.0"/><circle cx="119.9" cy="261.3" r="0.51" fill="#333" fill-opacity="1.0"/><circle cx="122.1" cy="257.1" r="0.59" fill="#333" fill-opacity="1.0"/><circle cx="117.5" cy="260.1" r="0.64" fill="#333" fill-opacity="1.0"/><circle cx="118.8" cy="259.6" r="0.65" fill="#333" fill-opacity="1.0"/><circle cx="124.1" cy="257.7" r="0.65" fill="#333" fill-opacity="1.0"/><circle cx="121.4" cy="261.3" r="0.41" fill="#333" fill-opacity="1.0"/><text x="0" y="276.85" font-size="10" text-anchor="middle" fill="#111" stroke="#111" stroke-width="0.36" font-family="Liberation Sans" transform="translate(118.93,0) scale(0.9,1)">46</text>
<circle cx="147.2" cy="260.6" r="0.49" fill="#333" fill-opacity="1.0"/><circle cx="146.1" cy="261.2" r="0.46" fill="#333" fill-opacity="1.0"/><circle cx="139.3" cy="258.9" r="0.24" fill="#333" fill-opacity="1.0"/><circle cx="147.0" cy="262.8" r="0.60" fill="#333" fill-opacity="1.0"/><circle cx="145.7" cy="261.5" r="0.64" fill="#333" fill-opacity="1.0"/><circle cx="138.3" cy="260.9" r="0.65" fill="#333" fill-opacity="1.0"/><circle cx="151.2" cy="265.6" r="0.44" fill="#333" fill-opacity="1.0"/><circle cx="146.9" cy="264.3" r="0.26" fill="#333" fill-opacity="1.0"/><circle cx="145.3" cy="258.8" r="0.27" fill="#333" fill-opacity="1.0"/><circle cx="145.8" cy="265.0" r="0.58" fill="#333" fill-opacity="1.0"/><circle cx="145.2" cy="262.5" r="0.38" fill="#333" fill-opacity="1.0"/><circle cx="147.1" cy="262.8" r="0.62" fill="#333" fill-opacity="1.0"/><circle cx="146.0" cy="263.5" r="0.57" fill="#333" fill-opacity="1.0"/><circle cx="145.5" cy="262.5" r="0.34" fill="#333" fill-opacity="1.0"/><circle cx="141.5" cy="259.2" r="0.53" fill="#333" fill-opacity="1.0"/><circle cx="146.8" cy="262.6" r="0.28" fill="#333" fill-opacity="1.0"/><circle cx="143.3" cy="261.3" r="0.56" fill="#333" fill-opacity="1.0"/><circle cx="141.8" cy="260.6" r="0.30" fill="#333" fill-opacity="1.0"/><circle cx="145.0" cy="262.0" r="0.27" fill="#333" fill-opacity="1.0"/><circle cx="145.9" cy="261.4" r="0.23" fill="#333" fill-opacity="1.0"/><circle cx="145.1" cy="261.2" r="0.36" fill="#333" fill-opacity="1.0"/><circle cx="139.2" cy="259.3" r="0.24" fill="#333" fill-opacity="1.0"/><circle cx="145.2" cy="262.0" r="0.57" fill="#333" fill-opacity="1.0"/><circle cx="145.0" cy="262.3" r="0.40" fill="#333" fill-opacity="1.0"/><circle cx="144.9" cy="261.6" r="0.40" fill="#333" fill-opacity="1.0"/><circle cx="146.4" cy="256.9" r="0.55" fill="#333" fill-opacity="1.0"/><circle cx="140.5" cy="262.8" r="0.29" fill="#333" fill-opacity="1.0"/><circle cx="143.9" cy="263.1" r="0.28" fill="#333" fill-opacity="1.0"/><circle cx="145.5" cy="262.1" r="0.66" fill="#333" fill-opacity="1.0"/><circle cx="144.0" cy="263.2" r="0.52" fill="#333" fill-opacity="1.0"/><circle cx="144.3" cy="256.3" r="0.64" fill="#333" fill-opacity="1.0"/><circle cx="146.6" cy="262.5" r="0.40" fill="#333" fill-opacity="1.0"/><circle cx="144.0" cy="265.1" r="0.33" fill="#333" fill-opacity="1.0"/><circle cx="146.8" cy="261.0" r="0.63" fill="#333" fill-opacity="1.0"/><circle cx="149.3" cy="260.2" r="0.35" fill="#333" fill-opacity="1.0"/><circle cx="152.1" cy="264.4" r="0.64" fill="#333" fill-opacity="1.0"/><circle cx="145.0" cy="262.1" r="0.57" fill="#333" fill-opacity="1.0"/><circle cx="144.6" cy="264.4" r="0.67" fill="#333" fill-opacity="1.0"/><circle cx="150.5" cy="259.4" r="0.26" fill="#333" fill-opacity="1.0"/><circle cx="143.0" cy="259.1" r="0.55" fill="#333" fill-opacity="1.0"/><circle cx="151.8" cy="262.6" r="0.30" fill="#333" fill-opacity="1.0"/><circle cx="149.7" cy="262.1" r="0.56" fill="#333" fill-opacity="1.0"/><circle cx="145.2" cy="261.7" r="0.33" fill="#333" fill-opacity="1.0"/><circle cx="141.4" cy="261.0" r="0.56" fill="#333" fill-opacity="1.0"/><circle cx="149.7" cy="262.4" r="0.32" fill="#333" fill-opacity="1.0"/><circle cx="144.9" cy="262.6" r="0.45" fill="#333" fill-opacity="1.0"/><circle cx="145.2" cy="265.8" r="0.35" fill="#333" fill-opacity="1.0"/><circle cx="146.7" cy="263.2" r="0.36" fill="#333" fill-opacity="1.0"/><circle cx="143.2" cy="268.4" r="0.49" fill="#333" fill-opacity="1.0"/><circle cx="148.1" cy="259.1" r="0.67" fill="#333" fill-opacity="1.0"/><circle cx="142.3" cy="262.2" r="0.35" fill="#333" fill-opacity="1.0"/><circle cx="145.7" cy="268.0" r="0.44" fill="#333" fill-opacity="1.0"/><circle cx="141.5" cy="257.0" r="0.46" fill="#333" fill-opacity="1.0"/><circle cx="147.4" cy="266.0" r="0.58" fill="#333" fill-opacity="1.0"/><circle cx="147.8" cy="261.1" r="0.28" fill="#333" fill-opacity="1.0"/><circle cx="143.0" cy="257.5" r="0.24" fill="#333" fill-opacity="1.0"/><circle cx="147.5" cy="257.1" r="0.26" fill="#333" fill-opacity="1.0"/><circle cx="144.9" cy="261.7" r="0.46" fill="#333" fill-opacity="1.0"/><circle cx="147.9" cy="264.5" r="0.35" fill="#333" fill-opacity="1.0"/><circle cx="141.2" cy="262.3" r="0.58" fill="#333" fill-opacity="1.0"/><circle cx="144.6" cy="262.2" r="0.37" fill="#333" fill-opacity="1.0"/><circle cx="143.5" cy="262.9" r="0.32" fill="#333" fill-opacity="1.0"/><circle cx="147.4" cy="261.8" r="0.23" fill="#333" fill-opacity="1.0"/><circle cx="145.4" cy="266.9" r="0.55" fill="#333" fill-opacity="1.0"/><circle cx="145.1" cy="262.1" r="0.38" fill="#333" fill-opacity="1.0"/><circle cx="145.9" cy="261.7" r="0.27" fill="#333" fill-opacity="1.0"/><circle cx="145.2" cy="262.1" r="0.64" fill="#333" fill-opacity="1.0"/><circle cx="145.7" cy="261.4" r="0.62" fill="#333" fill-opacity="1.0"/><circle cx="150.6" cy="261.4" r="0.57" fill="#333" fill-opacity="1.0"/><circle cx="146.2" cy="262.9" r="0.44" fill="#333" fill-opacity="1.0"/><circle cx="147.6" cy="267.0" r="0.40" fill="#333" fill-opacity="1.0"/><circle cx="143.8" cy="260.3" r="0.66" fill="#333" fill-opacity="1.0"/><circle cx="142.5" cy="267.0" r="0.62" fill="#333" fill-opacity="1.0"/><circle cx="145.1" cy="261.8" r="0.65" fill="#333" fill-opacity="1.0"/><circle cx="145.5" cy="262.3" r="0.61" fill="#333" fill-opacity="1.0"/><circle cx="145.3" cy="262.1" r="0.61" fill="#333" fill-opacity="1.0"/><circle cx="147.1" cy="261.2" r="0.39" fill="#333" fill-opacity="1.0"/><circle cx="144.6" cy="257.6" r="0.35" fill="#333" fill-opacity="1.0"/><circle cx="145.9" cy="262.3" r="0.35" fill="#333" fill-opacity="1.0"/><circle cx="150.3" cy="262.6" r="0.40" fill="#333" fill-opacity="1.0"/><circle cx="143.9" cy="261.8" r="0.39" fill="#333" fill-opacity="1.0"/><circle cx="143.4" cy="256.6" r="0.60" fill="#333" fill-opacity="1.0"/><circle cx="139.3" cy="261.6" r="0.36" fill="#333" fill-opacity="1.0"/><circle cx="144.1" cy="261.0" r="0.63" fill="#333" fill-opacity="1.0"/><circle cx="145.2" cy="262.1" r="0.57" fill="#333" fill-opacity="1.0"/><circle cx="148.9" cy="266.5" r="0.60" fill="#333" fill-opacity="1.0"/><circle cx="145.5" cy="261.9" r="0.36" fill="#333" fill-opacity="1.0"/><circle cx="145.4" cy="262.1" r="0.42" fill="#333" fill-opacity="1.0"/><circle cx="145.2" cy="262.0" r="0.53" fill="#333" fill-opacity="1.0"/><circle cx="144.8" cy="262.5" r="0.51" fill="#333" fill-opacity="1.0"/><circle cx="143.3" cy="262.9" r="0.65" fill="#333" fill-opacity="1.0"/><circle cx="143.3" cy="261.1" r="0.47" fill="#333" fill-opacity="1.0"/><circle cx="146.1" cy="261.8" r="0.53" fill="#333" fill-opacity="1.0"/><circle cx="149.6" cy="260.8" r="0.27" fill="#333" fill-opacity="1.0"/><circle cx="146.2" cy="259.1" r="0.31" fill="#333" fill-opacity="1.0"/><circle cx="143.5" cy="256.6" r="0.55" fill="#333" fill-opacity="1.0"/><circle cx="146.0" cy="261.9" r="0.67" fill="#333" fill-opacity="1.0"/><circle cx="146.7" cy="260.6" r="0.47" fill="#333" fill-opacity="1.0"/><circle cx="148.0" cy="258.0" r="0.45" fill="#333" fill-opacity="1.0"/><circle cx="146.4" cy="264.8" r="0.64" fill="#333" fill-opacity="1.0"/><circle cx="146.3" cy="261.2" r="0.25" fill="#333" fill-opacity="1.0"/><circle cx="141.7" cy="263.7" r="0.65" fill="#333" fill-opacity="1.0"/><circle cx="148.4" cy="260.3" r="0.35" fill="#333" fill-opacity="1.0"/><circle cx="146.2" cy="258.8" r="0.27" fill="#333" fill-opacity="1.0"/><circle cx="141.4" cy="263.1" r="0.41" fill="#333" fill-opacity="1.0"/><circle cx="140.4" cy="259.9" r="0.63" fill="#333" fill-opacity="1.0"/><circle cx="144.7" cy="261.8" r="0.66" fill="#333" fill-opacity="1.0"/><circle cx="146.2" cy="259.5" r="0.45" fill="#333" fill-opacity="1.0"/><circle cx="145.5" cy="262.0" r="0.51" fill="#333" fill-opacity="1.0"/><circle cx="138.0" cy="262.2" r="0.30" fill="#333" fill-opacity="1.0"/><circle cx="146.1" cy="261.6" r="0.39" fill="#333" fill-opacity="1.0"/><circle cx="146.7" cy="260.3" r="0.31" fill="#333" fill-opacity="1.0"/><circle cx="144.5" cy="264.5" r="0.27" fill="#333" fill-opacity="1.0"/><circle cx="148.4" cy="261.4" r="0.38" fill="#333" fill-opacity="1.0"/><circle cx="144.7" cy="258.7" r="0.35" fill="#333" fill-opacity="1.0"/><circle cx="149.8" cy="261.7" r="0.38" fill="#333" fill-opacity="1.0"/><circle cx="150.2" cy="261.7" r="0.33" fill="#333" fill-opacity="1.0"/><circle cx="147.3" cy="259.7" r="0.33" fill="#333" fill-opacity="1.0"/><circle cx="149.3" cy="266.1" r="0.29" fill="#333" fill-opacity="1.0"/><circle cx="144.5" cy="259.3" r="0.32" fill="#333" fill-opacity="1.0"/><circle cx="145.2" cy="262.1" r="0.44" fill="#333" fill-opacity="1.0"/><circle cx="147.8" cy="262.5" r="0.24" fill="#333" fill-opacity="1.0"/><circle cx="147.8" cy="257.8" r="0.28" fill="#333" fill-opacity="1.0"/><circle cx="150.9" cy="260.7" r="0.30" fill="#333" fill-opacity="1.0"/><circle cx="141.5" cy="262.7" r="0.63" fill="#333" fill-opacity="1.0"/><circle cx="148.2" cy="266.3" r="0.41" fill="#333" fill-opacity="1.0"/><circle cx="146.8" cy="262.8" r="0.31" fill="#333" fill-opacity="1.0"/><circle cx="150.1" cy="258.5" r="0.27" fill="#333" fill-opacity="1.0"/><circle cx="150.4" cy="261.0" r="0.58" fill="#333" fill-opacity="1.0"/><circle cx="147.2" cy="257.1" r="0.64" fill="#333" fill-opacity="1.0"/><text x="0" y="276.85" font-size="10" text-anchor="middle" fill="#111" stroke="#111" stroke-width="0.36" font-family="Liberation Sans" transform="translate(145.30,0) scale(0.9,1)">59</text>
<circle cx="170.9" cy="263.0" r="0.86" fill="#000" fill-opacity="1.0"/><circle cx="170.8" cy="263.2" r="0.80" fill="#000" fill-opacity="1.0"/><circle cx="172.9" cy="262.4" r="0.47" fill="#000" fill-opacity="1.0"/><circle cx="172.4" cy="262.5" r="1.32" fill="#000" fill-opacity="1.0"/><circle cx="170.1" cy="262.2" r="1.28" fill="#000" fill-opacity="1.0"/><circle cx="173.0" cy="261.2" r="0.66" fill="#000" fill-opacity="1.0"/><circle cx="170.5" cy="261.9" r="1.31" fill="#000" fill-opacity="1.0"/><circle cx="172.8" cy="262.3" r="1.07" fill="#000" fill-opacity="1.0"/><circle cx="170.3" cy="261.2" r="1.14" fill="#000" fill-opacity="1.0"/><circle cx="171.8" cy="264.1" r="1.27" fill="#000" fill-opacity="1.0"/><circle cx="172.7" cy="262.3" r="0.78" fill="#000" fill-opacity="1.0"/><circle cx="170.5" cy="263.0" r="0.68" fill="#000" fill-opacity="1.0"/><circle cx="170.3" cy="260.3" r="1.28" fill="#000" fill-opacity="1.0"/><circle cx="172.1" cy="261.5" r="1.12" fill="#000" fill-opacity="1.0"/><circle cx="171.9" cy="260.5" r="1.06" fill="#000" fill-opacity="1.0"/><circle cx="171.2" cy="263.9" r="0.67" fill="#000" fill-opacity="1.0"/><circle cx="170.8" cy="261.8" r="0.93" fill="#000" fill-opacity="1.0"/><circle cx="172.7" cy="262.3" r="1.15" fill="#000" fill-opacity="1.0"/><circle cx="171.5" cy="263.9" r="1.17" fill="#000" fill-opacity="1.0"/><circle cx="170.2" cy="261.0" r="0.64" fill="#000" fill-opacity="1.0"/><text x="0" y="276.85" font-size="10" text-anchor="middle" fill="#111" stroke="#111" stroke-width="0.36" font-family="Liberation Sans" transform="translate(171.67,0) scale(0.9,1)">11</text>
<circle cx="197.2" cy="261.8" r="1.09" fill="#000" fill-opacity="1.0"/><circle cx="196.7" cy="265.5" r="0.62" fill="#000" fill-opacity="1.0"/><circle cx="198.1" cy="261.2" r="1.32" fill="#000" fill-opacity="1.0"/><circle cx="198.5" cy="261.6" r="1.03" fill="#000" fill-opacity="1.0"/><circle cx="198.5" cy="264.2" r="1.22" fill="#000" fill-opacity="1.0"/><circle cx="198.7" cy="263.0" r="0.52" fill="#000" fill-opacity="1.0"/><circle cx="200.3" cy="262.9" r="0.60" fill="#000" fill-opacity="1.0"/><circle cx="200.2" cy="264.1" r="0.71" fill="#000" fill-opacity="1.0"/><circle cx="197.1" cy="263.4" r="1.21" fill="#000" fill-opacity="1.0"/><circle cx="197.6" cy="264.7" r="1.29" fill="#000" fill-opacity="1.0"/><circle cx="196.7" cy="261.5" r="0.57" fill="#000" fill-opacity="1.0"/><circle cx="197.4" cy="261.3" r="0.81" fill="#000" fill-opacity="1.0"/><circle cx="199.4" cy="259.2" r="0.70" fill="#000" fill-opacity="1.0"/><circle cx="197.0" cy="263.1" r="0.71" fill="#000" fill-opacity="1.0"/><circle cx="197.3" cy="262.1" r="0.55" fill="#000" fill-opacity="1.0"/><circle cx="199.1" cy="263.3" r="0.93" fill="#000" fill-opacity="1.0"/><circle cx="197.1" cy="263.8" r="1.15" fill="#000" fill-opacity="1.0"/><circle cx="198.5" cy="260.2" r="1.25" fill="#000" fill-opacity="1.0"/><circle cx="200.8" cy="262.1" r="1.07" fill="#000" fill-opacity="1.0"/><circle cx="196.3" cy="263.1" r="0.68" fill="#000" fill-opacity="1.0"/><circle cx="198.1" cy="261.0" r="0.96" fill="#000" fill-opacity="1.0"/><circle cx="197.3" cy="258.9" r="1.29" fill="#000" fill-opacity="1.0"/><circle cx="198.5" cy="262.8" r="0.70" fill="#000" fill-opacity="1.0"/><circle cx="199.3" cy="259.9" r="1.11" fill="#000" fill-opacity="1.0"/><circle cx="195.7" cy="263.0" r="1.33" fill="#000" fill-opacity="1.0"/><circle cx="196.4" cy="263.3" r="1.04" fill="#000" fill-opacity="1.0"/><circle cx="200.6" cy="259.4" r="0.93" fill="#000" fill-opacity="1.0"/><circle cx="198.7" cy="262.2" r="0.47" fill="#000" fill-opacity="1.0"/><circle cx="201.0" cy="262.1" r="0.78" fill="#000" fill-opacity="1.0"/><circle cx="201.0" cy="263.8" r="0.99" fill="#000" fill-opacity="1.0"/><circle cx="194.4" cy="261.8" r="0.54" fill="#000" fill-opacity="1.0"/><circle cx="195.4" cy="262.8" r="0.88" fill="#000" fill-opacity="1.0"/><text x="0" y="276.85" font-size="10" text-anchor="middle" fill="#111" stroke="#111" stroke-width="0.36" font-family="Liberation Sans" transform="translate(198.03,0) scale(0.9,1)">17</text>
<circle cx="227.0" cy="263.1" r="0.55" fill="#000" fill-opacity="1.0"/><circle cx="224.4" cy="259.0" r="0.49" fill="#000" fill-opacity="1.0"/><circle cx="228.7" cy="263.2" r="0.59" fill="#000" fill-opacity="1.0"/><circle cx="224.0" cy="258.5" r="0.90" fill="#000" fill-opacity="1.0"/><circle cx="226.8" cy="259.3" r="0.97" fill="#000" fill-opacity="1.0"/><circle cx="222.9" cy="263.1" r="0.57" fill="#000" fill-opacity="1.0"/><circle cx="222.1" cy="263.2" r="1.15" fill="#000" fill-opacity="1.0"/><circle cx="224.1" cy="264.5" r="1.30" fill="#000" fill-opacity="1.0"/><circle cx="221.4" cy="259.5" r="1.07" fill="#000" fill-opacity="1.0"/><circle cx="225.8" cy="261.3" r="1.14" fill="#000" fill-opacity="1.0"/><circle cx="226.2" cy="262.8" r="0.99" fill="#000" fill-opacity="1.0"/><circle cx="223.0" cy="264.7" r="0.65" fill="#000" fill-opacity="1.0"/><circle cx="224.3" cy="264.7" r="1.00" fill="#000" fill-opacity="1.0"/><circle cx="223.2" cy="259.2" r="0.79" fill="#000" fill-opacity="1.0"/><circle cx="229.0" cy="261.1" r="0.94" fill="#000" fill-opacity="1.0"/><circle cx="223.2" cy="261.8" r="0.63" fill="#000" fill-opacity="1.0"/><circle cx="229.1" cy="264.6" r="1.20" fill="#000" fill-opacity="1.0"/><circle cx="228.4" cy="263.6" r="0.79" fill="#000" fill-opacity="1.0"/><circle cx="222.9" cy="259.7" r="0.75" fill="#000" fill-opacity="1.0"/><circle cx="225.8" cy="262.7" r="0.83" fill="#000" fill-opacity="1.0"/><circle cx="224.1" cy="260.9" r="0.85" fill="#000" fill-opacity="1.0"/><circle cx="225.3" cy="261.9" r="0.82" fill="#000" fill-opacity="1.0"/><circle cx="226.9" cy="259.1" r="1.30" fill="#000" fill-opacity="1.0"/><circle cx="221.2" cy="259.8" r="0.66" fill="#000" fill-opacity="1.0"/><circle cx="221.5" cy="263.8" r="1.23" fill="#000" fill-opacity="1.0"/><circle cx="223.1" cy="260.0" r="1.24" fill="#000" fill-opacity="1.0"/><circle cx="221.0" cy="259.4" r="0.61" fill="#000" fill-opacity="1.0"/><circle cx="224.1" cy="265.5" r="0.84" fill="#000" fill-opacity="1.0"/><circle cx="224.2" cy="266.9" r="1.31" fill="#000" fill-opacity="1.0"/><circle cx="221.9" cy="257.5" r="1.10" fill="#000" fill-opacity="1.0"/><circle cx="223.4" cy="262.3" r="0.96" fill="#000" fill-opacity="1.0"/><circle cx="227.5" cy="260.2" r="1.12" fill="#000" fill-opacity="1.0"/><circle cx="224.2" cy="262.3" r="0.91" fill="#000" fill-opacity="1.0"/><circle cx="222.4" cy="264.8" r="1.33" fill="#000" fill-opacity="1.0"/><circle cx="229.5" cy="260.5" r="1.03" fill="#000" fill-opacity="1.0"/><circle cx="220.9" cy="261.5" r="1.28" fill="#000" fill-opacity="1.0"/><circle cx="224.8" cy="262.1" r="0.52" fill="#000" fill-opacity="1.0"/><circle cx="219.0" cy="263.6" r="1.26" fill="#000" fill-opacity="1.0"/><circle cx="219.2" cy="260.2" r="1.10" fill="#000" fill-opacity="1.0"/><circle cx="225.2" cy="260.4" r="0.56" fill="#000" fill-opacity="1.0"/><circle cx="225.4" cy="266.6" r="1.24" fill="#000" fill-opacity="1.0"/><circle cx="223.3" cy="261.4" r="0.81" fill="#000" fill-opacity="1.0"/><circle cx="223.9" cy="265.4" r="1.14" fill="#000" fill-opacity="1.0"/><circle cx="226.8" cy="259.3" r="0.73" fill="#000" fill-opacity="1.0"/><text x="0" y="276.85" font-size="10" text-anchor="middle" fill="#111" stroke="#111" stroke-width="0.36" font-family="Liberation Sans" transform="translate(224.41,0) scale(0.9,1)">23</text>
<text x="0" y="0" font-size="9.5" font-weight="bold" font-style="italic" text-anchor="middle" fill="#111" stroke="#111" stroke-width="1.1" font-family="Liberation Serif" transform="translate(250.78,263.25) rotate(18) scale(1.15,0.9)">Stay</text><circle cx="248.9" cy="262.6" r="0.68" fill="#111" fill-opacity="1.0"/><circle cx="252.0" cy="266.2" r="0.88" fill="#111" fill-opacity="1.0"/><circle cx="254.5" cy="264.0" r="0.71" fill="#111" fill-opacity="1.0"/><circle cx="253.5" cy="263.5" r="0.80" fill="#111" fill-opacity="1.0"/><circle cx="254.9" cy="262.2" r="0.41" fill="#111" fill-opacity="1.0"/><circle cx="255.0" cy="262.0" r="0.66" fill="#111" fill-opacity="1.0"/><circle cx="248.0" cy="259.8" r="0.85" fill="#111" fill-opacity="1.0"/><circle cx="256.7" cy="261.5" r="0.79" fill="#111" fill-opacity="1.0"/><circle cx="253.1" cy="258.3" r="0.56" fill="#111" fill-opacity="1.0"/><circle cx="252.2" cy="265.1" r="0.86" fill="#111" fill-opacity="1.0"/><circle cx="251.3" cy="261.1" r="0.85" fill="#111" fill-opacity="1.0"/><circle cx="251.1" cy="267.1" r="0.58" fill="#111" fill-opacity="1.0"/><circle cx="251.5" cy="264.8" r="0.65" fill="#111" fill-opacity="1.0"/><circle cx="247.7" cy="264.8" r="0.72" fill="#111" fill-opacity="1.0"/><circle cx="254.2" cy="257.9" r="0.68" fill="#111" fill-opacity="1.0"/><circle cx="255.8" cy="261.8" r="0.83" fill="#111" fill-opacity="1.0"/><circle cx="254.0" cy="257.9" r="0.38" fill="#111" fill-opacity="1.0"/><circle cx="247.9" cy="260.9" r="0.36" fill="#111" fill-opacity="1.0"/><circle cx="248.9" cy="265.4" r="0.30" fill="#111" fill-opacity="1.0"/><circle cx="256.3" cy="262.8" r="0.55" fill="#111" fill-opacity="1.0"/><circle cx="257.4" cy="261.8" r="0.80" fill="#111" fill-opacity="1.0"/><circle cx="252.6" cy="260.4" r="0.74" fill="#111" fill-opacity="1.0"/><circle cx="253.3" cy="263.5" r="0.53" fill="#111" fill-opacity="1.0"/><circle cx="251.8" cy="263.3" r="0.61" fill="#111" fill-opacity="1.0"/><circle cx="253.1" cy="262.3" r="0.44" fill="#111" fill-opacity="1.0"/><circle cx="255.6" cy="260.8" r="0.58" fill="#111" fill-opacity="1.0"/><circle cx="246.9" cy="265.0" r="0.58" fill="#111" fill-opacity="1.0"/><circle cx="249.0" cy="264.3" r="0.77" fill="#111" fill-opacity="1.0"/><circle cx="255.6" cy="263.0" r="0.68" fill="#111" fill-opacity="1.0"/><circle cx="254.9" cy="262.7" r="0.51" fill="#111" fill-opacity="1.0"/><circle cx="249.2" cy="259.5" r="0.60" fill="#111" fill-opacity="1.0"/><circle cx="250.6" cy="265.8" r="0.86" fill="#111" fill-opacity="1.0"/><circle cx="252.9" cy="263.4" r="0.40" fill="#111" fill-opacity="1.0"/><circle cx="253.6" cy="263.1" r="0.49" fill="#111" fill-opacity="1.0"/><circle cx="251.3" cy="257.0" r="0.31" fill="#111" fill-opacity="1.0"/><circle cx="249.1" cy="262.5" r="0.84" fill="#111" fill-opacity="1.0"/><circle cx="256.8" cy="262.4" r="0.32" fill="#111" fill-opacity="1.0"/><circle cx="248.0" cy="262.7" r="0.62" fill="#111" fill-opacity="1.0"/><circle cx="251.9" cy="263.2" r="0.66" fill="#111" fill-opacity="1.0"/><circle cx="253.3" cy="259.9" r="0.53" fill="#111" fill-opacity="1.0"/><circle cx="255.9" cy="263.6" r="0.79" fill="#111" fill-opacity="1.0"/><circle cx="250.0" cy="262.8" r="0.37" fill="#111" fill-opacity="1.0"/><circle cx="254.8" cy="258.8" r="0.45" fill="#111" fill-opacity="1.0"/><circle cx="250.0" cy="262.4" r="0.64" fill="#111" fill-opacity="1.0"/><circle cx="254.8" cy="263.0" r="0.59" fill="#111" fill-opacity="1.0"/><text x="0" y="276.85" font-size="10" text-anchor="middle" fill="#111" stroke="#111" stroke-width="0.36" font-family="Liberation Sans" transform="translate(250.78,0) scale(0.9,1)">36</text>
<g transform="translate(277.65,260.55) rotate(18)"><path d="M-10.0 -3.6 H7.0" stroke="#111" stroke-width="1.8" stroke-dasharray="3 0.8 4 1.0 3 0.7"/><path d="M-9.0 -1.2 H8.0" stroke="#111" stroke-width="1.8" stroke-dasharray="4 0.8 3 1.0 3 0.7"/><path d="M-8.0 1.2 H9.0" stroke="#111" stroke-width="1.8" stroke-dasharray="5 0.8 4 1.0 3 0.7"/><path d="M-7.0 3.6 H10.0" stroke="#111" stroke-width="1.8" stroke-dasharray="3 0.8 3 1.0 3 0.7"/></g><text x="0" y="276.85" font-size="10" text-anchor="middle" fill="#111" stroke="#111" stroke-width="0.36" font-family="Liberation Sans" transform="translate(277.15,0) scale(0.9,1)">44</text>
<g transform="translate(304.02,260.55) rotate(18)"><path d="M-10.0 -3.6 H7.0" stroke="#111" stroke-width="1.8" stroke-dasharray="3 0.8 4 1.0 3 0.7"/><path d="M-9.0 -1.2 H8.0" stroke="#111" stroke-width="1.8" stroke-dasharray="4 0.8 3 1.0 3 0.7"/><path d="M-8.0 1.2 H9.0" stroke="#111" stroke-width="1.8" stroke-dasharray="5 0.8 4 1.0 3 0.7"/><path d="M-7.0 3.6 H10.0" stroke="#111" stroke-width="1.8" stroke-dasharray="3 0.8 3 1.0 3 0.7"/></g><text x="0" y="276.85" font-size="10" text-anchor="middle" fill="#111" stroke="#111" stroke-width="0.36" font-family="Liberation Sans" transform="translate(303.52,0) scale(0.9,1)">60</text>
<circle cx="329.88" cy="262.05" r="0.9" fill="#111"/><circle cx="327.4" cy="260.0" r="0.29" fill="#777" fill-opacity="1.0"/><circle cx="329.0" cy="259.0" r="0.31" fill="#777" fill-opacity="1.0"/><circle cx="329.6" cy="259.5" r="0.41" fill="#777" fill-opacity="1.0"/><circle cx="330.7" cy="262.2" r="0.45" fill="#777" fill-opacity="1.0"/><circle cx="329.9" cy="260.9" r="0.37" fill="#777" fill-opacity="1.0"/><circle cx="330.7" cy="263.3" r="0.28" fill="#777" fill-opacity="1.0"/><circle cx="330.0" cy="262.7" r="0.30" fill="#777" fill-opacity="1.0"/><circle cx="329.0" cy="261.0" r="0.35" fill="#777" fill-opacity="1.0"/><circle cx="330.2" cy="262.0" r="0.23" fill="#777" fill-opacity="1.0"/><circle cx="332.2" cy="263.4" r="0.27" fill="#777" fill-opacity="1.0"/><text x="0" y="276.85" font-size="10" text-anchor="middle" fill="#111" stroke="#111" stroke-width="0.36" font-family="Liberation Sans" transform="translate(329.88,0) scale(0.9,1)">14</text>
<circle cx="356.25" cy="262.05" r="0.9" fill="#111"/><circle cx="356.9" cy="261.7" r="0.32" fill="#777" fill-opacity="1.0"/><circle cx="352.7" cy="262.4" r="0.26" fill="#777" fill-opacity="1.0"/><circle cx="354.0" cy="262.8" r="0.26" fill="#777" fill-opacity="1.0"/><circle cx="359.1" cy="260.5" r="0.37" fill="#777" fill-opacity="1.0"/><circle cx="359.7" cy="263.2" r="0.31" fill="#777" fill-opacity="1.0"/><circle cx="354.4" cy="260.9" r="0.30" fill="#777" fill-opacity="1.0"/><circle cx="357.4" cy="261.6" r="0.19" fill="#777" fill-opacity="1.0"/><circle cx="357.5" cy="262.0" r="0.23" fill="#777" fill-opacity="1.0"/><circle cx="353.1" cy="263.2" r="0.26" fill="#777" fill-opacity="1.0"/><circle cx="357.5" cy="262.1" r="0.22" fill="#777" fill-opacity="1.0"/><text x="0" y="276.85" font-size="10" text-anchor="middle" fill="#111" stroke="#111" stroke-width="0.36" font-family="Liberation Sans" transform="translate(356.25,0) scale(0.9,1)">26</text>
<circle cx="382.62" cy="262.05" r="0.9" fill="#111"/><circle cx="385.6" cy="263.8" r="0.19" fill="#777" fill-opacity="1.0"/><circle cx="382.4" cy="259.2" r="0.37" fill="#777" fill-opacity="1.0"/><circle cx="382.1" cy="263.4" r="0.37" fill="#777" fill-opacity="1.0"/><circle cx="385.2" cy="261.5" r="0.31" fill="#777" fill-opacity="1.0"/><circle cx="381.3" cy="263.1" r="0.37" fill="#777" fill-opacity="1.0"/><circle cx="380.6" cy="262.9" r="0.34" fill="#777" fill-opacity="1.0"/><circle cx="382.4" cy="261.9" r="0.22" fill="#777" fill-opacity="1.0"/><circle cx="382.0" cy="260.0" r="0.40" fill="#777" fill-opacity="1.0"/><circle cx="383.7" cy="262.4" r="0.30" fill="#777" fill-opacity="1.0"/><circle cx="382.6" cy="261.2" r="0.38" fill="#777" fill-opacity="1.0"/><text x="0" y="276.85" font-size="10" text-anchor="middle" fill="#111" stroke="#111" stroke-width="0.36" font-family="Liberation Sans" transform="translate(382.62,0) scale(0.9,1)">33</text>
<circle cx="409.00" cy="262.05" r="0.9" fill="#111"/><circle cx="411.3" cy="261.6" r="0.29" fill="#777" fill-opacity="1.0"/><circle cx="406.1" cy="261.7" r="0.45" fill="#777" fill-opacity="1.0"/><circle cx="408.0" cy="262.5" r="0.26" fill="#777" fill-opacity="1.0"/><circle cx="411.3" cy="263.0" r="0.45" fill="#777" fill-opacity="1.0"/><circle cx="409.8" cy="264.6" r="0.21" fill="#777" fill-opacity="1.0"/><circle cx="411.1" cy="261.2" r="0.27" fill="#777" fill-opacity="1.0"/><circle cx="409.8" cy="262.2" r="0.42" fill="#777" fill-opacity="1.0"/><circle cx="410.0" cy="264.1" r="0.32" fill="#777" fill-opacity="1.0"/><circle cx="406.4" cy="262.9" r="0.19" fill="#777" fill-opacity="1.0"/><circle cx="408.8" cy="261.7" r="0.21" fill="#777" fill-opacity="1.0"/><text x="0" y="276.85" font-size="10" text-anchor="middle" fill="#111" stroke="#111" stroke-width="0.36" font-family="Liberation Sans" transform="translate(409.00,0) scale(0.9,1)">42</text>
<circle cx="66.19" cy="288.35" r="0.9" fill="#111"/><circle cx="68.5" cy="288.9" r="0.16" fill="#777" fill-opacity="1.0"/><circle cx="62.6" cy="288.1" r="0.24" fill="#777" fill-opacity="1.0"/><circle cx="68.7" cy="288.0" r="0.42" fill="#777" fill-opacity="1.0"/><circle cx="69.0" cy="288.7" r="0.31" fill="#777" fill-opacity="1.0"/><circle cx="64.8" cy="287.4" r="0.44" fill="#777" fill-opacity="1.0"/><circle cx="64.6" cy="286.2" r="0.35" fill="#777" fill-opacity="1.0"/><circle cx="63.2" cy="287.5" r="0.33" fill="#777" fill-opacity="1.0"/><circle cx="65.5" cy="288.1" r="0.32" fill="#777" fill-opacity="1.0"/><circle cx="67.5" cy="290.1" r="0.28" fill="#777" fill-opacity="1.0"/><circle cx="66.4" cy="286.2" r="0.26" fill="#777" fill-opacity="1.0"/><text x="0" y="303.15" font-size="10" text-anchor="middle" fill="#111" stroke="#111" stroke-width="0.36" font-family="Liberation Sans" transform="translate(66.19,0) scale(0.9,1)">55</text>
<circle cx="92.56" cy="288.35" r="0.9" fill="#111"/><circle cx="91.6" cy="287.9" r="0.34" fill="#777" fill-opacity="1.0"/><circle cx="92.8" cy="288.3" r="0.28" fill="#777" fill-opacity="1.0"/><circle cx="91.7" cy="289.3" r="0.41" fill="#777" fill-opacity="1.0"/><circle cx="95.6" cy="287.8" r="0.28" fill="#777" fill-opacity="1.0"/><circle cx="93.0" cy="288.0" r="0.30" fill="#777" fill-opacity="1.0"/><circle cx="92.1" cy="288.4" r="0.32" fill="#777" fill-opacity="1.0"/><circle cx="91.4" cy="289.4" r="0.18" fill="#777" fill-opacity="1.0"/><circle cx="92.2" cy="287.8" r="0.16" fill="#777" fill-opacity="1.0"/><circle cx="93.5" cy="287.4" r="0.33" fill="#777" fill-opacity="1.0"/><circle cx="92.1" cy="285.7" r="0.42" fill="#777" fill-opacity="1.0"/><text x="0" y="303.15" font-size="10" text-anchor="middle" fill="#111" stroke="#111" stroke-width="0.36" font-family="Liberation Sans" transform="translate(92.56,0) scale(0.9,1)">70</text>
<path d="M115.9 294.3 Q116.9 284.3 122.9 281.3" stroke="#222" stroke-width="0.9" fill="none"/><text x="0" y="303.15" font-size="10" text-anchor="middle" fill="#111" stroke="#111" stroke-width="0.36" font-family="Liberation Sans" transform="translate(118.93,0) scale(0.9,1)">112</text>
<path d="M145.3 294.3 Q144.3 286.3 142.3 281.3 M145.3 294.3 Q146.3 286.3 150.3 282.3" stroke="#222" stroke-width="0.9" fill="none"/><text x="0" y="303.15" font-size="10" text-anchor="middle" fill="#111" stroke="#111" stroke-width="0.36" font-family="Liberation Sans" transform="translate(145.30,0) scale(0.9,1)">134</text>
<path transform="translate(171.67,288.35)" d="M0 -6 L1.8 -2 L5.5 -2.5 L3 0.8 L5 5 L1 3 L0.3 6.5 L-1 3 L-5 5 L-3 0.8 L-5.5 -2.5 L-1.8 -2Z" fill="#111"/><text x="0" y="303.15" font-size="10" text-anchor="middle" fill="#111" stroke="#111" stroke-width="0.36" font-family="Liberation Sans" transform="translate(171.67,0) scale(0.9,1)">74</text>
<path transform="translate(198.03,288.35)" d="M0 -6 Q4.5 -1.5 4 2 Q3 5.5 0 5.5 Q-3 5.5 -4 2 Q-4.5 -1.5 0 -6Z" fill="#bdbdbd" stroke="#999" stroke-width="0.5"/><text x="0" y="303.15" font-size="10" text-anchor="middle" fill="#111" stroke="#111" stroke-width="0.36" font-family="Liberation Sans" transform="translate(198.03,0) scale(0.9,1)">95</text>
<path transform="translate(224.41,288.35)" d="M0 -6 Q4.5 -1.5 4 2 Q3 5.5 0 5.5 Q-3 5.5 -4 2 Q-4.5 -1.5 0 -6Z" fill="#bdbdbd" stroke="#999" stroke-width="0.5"/><text x="0" y="303.15" font-size="10" text-anchor="middle" fill="#111" stroke="#111" stroke-width="0.36" font-family="Liberation Sans" transform="translate(224.41,0) scale(0.9,1)">95</text>
<circle cx="245.7" cy="289.0" r="0.50" fill="#222" fill-opacity="1.0"/><circle cx="251.3" cy="288.1" r="0.82" fill="#222" fill-opacity="1.0"/><circle cx="249.1" cy="283.2" r="0.72" fill="#222" fill-opacity="1.0"/><circle cx="252.6" cy="293.6" r="0.63" fill="#222" fill-opacity="1.0"/><circle cx="254.5" cy="292.9" r="0.52" fill="#222" fill-opacity="1.0"/><circle cx="250.5" cy="287.0" r="0.65" fill="#222" fill-opacity="1.0"/><circle cx="252.1" cy="288.4" r="0.33" fill="#222" fill-opacity="1.0"/><circle cx="255.5" cy="289.6" r="0.40" fill="#222" fill-opacity="1.0"/><circle cx="252.8" cy="293.5" r="0.70" fill="#222" fill-opacity="1.0"/><circle cx="248.6" cy="289.8" r="0.68" fill="#222" fill-opacity="1.0"/><circle cx="247.3" cy="287.3" r="0.44" fill="#222" fill-opacity="1.0"/><circle cx="247.9" cy="291.4" r="0.37" fill="#222" fill-opacity="1.0"/><circle cx="255.1" cy="288.4" r="0.39" fill="#222" fill-opacity="1.0"/><circle cx="253.8" cy="289.3" r="0.65" fill="#222" fill-opacity="1.0"/><circle cx="251.2" cy="287.7" r="0.72" fill="#222" fill-opacity="1.0"/><circle cx="248.7" cy="293.7" r="0.76" fill="#222" fill-opacity="1.0"/><circle cx="249.2" cy="292.9" r="0.59" fill="#222" fill-opacity="1.0"/><circle cx="251.3" cy="294.4" r="0.64" fill="#222" fill-opacity="1.0"/><circle cx="252.8" cy="287.7" r="0.42" fill="#222" fill-opacity="1.0"/><circle cx="253.7" cy="286.9" r="0.48" fill="#222" fill-opacity="1.0"/><circle cx="249.9" cy="293.8" r="0.44" fill="#222" fill-opacity="1.0"/><circle cx="252.0" cy="289.5" r="0.78" fill="#222" fill-opacity="1.0"/><circle cx="253.0" cy="289.1" r="0.46" fill="#222" fill-opacity="1.0"/><circle cx="245.1" cy="286.3" r="0.81" fill="#222" fill-opacity="1.0"/><circle cx="245.5" cy="289.2" r="0.45" fill="#222" fill-opacity="1.0"/><circle cx="249.8" cy="288.3" r="0.69" fill="#222" fill-opacity="1.0"/><circle cx="245.5" cy="287.3" r="0.74" fill="#222" fill-opacity="1.0"/><circle cx="253.8" cy="282.9" r="0.68" fill="#222" fill-opacity="1.0"/><circle cx="253.5" cy="290.4" r="0.62" fill="#222" fill-opacity="1.0"/><circle cx="253.5" cy="290.9" r="0.49" fill="#222" fill-opacity="1.0"/><circle cx="253.4" cy="291.1" r="0.65" fill="#222" fill-opacity="1.0"/><circle cx="255.6" cy="286.3" r="0.61" fill="#222" fill-opacity="1.0"/><circle cx="254.0" cy="293.7" r="0.70" fill="#222" fill-opacity="1.0"/><circle cx="249.2" cy="284.7" r="0.59" fill="#222" fill-opacity="1.0"/><circle cx="253.6" cy="289.8" r="0.29" fill="#222" fill-opacity="1.0"/><circle cx="254.5" cy="288.1" r="0.63" fill="#222" fill-opacity="1.0"/><circle cx="250.9" cy="284.4" r="0.81" fill="#222" fill-opacity="1.0"/><circle cx="255.2" cy="287.9" r="0.30" fill="#222" fill-opacity="1.0"/><circle cx="251.7" cy="284.3" r="0.29" fill="#222" fill-opacity="1.0"/><circle cx="250.0" cy="283.8" r="0.81" fill="#222" fill-opacity="1.0"/><circle cx="247.5" cy="286.3" r="0.34" fill="#222" fill-opacity="1.0"/><circle cx="253.8" cy="292.7" r="0.73" fill="#222" fill-opacity="1.0"/><circle cx="247.9" cy="291.9" r="0.39" fill="#222" fill-opacity="1.0"/><circle cx="253.6" cy="288.4" r="0.36" fill="#222" fill-opacity="1.0"/><circle cx="251.5" cy="287.1" r="0.39" fill="#222" fill-opacity="1.0"/><circle cx="245.1" cy="291.1" r="0.43" fill="#222" fill-opacity="1.0"/><circle cx="248.6" cy="293.2" r="0.53" fill="#222" fill-opacity="1.0"/><circle cx="254.7" cy="286.2" r="0.43" fill="#222" fill-opacity="1.0"/><circle cx="254.8" cy="285.5" r="0.53" fill="#222" fill-opacity="1.0"/><circle cx="252.5" cy="285.6" r="0.39" fill="#222" fill-opacity="1.0"/><circle cx="251.6" cy="291.0" r="0.71" fill="#222" fill-opacity="1.0"/><circle cx="251.7" cy="286.4" r="0.29" fill="#222" fill-opacity="1.0"/><circle cx="250.9" cy="288.7" r="0.60" fill="#222" fill-opacity="1.0"/><circle cx="248.2" cy="292.5" r="0.37" fill="#222" fill-opacity="1.0"/><circle cx="247.6" cy="284.0" r="0.43" fill="#222" fill-opacity="1.0"/><circle cx="253.9" cy="287.9" r="0.82" fill="#222" fill-opacity="1.0"/><circle cx="257.2" cy="287.7" r="0.51" fill="#222" fill-opacity="1.0"/><circle cx="253.2" cy="282.8" r="0.47" fill="#222" fill-opacity="1.0"/><circle cx="251.1" cy="285.1" r="0.41" fill="#222" fill-opacity="1.0"/><circle cx="255.1" cy="285.2" r="0.69" fill="#222" fill-opacity="1.0"/><circle cx="254.4" cy="290.0" r="0.30" fill="#222" fill-opacity="1.0"/><circle cx="246.0" cy="288.1" r="0.49" fill="#222" fill-opacity="1.0"/><circle cx="246.7" cy="289.2" r="0.29" fill="#222" fill-opacity="1.0"/><circle cx="246.4" cy="291.6" r="0.56" fill="#222" fill-opacity="1.0"/><circle cx="253.4" cy="288.5" r="0.39" fill="#222" fill-opacity="1.0"/><circle cx="254.6" cy="288.9" r="0.41" fill="#222" fill-opacity="1.0"/><circle cx="245.5" cy="290.2" r="0.81" fill="#222" fill-opacity="1.0"/><circle cx="248.7" cy="287.7" r="0.77" fill="#222" fill-opacity="1.0"/><circle cx="256.0" cy="285.9" r="0.40" fill="#222" fill-opacity="1.0"/><circle cx="247.9" cy="287.9" r="0.64" fill="#222" fill-opacity="1.0"/><circle cx="255.4" cy="285.6" r="0.56" fill="#222" fill-opacity="1.0"/><circle cx="250.1" cy="286.3" r="0.51" fill="#222" fill-opacity="1.0"/><circle cx="252.0" cy="288.8" r="0.31" fill="#222" fill-opacity="1.0"/><circle cx="247.9" cy="289.5" r="0.71" fill="#222" fill-opacity="1.0"/><circle cx="252.6" cy="292.1" r="0.57" fill="#222" fill-opacity="1.0"/><circle cx="249.3" cy="291.1" r="0.47" fill="#222" fill-opacity="1.0"/><circle cx="246.3" cy="284.3" r="0.52" fill="#222" fill-opacity="1.0"/><circle cx="252.8" cy="288.1" r="0.68" fill="#222" fill-opacity="1.0"/><circle cx="246.3" cy="285.3" r="0.32" fill="#222" fill-opacity="1.0"/><circle cx="251.0" cy="288.5" r="0.37" fill="#222" fill-opacity="1.0"/><circle cx="244.9" cy="285.5" r="0.55" fill="#222" fill-opacity="1.0"/><circle cx="250.8" cy="287.8" r="0.29" fill="#222" fill-opacity="1.0"/><circle cx="246.8" cy="292.1" r="0.35" fill="#222" fill-opacity="1.0"/><circle cx="248.0" cy="282.8" r="0.63" fill="#222" fill-opacity="1.0"/><circle cx="252.3" cy="284.7" r="0.79" fill="#222" fill-opacity="1.0"/><circle cx="255.6" cy="284.6" r="0.52" fill="#222" fill-opacity="1.0"/><circle cx="248.0" cy="286.0" r="0.39" fill="#222" fill-opacity="1.0"/><circle cx="254.4" cy="286.7" r="0.37" fill="#222" fill-opacity="1.0"/><circle cx="256.2" cy="290.8" r="0.49" fill="#222" fill-opacity="1.0"/><circle cx="255.4" cy="289.2" r="0.50" fill="#222" fill-opacity="1.0"/><circle cx="247.3" cy="288.7" r="0.54" fill="#222" fill-opacity="1.0"/><circle cx="246.8" cy="288.4" r="0.37" fill="#222" fill-opacity="1.0"/><circle cx="255.3" cy="289.5" r="0.53" fill="#222" fill-opacity="1.0"/><circle cx="251.5" cy="288.6" r="0.45" fill="#222" fill-opacity="1.0"/><circle cx="252.7" cy="290.1" r="0.54" fill="#222" fill-opacity="1.0"/><circle cx="250.1" cy="287.5" r="0.63" fill="#222" fill-opacity="1.0"/><circle cx="248.9" cy="286.2" r="0.54" fill="#222" fill-opacity="1.0"/><circle cx="257.4" cy="287.5" r="0.65" fill="#222" fill-opacity="1.0"/><circle cx="247.1" cy="289.9" r="0.65" fill="#222" fill-opacity="1.0"/><circle cx="255.1" cy="288.1" r="0.63" fill="#222" fill-opacity="1.0"/><circle cx="250.3" cy="290.0" r="0.35" fill="#222" fill-opacity="1.0"/><circle cx="251.2" cy="293.5" r="0.39" fill="#222" fill-opacity="1.0"/><circle cx="252.9" cy="291.0" r="0.70" fill="#222" fill-opacity="1.0"/><circle cx="255.3" cy="287.4" r="0.81" fill="#222" fill-opacity="1.0"/><circle cx="249.7" cy="294.4" r="0.80" fill="#222" fill-opacity="1.0"/><circle cx="250.4" cy="282.4" r="0.74" fill="#222" fill-opacity="1.0"/><circle cx="251.3" cy="287.5" r="0.52" fill="#222" fill-opacity="1.0"/><circle cx="256.3" cy="290.0" r="0.56" fill="#222" fill-opacity="1.0"/><circle cx="250.8" cy="292.8" r="0.69" fill="#222" fill-opacity="1.0"/><circle cx="252.6" cy="283.4" r="0.54" fill="#222" fill-opacity="1.0"/><circle cx="251.9" cy="285.3" r="0.62" fill="#222" fill-opacity="1.0"/><circle cx="253.8" cy="292.0" r="0.49" fill="#222" fill-opacity="1.0"/><circle cx="249.3" cy="288.9" r="0.72" fill="#222" fill-opacity="1.0"/><circle cx="254.9" cy="291.8" r="0.58" fill="#222" fill-opacity="1.0"/><circle cx="257.4" cy="288.3" r="0.78" fill="#222" fill-opacity="1.0"/><circle cx="251.3" cy="287.3" r="0.72" fill="#222" fill-opacity="1.0"/><circle cx="252.5" cy="288.5" r="0.70" fill="#222" fill-opacity="1.0"/><circle cx="252.9" cy="292.3" r="0.79" fill="#222" fill-opacity="1.0"/><circle cx="251.4" cy="289.3" r="0.43" fill="#222" fill-opacity="1.0"/><circle cx="254.0" cy="291.1" r="0.76" fill="#222" fill-opacity="1.0"/><circle cx="250.3" cy="283.7" r="0.57" fill="#222" fill-opacity="1.0"/><circle cx="250.3" cy="283.5" r="0.58" fill="#222" fill-opacity="1.0"/><circle cx="247.8" cy="290.1" r="0.46" fill="#222" fill-opacity="1.0"/><circle cx="249.9" cy="286.4" r="0.28" fill="#222" fill-opacity="1.0"/><circle cx="257.5" cy="288.3" r="0.63" fill="#222" fill-opacity="1.0"/><circle cx="252.3" cy="291.5" r="0.73" fill="#222" fill-opacity="1.0"/><circle cx="245.5" cy="290.4" r="0.52" fill="#222" fill-opacity="1.0"/><circle cx="246.5" cy="286.8" r="0.50" fill="#222" fill-opacity="1.0"/><circle cx="249.1" cy="287.1" r="0.82" fill="#222" fill-opacity="1.0"/><circle cx="254.0" cy="289.7" r="0.52" fill="#222" fill-opacity="1.0"/><circle cx="250.2" cy="290.2" r="0.48" fill="#222" fill-opacity="1.0"/><circle cx="249.1" cy="283.6" r="0.82" fill="#222" fill-opacity="1.0"/><circle cx="255.1" cy="284.4" r="0.58" fill="#222" fill-opacity="1.0"/><circle cx="251.0" cy="291.6" r="0.31" fill="#222" fill-opacity="1.0"/><circle cx="252.3" cy="288.0" r="0.74" fill="#222" fill-opacity="1.0"/><circle cx="253.5" cy="291.5" r="0.35" fill="#222" fill-opacity="1.0"/><circle cx="248.1" cy="292.5" r="0.57" fill="#222" fill-opacity="1.0"/><circle cx="248.5" cy="290.3" r="0.75" fill="#222" fill-opacity="1.0"/><circle cx="244.2" cy="288.5" r="0.67" fill="#222" fill-opacity="1.0"/><circle cx="246.0" cy="292.6" r="0.31" fill="#222" fill-opacity="1.0"/><circle cx="254.2" cy="284.8" r="0.36" fill="#222" fill-opacity="1.0"/><circle cx="253.5" cy="292.3" r="0.29" fill="#222" fill-opacity="1.0"/><circle cx="246.9" cy="288.3" r="0.52" fill="#222" fill-opacity="1.0"/><circle cx="246.4" cy="286.5" r="0.37" fill="#222" fill-opacity="1.0"/><circle cx="255.5" cy="292.2" r="0.31" fill="#222" fill-opacity="1.0"/><circle cx="248.3" cy="284.7" r="0.66" fill="#222" fill-opacity="1.0"/><circle cx="245.6" cy="290.1" r="0.51" fill="#222" fill-opacity="1.0"/><circle cx="249.0" cy="290.0" r="0.76" fill="#222" fill-opacity="1.0"/><circle cx="247.3" cy="288.1" r="0.74" fill="#222" fill-opacity="1.0"/><circle cx="247.4" cy="287.0" r="0.70" fill="#222" fill-opacity="1.0"/><circle cx="252.7" cy="291.8" r="0.30" fill="#222" fill-opacity="1.0"/><circle cx="250.1" cy="292.0" r="0.72" fill="#222" fill-opacity="1.0"/><circle cx="251.5" cy="289.0" r="0.80" fill="#222" fill-opacity="1.0"/><circle cx="253.8" cy="283.1" r="0.51" fill="#222" fill-opacity="1.0"/><circle cx="253.3" cy="291.0" r="0.70" fill="#222" fill-opacity="1.0"/><circle cx="257.4" cy="287.1" r="0.69" fill="#222" fill-opacity="1.0"/><circle cx="249.3" cy="285.9" r="0.77" fill="#222" fill-opacity="1.0"/><circle cx="246.3" cy="290.6" r="0.78" fill="#222" fill-opacity="1.0"/><circle cx="254.2" cy="287.0" r="0.68" fill="#222" fill-opacity="1.0"/><circle cx="249.3" cy="288.3" r="0.44" fill="#222" fill-opacity="1.0"/><circle cx="249.4" cy="285.0" r="0.80" fill="#222" fill-opacity="1.0"/><circle cx="254.7" cy="285.7" r="0.68" fill="#222" fill-opacity="1.0"/><circle cx="255.3" cy="289.1" r="0.68" fill="#222" fill-opacity="1.0"/><circle cx="253.1" cy="291.1" r="0.46" fill="#222" fill-opacity="1.0"/><circle cx="250.2" cy="288.8" r="0.70" fill="#222" fill-opacity="1.0"/><circle cx="245.6" cy="284.7" r="0.76" fill="#222" fill-opacity="1.0"/><circle cx="253.3" cy="293.5" r="0.59" fill="#222" fill-opacity="1.0"/><circle cx="251.2" cy="293.0" r="0.50" fill="#222" fill-opacity="1.0"/><circle cx="245.3" cy="287.5" r="0.49" fill="#222" fill-opacity="1.0"/><circle cx="251.5" cy="292.9" r="0.56" fill="#222" fill-opacity="1.0"/><text x="0" y="303.15" font-size="10" text-anchor="middle" fill="#111" stroke="#111" stroke-width="0.36" font-family="Liberation Sans" transform="translate(250.78,0) scale(0.9,1)">90</text>
<text x="0" y="0" font-size="9.5" font-weight="bold" font-style="italic" text-anchor="middle" fill="#111" stroke="#111" stroke-width="1.1" font-family="Liberation Serif" transform="translate(277.15,289.55) rotate(18) scale(1.15,0.9)">Stay</text><circle cx="275.6" cy="290.2" r="0.81" fill="#111" fill-opacity="1.0"/><circle cx="274.1" cy="290.2" r="0.63" fill="#111" fill-opacity="1.0"/><circle cx="275.6" cy="292.5" r="0.84" fill="#111" fill-opacity="1.0"/><circle cx="282.2" cy="290.6" r="0.46" fill="#111" fill-opacity="1.0"/><circle cx="275.5" cy="285.3" r="0.33" fill="#111" fill-opacity="1.0"/><circle cx="281.4" cy="291.4" r="0.82" fill="#111" fill-opacity="1.0"/><circle cx="279.8" cy="284.0" r="0.38" fill="#111" fill-opacity="1.0"/><circle cx="275.5" cy="292.2" r="0.52" fill="#111" fill-opacity="1.0"/><circle cx="278.9" cy="294.2" r="0.68" fill="#111" fill-opacity="1.0"/><circle cx="274.9" cy="291.0" r="0.72" fill="#111" fill-opacity="1.0"/><circle cx="278.5" cy="283.9" r="0.50" fill="#111" fill-opacity="1.0"/><circle cx="283.4" cy="287.9" r="0.46" fill="#111" fill-opacity="1.0"/><circle cx="279.9" cy="291.9" r="0.46" fill="#111" fill-opacity="1.0"/><circle cx="278.4" cy="288.6" r="0.79" fill="#111" fill-opacity="1.0"/><circle cx="281.1" cy="293.1" r="0.56" fill="#111" fill-opacity="1.0"/><circle cx="282.4" cy="293.0" r="0.55" fill="#111" fill-opacity="1.0"/><circle cx="281.3" cy="288.5" r="0.44" fill="#111" fill-opacity="1.0"/><circle cx="275.9" cy="288.1" r="0.65" fill="#111" fill-opacity="1.0"/><circle cx="276.9" cy="284.6" r="0.30" fill="#111" fill-opacity="1.0"/><circle cx="276.7" cy="286.6" r="0.57" fill="#111" fill-opacity="1.0"/><circle cx="281.8" cy="284.8" r="0.38" fill="#111" fill-opacity="1.0"/><circle cx="282.6" cy="291.5" r="0.56" fill="#111" fill-opacity="1.0"/><circle cx="276.9" cy="284.6" r="0.89" fill="#111" fill-opacity="1.0"/><circle cx="282.2" cy="284.5" r="0.84" fill="#111" fill-opacity="1.0"/><circle cx="274.8" cy="287.5" r="0.40" fill="#111" fill-opacity="1.0"/><circle cx="280.3" cy="285.7" r="0.59" fill="#111" fill-opacity="1.0"/><circle cx="277.3" cy="291.7" r="0.60" fill="#111" fill-opacity="1.0"/><circle cx="276.2" cy="286.6" r="0.39" fill="#111" fill-opacity="1.0"/><circle cx="273.1" cy="285.8" r="0.64" fill="#111" fill-opacity="1.0"/><circle cx="280.4" cy="288.6" r="0.78" fill="#111" fill-opacity="1.0"/><circle cx="277.4" cy="288.7" r="0.40" fill="#111" fill-opacity="1.0"/><circle cx="277.1" cy="283.9" r="0.38" fill="#111" fill-opacity="1.0"/><circle cx="275.8" cy="284.0" r="0.44" fill="#111" fill-opacity="1.0"/><circle cx="279.1" cy="287.2" r="0.38" fill="#111" fill-opacity="1.0"/><circle cx="279.8" cy="283.8" r="0.72" fill="#111" fill-opacity="1.0"/><circle cx="273.3" cy="288.8" r="0.64" fill="#111" fill-opacity="1.0"/><circle cx="273.4" cy="285.5" r="0.58" fill="#111" fill-opacity="1.0"/><circle cx="277.8" cy="291.1" r="0.62" fill="#111" fill-opacity="1.0"/><circle cx="278.4" cy="285.6" r="0.46" fill="#111" fill-opacity="1.0"/><circle cx="280.9" cy="292.8" r="0.31" fill="#111" fill-opacity="1.0"/><circle cx="276.8" cy="290.3" r="0.73" fill="#111" fill-opacity="1.0"/><circle cx="277.8" cy="284.3" r="0.36" fill="#111" fill-opacity="1.0"/><circle cx="277.8" cy="291.5" r="0.85" fill="#111" fill-opacity="1.0"/><circle cx="283.2" cy="287.0" r="0.64" fill="#111" fill-opacity="1.0"/><circle cx="274.1" cy="290.9" r="0.63" fill="#111" fill-opacity="1.0"/><text x="0" y="303.15" font-size="10" text-anchor="middle" fill="#111" stroke="#111" stroke-width="0.36" font-family="Liberation Sans" transform="translate(277.15,0) scale(0.9,1)">36</text>
<text x="0" y="0" font-size="9.5" font-weight="bold" font-style="italic" text-anchor="middle" fill="#111" stroke="#111" stroke-width="1.1" font-family="Liberation Serif" transform="translate(303.52,289.55) rotate(18) scale(1.15,0.9)">Stay</text><circle cx="308.0" cy="290.3" r="0.45" fill="#111" fill-opacity="1.0"/><circle cx="301.9" cy="289.7" r="0.82" fill="#111" fill-opacity="1.0"/><circle cx="299.6" cy="287.1" r="0.86" fill="#111" fill-opacity="1.0"/><circle cx="300.5" cy="289.0" r="0.38" fill="#111" fill-opacity="1.0"/><circle cx="304.8" cy="287.7" r="0.52" fill="#111" fill-opacity="1.0"/><circle cx="307.1" cy="292.9" r="0.57" fill="#111" fill-opacity="1.0"/><circle cx="300.2" cy="288.7" r="0.81" fill="#111" fill-opacity="1.0"/><circle cx="308.0" cy="288.5" r="0.83" fill="#111" fill-opacity="1.0"/><circle cx="303.3" cy="284.4" r="0.89" fill="#111" fill-opacity="1.0"/><circle cx="305.4" cy="291.6" r="0.59" fill="#111" fill-opacity="1.0"/><circle cx="303.5" cy="291.4" r="0.42" fill="#111" fill-opacity="1.0"/><circle cx="310.0" cy="286.2" r="0.83" fill="#111" fill-opacity="1.0"/><circle cx="305.5" cy="285.7" r="0.49" fill="#111" fill-opacity="1.0"/><circle cx="304.1" cy="289.1" r="0.37" fill="#111" fill-opacity="1.0"/><circle cx="300.8" cy="289.4" r="0.69" fill="#111" fill-opacity="1.0"/><circle cx="303.1" cy="288.3" r="0.81" fill="#111" fill-opacity="1.0"/><circle cx="300.9" cy="290.5" r="0.52" fill="#111" fill-opacity="1.0"/><circle cx="300.5" cy="292.9" r="0.88" fill="#111" fill-opacity="1.0"/><circle cx="306.9" cy="293.8" r="0.79" fill="#111" fill-opacity="1.0"/><circle cx="305.8" cy="286.5" r="0.84" fill="#111" fill-opacity="1.0"/><circle cx="301.1" cy="287.1" r="0.32" fill="#111" fill-opacity="1.0"/><circle cx="302.3" cy="288.6" r="0.47" fill="#111" fill-opacity="1.0"/><circle cx="306.7" cy="286.6" r="0.79" fill="#111" fill-opacity="1.0"/><circle cx="303.4" cy="290.0" r="0.54" fill="#111" fill-opacity="1.0"/><circle cx="305.5" cy="290.5" r="0.70" fill="#111" fill-opacity="1.0"/><circle cx="303.8" cy="286.9" r="0.74" fill="#111" fill-opacity="1.0"/><circle cx="303.0" cy="288.5" r="0.36" fill="#111" fill-opacity="1.0"/><circle cx="302.7" cy="283.7" r="0.79" fill="#111" fill-opacity="1.0"/><circle cx="303.5" cy="288.2" r="0.74" fill="#111" fill-opacity="1.0"/><circle cx="309.5" cy="290.7" r="0.35" fill="#111" fill-opacity="1.0"/><circle cx="308.5" cy="288.2" r="0.43" fill="#111" fill-opacity="1.0"/><circle cx="306.8" cy="290.3" r="0.72" fill="#111" fill-opacity="1.0"/><circle cx="304.4" cy="290.1" r="0.75" fill="#111" fill-opacity="1.0"/><circle cx="305.6" cy="290.6" r="0.43" fill="#111" fill-opacity="1.0"/><circle cx="306.2" cy="290.8" r="0.34" fill="#111" fill-opacity="1.0"/><circle cx="306.3" cy="289.0" r="0.54" fill="#111" fill-opacity="1.0"/><circle cx="309.5" cy="286.4" r="0.63" fill="#111" fill-opacity="1.0"/><circle cx="307.6" cy="293.5" r="0.46" fill="#111" fill-opacity="1.0"/><circle cx="300.1" cy="288.3" r="0.55" fill="#111" fill-opacity="1.0"/><circle cx="305.3" cy="294.1" r="0.36" fill="#111" fill-opacity="1.0"/><circle cx="301.8" cy="292.7" r="0.47" fill="#111" fill-opacity="1.0"/><circle cx="305.9" cy="289.0" r="0.74" fill="#111" fill-opacity="1.0"/><circle cx="301.1" cy="288.4" r="0.81" fill="#111" fill-opacity="1.0"/><circle cx="303.1" cy="287.1" r="0.42" fill="#111" fill-opacity="1.0"/><circle cx="307.4" cy="286.8" r="0.63" fill="#111" fill-opacity="1.0"/><text x="0" y="303.15" font-size="10" text-anchor="middle" fill="#111" stroke="#111" stroke-width="0.36" font-family="Liberation Sans" transform="translate(303.52,0) scale(0.9,1)">36</text>
<text x="0" y="0" font-size="9.5" font-weight="bold" font-style="italic" text-anchor="middle" fill="#111" stroke="#111" stroke-width="1.1" font-family="Liberation Serif" transform="translate(329.88,289.55) rotate(18) scale(1.15,0.9)">Stay</text><circle cx="335.7" cy="291.0" r="0.88" fill="#111" fill-opacity="1.0"/><circle cx="325.6" cy="291.6" r="0.56" fill="#111" fill-opacity="1.0"/><circle cx="326.6" cy="285.1" r="0.42" fill="#111" fill-opacity="1.0"/><circle cx="333.0" cy="289.3" r="0.32" fill="#111" fill-opacity="1.0"/><circle cx="329.2" cy="289.5" r="0.36" fill="#111" fill-opacity="1.0"/><circle cx="329.6" cy="291.9" r="0.83" fill="#111" fill-opacity="1.0"/><circle cx="335.7" cy="289.2" r="0.84" fill="#111" fill-opacity="1.0"/><circle cx="330.7" cy="287.0" r="0.39" fill="#111" fill-opacity="1.0"/><circle cx="330.7" cy="289.1" r="0.88" fill="#111" fill-opacity="1.0"/><circle cx="331.4" cy="283.9" r="0.69" fill="#111" fill-opacity="1.0"/><circle cx="334.4" cy="288.6" r="0.32" fill="#111" fill-opacity="1.0"/><circle cx="328.5" cy="291.5" r="0.79" fill="#111" fill-opacity="1.0"/><circle cx="336.6" cy="288.9" r="0.51" fill="#111" fill-opacity="1.0"/><circle cx="335.5" cy="289.5" r="0.82" fill="#111" fill-opacity="1.0"/><circle cx="326.8" cy="285.9" r="0.56" fill="#111" fill-opacity="1.0"/><circle cx="330.3" cy="289.2" r="0.82" fill="#111" fill-opacity="1.0"/><circle cx="329.2" cy="288.1" r="0.41" fill="#111" fill-opacity="1.0"/><circle cx="326.0" cy="287.8" r="0.87" fill="#111" fill-opacity="1.0"/><circle cx="326.9" cy="290.6" r="0.72" fill="#111" fill-opacity="1.0"/><circle cx="336.6" cy="291.0" r="0.53" fill="#111" fill-opacity="1.0"/><circle cx="336.7" cy="288.4" r="0.80" fill="#111" fill-opacity="1.0"/><circle cx="333.4" cy="291.6" r="0.59" fill="#111" fill-opacity="1.0"/><circle cx="329.3" cy="292.2" r="0.48" fill="#111" fill-opacity="1.0"/><circle cx="326.5" cy="286.4" r="0.71" fill="#111" fill-opacity="1.0"/><circle cx="332.8" cy="284.2" r="0.52" fill="#111" fill-opacity="1.0"/><circle cx="327.7" cy="284.9" r="0.34" fill="#111" fill-opacity="1.0"/><circle cx="329.1" cy="285.7" r="0.38" fill="#111" fill-opacity="1.0"/><circle cx="329.5" cy="293.6" r="0.70" fill="#111" fill-opacity="1.0"/><circle cx="325.1" cy="287.6" r="0.66" fill="#111" fill-opacity="1.0"/><circle cx="335.7" cy="289.3" r="0.61" fill="#111" fill-opacity="1.0"/><circle cx="332.0" cy="284.7" r="0.76" fill="#111" fill-opacity="1.0"/><circle cx="335.6" cy="290.5" r="0.43" fill="#111" fill-opacity="1.0"/><circle cx="334.0" cy="292.8" r="0.79" fill="#111" fill-opacity="1.0"/><circle cx="334.1" cy="288.1" r="0.87" fill="#111" fill-opacity="1.0"/><circle cx="328.2" cy="285.0" r="0.79" fill="#111" fill-opacity="1.0"/><circle cx="331.5" cy="287.9" r="0.67" fill="#111" fill-opacity="1.0"/><circle cx="326.9" cy="286.3" r="0.51" fill="#111" fill-opacity="1.0"/><circle cx="333.2" cy="288.3" r="0.80" fill="#111" fill-opacity="1.0"/><circle cx="331.4" cy="290.2" r="0.36" fill="#111" fill-opacity="1.0"/><circle cx="331.5" cy="288.4" r="0.47" fill="#111" fill-opacity="1.0"/><circle cx="330.8" cy="286.0" r="0.86" fill="#111" fill-opacity="1.0"/><circle cx="332.9" cy="285.8" r="0.72" fill="#111" fill-opacity="1.0"/><circle cx="333.4" cy="284.9" r="0.86" fill="#111" fill-opacity="1.0"/><circle cx="329.2" cy="292.6" r="0.44" fill="#111" fill-opacity="1.0"/><circle cx="336.0" cy="289.7" r="0.49" fill="#111" fill-opacity="1.0"/><text x="0" y="303.15" font-size="10" text-anchor="middle" fill="#111" stroke="#111" stroke-width="0.36" font-family="Liberation Sans" transform="translate(329.88,0) scale(0.9,1)">33</text>
<text x="0" y="0" font-size="9.5" font-weight="bold" font-style="italic" text-anchor="middle" fill="#111" stroke="#111" stroke-width="1.1" font-family="Liberation Serif" transform="translate(356.25,289.55) rotate(18) scale(1.15,0.9)">Stay</text><circle cx="356.9" cy="283.4" r="0.75" fill="#111" fill-opacity="1.0"/><circle cx="358.7" cy="288.0" r="0.65" fill="#111" fill-opacity="1.0"/><circle cx="354.7" cy="289.9" r="0.82" fill="#111" fill-opacity="1.0"/><circle cx="354.3" cy="293.8" r="0.52" fill="#111" fill-opacity="1.0"/><circle cx="352.2" cy="287.2" r="0.77" fill="#111" fill-opacity="1.0"/><circle cx="362.3" cy="290.1" r="0.36" fill="#111" fill-opacity="1.0"/><circle cx="356.4" cy="290.0" r="0.66" fill="#111" fill-opacity="1.0"/><circle cx="358.0" cy="290.8" r="0.62" fill="#111" fill-opacity="1.0"/><circle cx="353.4" cy="290.7" r="0.61" fill="#111" fill-opacity="1.0"/><circle cx="355.5" cy="283.8" r="0.88" fill="#111" fill-opacity="1.0"/><circle cx="353.2" cy="286.6" r="0.66" fill="#111" fill-opacity="1.0"/><circle cx="354.2" cy="292.9" r="0.37" fill="#111" fill-opacity="1.0"/><circle cx="361.0" cy="287.5" r="0.75" fill="#111" fill-opacity="1.0"/><circle cx="356.8" cy="287.7" r="0.55" fill="#111" fill-opacity="1.0"/><circle cx="355.9" cy="289.9" r="0.74" fill="#111" fill-opacity="1.0"/><circle cx="353.0" cy="291.1" r="0.33" fill="#111" fill-opacity="1.0"/><circle cx="360.7" cy="287.6" r="0.80" fill="#111" fill-opacity="1.0"/><circle cx="357.4" cy="287.5" r="0.75" fill="#111" fill-opacity="1.0"/><circle cx="355.9" cy="284.0" r="0.77" fill="#111" fill-opacity="1.0"/><circle cx="357.0" cy="293.0" r="0.88" fill="#111" fill-opacity="1.0"/><circle cx="357.4" cy="292.0" r="0.57" fill="#111" fill-opacity="1.0"/><circle cx="352.2" cy="287.2" r="0.53" fill="#111" fill-opacity="1.0"/><circle cx="353.5" cy="285.0" r="0.32" fill="#111" fill-opacity="1.0"/><circle cx="355.7" cy="288.6" r="0.81" fill="#111" fill-opacity="1.0"/><circle cx="354.8" cy="287.8" r="0.78" fill="#111" fill-opacity="1.0"/><circle cx="358.1" cy="291.8" r="0.82" fill="#111" fill-opacity="1.0"/><circle cx="354.8" cy="284.5" r="0.34" fill="#111" fill-opacity="1.0"/><circle cx="356.3" cy="293.7" r="0.88" fill="#111" fill-opacity="1.0"/><circle cx="355.5" cy="291.1" r="0.65" fill="#111" fill-opacity="1.0"/><circle cx="353.4" cy="290.6" r="0.75" fill="#111" fill-opacity="1.0"/><circle cx="358.4" cy="287.8" r="0.45" fill="#111" fill-opacity="1.0"/><circle cx="356.1" cy="289.4" r="0.75" fill="#111" fill-opacity="1.0"/><circle cx="358.8" cy="293.7" r="0.50" fill="#111" fill-opacity="1.0"/><circle cx="355.3" cy="285.0" r="0.55" fill="#111" fill-opacity="1.0"/><circle cx="351.6" cy="289.2" r="0.85" fill="#111" fill-opacity="1.0"/><circle cx="353.9" cy="292.2" r="0.88" fill="#111" fill-opacity="1.0"/><circle cx="357.0" cy="293.7" r="0.31" fill="#111" fill-opacity="1.0"/><circle cx="357.3" cy="291.4" r="0.50" fill="#111" fill-opacity="1.0"/><circle cx="358.9" cy="288.8" r="0.32" fill="#111" fill-opacity="1.0"/><circle cx="355.6" cy="285.4" r="0.67" fill="#111" fill-opacity="1.0"/><circle cx="354.7" cy="288.5" r="0.78" fill="#111" fill-opacity="1.0"/><circle cx="361.8" cy="285.1" r="0.47" fill="#111" fill-opacity="1.0"/><circle cx="358.7" cy="283.8" r="0.36" fill="#111" fill-opacity="1.0"/><circle cx="354.3" cy="286.3" r="0.51" fill="#111" fill-opacity="1.0"/><circle cx="354.6" cy="292.9" r="0.41" fill="#111" fill-opacity="1.0"/><text x="0" y="303.15" font-size="10" text-anchor="middle" fill="#111" stroke="#111" stroke-width="0.36" font-family="Liberation Sans" transform="translate(356.25,0) scale(0.9,1)">63</text>
<circle cx="382.3" cy="287.6" r="0.23" fill="#555" fill-opacity="1.0"/><circle cx="380.5" cy="286.9" r="0.50" fill="#555" fill-opacity="1.0"/><circle cx="384.2" cy="282.7" r="0.32" fill="#555" fill-opacity="1.0"/><circle cx="384.7" cy="284.8" r="0.47" fill="#555" fill-opacity="1.0"/><circle cx="380.8" cy="291.8" r="0.33" fill="#555" fill-opacity="1.0"/><circle cx="379.9" cy="289.9" r="0.32" fill="#555" fill-opacity="1.0"/><circle cx="383.4" cy="289.3" r="0.28" fill="#555" fill-opacity="1.0"/><circle cx="380.9" cy="284.1" r="0.44" fill="#555" fill-opacity="1.0"/><circle cx="381.7" cy="282.9" r="0.21" fill="#555" fill-opacity="1.0"/><circle cx="379.0" cy="291.2" r="0.20" fill="#555" fill-opacity="1.0"/><circle cx="386.5" cy="284.8" r="0.31" fill="#555" fill-opacity="1.0"/><circle cx="383.5" cy="288.5" r="0.19" fill="#555" fill-opacity="1.0"/><circle cx="382.6" cy="290.2" r="0.23" fill="#555" fill-opacity="1.0"/><circle cx="376.6" cy="289.1" r="0.42" fill="#555" fill-opacity="1.0"/><circle cx="378.0" cy="283.7" r="0.36" fill="#555" fill-opacity="1.0"/><circle cx="383.4" cy="288.5" r="0.22" fill="#555" fill-opacity="1.0"/><circle cx="378.7" cy="291.1" r="0.50" fill="#555" fill-opacity="1.0"/><circle cx="384.8" cy="291.2" r="0.40" fill="#555" fill-opacity="1.0"/><circle cx="380.3" cy="288.7" r="0.24" fill="#555" fill-opacity="1.0"/><circle cx="385.1" cy="282.8" r="0.25" fill="#555" fill-opacity="1.0"/><circle cx="382.1" cy="291.8" r="0.32" fill="#555" fill-opacity="1.0"/><circle cx="382.3" cy="287.9" r="0.30" fill="#555" fill-opacity="1.0"/><circle cx="384.0" cy="284.5" r="0.19" fill="#555" fill-opacity="1.0"/><circle cx="384.0" cy="283.6" r="0.22" fill="#555" fill-opacity="1.0"/><circle cx="381.2" cy="285.1" r="0.25" fill="#555" fill-opacity="1.0"/><circle cx="387.1" cy="284.5" r="0.51" fill="#555" fill-opacity="1.0"/><circle cx="377.6" cy="292.6" r="0.39" fill="#555" fill-opacity="1.0"/><circle cx="382.1" cy="288.5" r="0.22" fill="#555" fill-opacity="1.0"/><circle cx="382.1" cy="288.3" r="0.46" fill="#555" fill-opacity="1.0"/><circle cx="381.2" cy="287.6" r="0.39" fill="#555" fill-opacity="1.0"/><circle cx="379.9" cy="287.6" r="0.22" fill="#555" fill-opacity="1.0"/><circle cx="388.9" cy="285.6" r="0.44" fill="#555" fill-opacity="1.0"/><circle cx="383.1" cy="288.0" r="0.41" fill="#555" fill-opacity="1.0"/><circle cx="387.6" cy="286.7" r="0.44" fill="#555" fill-opacity="1.0"/><circle cx="383.0" cy="281.8" r="0.35" fill="#555" fill-opacity="1.0"/><circle cx="378.9" cy="286.6" r="0.42" fill="#555" fill-opacity="1.0"/><circle cx="384.9" cy="290.3" r="0.26" fill="#555" fill-opacity="1.0"/><circle cx="383.0" cy="286.5" r="0.46" fill="#555" fill-opacity="1.0"/><circle cx="382.8" cy="287.6" r="0.28" fill="#555" fill-opacity="1.0"/><circle cx="382.4" cy="287.7" r="0.41" fill="#555" fill-opacity="1.0"/><circle cx="382.5" cy="289.3" r="0.49" fill="#555" fill-opacity="1.0"/><circle cx="384.5" cy="294.5" r="0.38" fill="#555" fill-opacity="1.0"/><circle cx="378.4" cy="288.7" r="0.37" fill="#555" fill-opacity="1.0"/><circle cx="386.9" cy="288.6" r="0.28" fill="#555" fill-opacity="1.0"/><circle cx="375.9" cy="286.4" r="0.43" fill="#555" fill-opacity="1.0"/><circle cx="377.6" cy="289.0" r="0.36" fill="#555" fill-opacity="1.0"/><circle cx="384.1" cy="288.3" r="0.43" fill="#555" fill-opacity="1.0"/><circle cx="386.5" cy="293.2" r="0.40" fill="#555" fill-opacity="1.0"/><circle cx="376.5" cy="284.8" r="0.34" fill="#555" fill-opacity="1.0"/><circle cx="380.7" cy="289.8" r="0.32" fill="#555" fill-opacity="1.0"/><circle cx="388.3" cy="288.3" r="0.24" fill="#555" fill-opacity="1.0"/><circle cx="378.7" cy="292.5" r="0.35" fill="#555" fill-opacity="1.0"/><circle cx="382.2" cy="289.5" r="0.27" fill="#555" fill-opacity="1.0"/><circle cx="379.1" cy="293.7" r="0.41" fill="#555" fill-opacity="1.0"/><circle cx="387.9" cy="284.8" r="0.31" fill="#555" fill-opacity="1.0"/><circle cx="379.5" cy="284.3" r="0.24" fill="#555" fill-opacity="1.0"/><circle cx="382.7" cy="286.4" r="0.18" fill="#555" fill-opacity="1.0"/><circle cx="384.1" cy="289.1" r="0.49" fill="#555" fill-opacity="1.0"/><circle cx="381.2" cy="292.6" r="0.22" fill="#555" fill-opacity="1.0"/><circle cx="382.1" cy="287.7" r="0.51" fill="#555" fill-opacity="1.0"/><circle cx="378.2" cy="293.4" r="0.25" fill="#555" fill-opacity="1.0"/><circle cx="382.9" cy="290.6" r="0.23" fill="#555" fill-opacity="1.0"/><circle cx="375.5" cy="287.4" r="0.33" fill="#555" fill-opacity="1.0"/><circle cx="383.9" cy="290.2" r="0.35" fill="#555" fill-opacity="1.0"/><circle cx="382.8" cy="287.5" r="0.26" fill="#555" fill-opacity="1.0"/><circle cx="381.7" cy="288.7" r="0.22" fill="#555" fill-opacity="1.0"/><circle cx="377.4" cy="286.7" r="0.39" fill="#555" fill-opacity="1.0"/><circle cx="384.3" cy="284.2" r="0.28" fill="#555" fill-opacity="1.0"/><circle cx="385.1" cy="282.4" r="0.19" fill="#555" fill-opacity="1.0"/><circle cx="383.0" cy="288.2" r="0.21" fill="#555" fill-opacity="1.0"/><circle cx="382.2" cy="287.6" r="0.28" fill="#555" fill-opacity="1.0"/><circle cx="388.3" cy="286.4" r="0.29" fill="#555" fill-opacity="1.0"/><circle cx="383.1" cy="287.6" r="0.25" fill="#555" fill-opacity="1.0"/><circle cx="388.5" cy="285.0" r="0.18" fill="#555" fill-opacity="1.0"/><circle cx="384.3" cy="282.9" r="0.27" fill="#555" fill-opacity="1.0"/><circle cx="375.6" cy="290.3" r="0.20" fill="#555" fill-opacity="1.0"/><circle cx="386.9" cy="291.6" r="0.20" fill="#555" fill-opacity="1.0"/><circle cx="379.6" cy="288.1" r="0.20" fill="#555" fill-opacity="1.0"/><circle cx="382.1" cy="287.0" r="0.20" fill="#555" fill-opacity="1.0"/><circle cx="387.4" cy="290.8" r="0.49" fill="#555" fill-opacity="1.0"/><circle cx="382.5" cy="288.3" r="0.40" fill="#555" fill-opacity="1.0"/><circle cx="381.2" cy="289.1" r="0.30" fill="#555" fill-opacity="1.0"/><circle cx="375.6" cy="287.1" r="0.22" fill="#555" fill-opacity="1.0"/><circle cx="380.9" cy="284.1" r="0.20" fill="#555" fill-opacity="1.0"/><circle cx="386.8" cy="287.9" r="0.21" fill="#555" fill-opacity="1.0"/><circle cx="381.7" cy="286.8" r="0.41" fill="#555" fill-opacity="1.0"/><circle cx="382.7" cy="288.5" r="0.21" fill="#555" fill-opacity="1.0"/><circle cx="379.3" cy="289.3" r="0.28" fill="#555" fill-opacity="1.0"/><circle cx="382.7" cy="290.1" r="0.46" fill="#555" fill-opacity="1.0"/><circle cx="379.3" cy="283.1" r="0.31" fill="#555" fill-opacity="1.0"/><text x="0" y="303.15" font-size="10" text-anchor="middle" fill="#111" stroke="#111" stroke-width="0.36" font-family="Liberation Sans" transform="translate(382.62,0) scale(0.9,1)">66</text>
<circle cx="410.2" cy="287.7" r="0.58" fill="#222" fill-opacity="1.0"/><circle cx="413.4" cy="293.0" r="0.39" fill="#222" fill-opacity="1.0"/><circle cx="407.4" cy="285.5" r="0.73" fill="#222" fill-opacity="1.0"/><circle cx="407.4" cy="289.3" r="0.54" fill="#222" fill-opacity="1.0"/><circle cx="410.4" cy="289.0" r="0.47" fill="#222" fill-opacity="1.0"/><circle cx="409.5" cy="286.2" r="0.36" fill="#222" fill-opacity="1.0"/><circle cx="410.7" cy="288.7" r="0.89" fill="#222" fill-opacity="1.0"/><circle cx="411.4" cy="288.7" r="0.76" fill="#222" fill-opacity="1.0"/><circle cx="412.7" cy="291.6" r="0.83" fill="#222" fill-opacity="1.0"/><circle cx="409.2" cy="287.9" r="0.86" fill="#222" fill-opacity="1.0"/><circle cx="409.7" cy="292.9" r="0.78" fill="#222" fill-opacity="1.0"/><circle cx="404.3" cy="287.7" r="0.76" fill="#222" fill-opacity="1.0"/><circle cx="409.5" cy="287.1" r="0.88" fill="#222" fill-opacity="1.0"/><circle cx="407.7" cy="287.2" r="0.37" fill="#222" fill-opacity="1.0"/><circle cx="412.6" cy="283.2" r="0.82" fill="#222" fill-opacity="1.0"/><circle cx="406.5" cy="284.9" r="0.54" fill="#222" fill-opacity="1.0"/><circle cx="412.6" cy="292.9" r="0.76" fill="#222" fill-opacity="1.0"/><circle cx="403.5" cy="286.9" r="0.39" fill="#222" fill-opacity="1.0"/><circle cx="410.0" cy="289.0" r="0.84" fill="#222" fill-opacity="1.0"/><circle cx="408.8" cy="288.6" r="0.41" fill="#222" fill-opacity="1.0"/><circle cx="413.4" cy="291.9" r="0.88" fill="#222" fill-opacity="1.0"/><circle cx="412.8" cy="289.7" r="0.43" fill="#222" fill-opacity="1.0"/><circle cx="409.7" cy="287.5" r="0.75" fill="#222" fill-opacity="1.0"/><circle cx="412.1" cy="289.3" r="0.56" fill="#222" fill-opacity="1.0"/><circle cx="413.3" cy="292.3" r="0.58" fill="#222" fill-opacity="1.0"/><circle cx="408.9" cy="287.6" r="0.49" fill="#222" fill-opacity="1.0"/><circle cx="411.1" cy="286.5" r="0.88" fill="#222" fill-opacity="1.0"/><circle cx="406.3" cy="282.8" r="0.51" fill="#222" fill-opacity="1.0"/><circle cx="403.0" cy="287.7" r="0.33" fill="#222" fill-opacity="1.0"/><circle cx="409.0" cy="288.3" r="0.44" fill="#222" fill-opacity="1.0"/><circle cx="408.0" cy="288.8" r="0.34" fill="#222" fill-opacity="1.0"/><circle cx="412.6" cy="290.1" r="0.82" fill="#222" fill-opacity="1.0"/><circle cx="407.7" cy="287.4" r="0.74" fill="#222" fill-opacity="1.0"/><circle cx="413.8" cy="289.2" r="0.64" fill="#222" fill-opacity="1.0"/><circle cx="405.5" cy="288.2" r="0.38" fill="#222" fill-opacity="1.0"/><circle cx="406.0" cy="288.8" r="0.57" fill="#222" fill-opacity="1.0"/><circle cx="407.1" cy="288.2" r="0.66" fill="#222" fill-opacity="1.0"/><circle cx="405.1" cy="292.8" r="0.45" fill="#222" fill-opacity="1.0"/><circle cx="409.6" cy="285.6" r="0.83" fill="#222" fill-opacity="1.0"/><circle cx="409.4" cy="286.1" r="0.90" fill="#222" fill-opacity="1.0"/><circle cx="409.3" cy="287.8" r="0.49" fill="#222" fill-opacity="1.0"/><circle cx="409.1" cy="290.6" r="0.61" fill="#222" fill-opacity="1.0"/><circle cx="403.1" cy="288.3" r="0.52" fill="#222" fill-opacity="1.0"/><circle cx="410.4" cy="286.7" r="0.71" fill="#222" fill-opacity="1.0"/><circle cx="412.0" cy="291.6" r="0.44" fill="#222" fill-opacity="1.0"/><circle cx="408.6" cy="286.9" r="0.78" fill="#222" fill-opacity="1.0"/><circle cx="409.0" cy="288.1" r="0.78" fill="#222" fill-opacity="1.0"/><circle cx="408.5" cy="288.1" r="0.73" fill="#222" fill-opacity="1.0"/><circle cx="402.4" cy="289.6" r="0.68" fill="#222" fill-opacity="1.0"/><circle cx="410.4" cy="291.3" r="0.35" fill="#222" fill-opacity="1.0"/><circle cx="409.1" cy="288.7" r="0.34" fill="#222" fill-opacity="1.0"/><circle cx="402.3" cy="288.7" r="0.58" fill="#222" fill-opacity="1.0"/><circle cx="409.0" cy="288.4" r="0.56" fill="#222" fill-opacity="1.0"/><circle cx="408.8" cy="288.6" r="0.78" fill="#222" fill-opacity="1.0"/><circle cx="409.0" cy="288.3" r="0.64" fill="#222" fill-opacity="1.0"/><circle cx="403.4" cy="289.0" r="0.40" fill="#222" fill-opacity="1.0"/><circle cx="411.9" cy="292.4" r="0.44" fill="#222" fill-opacity="1.0"/><circle cx="408.6" cy="288.6" r="0.44" fill="#222" fill-opacity="1.0"/><circle cx="409.3" cy="288.0" r="0.77" fill="#222" fill-opacity="1.0"/><circle cx="410.3" cy="292.1" r="0.69" fill="#222" fill-opacity="1.0"/><circle cx="410.7" cy="284.1" r="0.65" fill="#222" fill-opacity="1.0"/><circle cx="410.8" cy="287.9" r="0.49" fill="#222" fill-opacity="1.0"/><circle cx="408.5" cy="287.8" r="0.49" fill="#222" fill-opacity="1.0"/><circle cx="412.4" cy="289.0" r="0.62" fill="#222" fill-opacity="1.0"/><circle cx="407.5" cy="289.2" r="0.55" fill="#222" fill-opacity="1.0"/><circle cx="408.4" cy="290.1" r="0.61" fill="#222" fill-opacity="1.0"/><circle cx="409.1" cy="288.3" r="0.71" fill="#222" fill-opacity="1.0"/><circle cx="402.8" cy="290.3" r="0.72" fill="#222" fill-opacity="1.0"/><circle cx="404.0" cy="290.4" r="0.40" fill="#222" fill-opacity="1.0"/><circle cx="406.2" cy="291.9" r="0.88" fill="#222" fill-opacity="1.0"/><text x="0" y="303.15" font-size="10" text-anchor="middle" fill="#111" stroke="#111" stroke-width="0.36" font-family="Liberation Sans" transform="translate(409.00,0) scale(0.9,1)">39</text>
<text x="0" y="0" font-size="9.5" font-weight="bold" font-style="italic" text-anchor="middle" fill="#111" stroke="#111" stroke-width="1.1" font-family="Liberation Serif" transform="translate(66.19,315.85) rotate(18) scale(1.15,0.9)">Stay</text><circle cx="65.1" cy="319.0" r="0.31" fill="#111" fill-opacity="1.0"/><circle cx="72.8" cy="314.6" r="0.90" fill="#111" fill-opacity="1.0"/><circle cx="67.0" cy="317.3" r="0.33" fill="#111" fill-opacity="1.0"/><circle cx="67.4" cy="315.7" r="0.72" fill="#111" fill-opacity="1.0"/><circle cx="63.5" cy="318.9" r="0.76" fill="#111" fill-opacity="1.0"/><circle cx="65.9" cy="316.7" r="0.51" fill="#111" fill-opacity="1.0"/><circle cx="72.0" cy="316.0" r="0.41" fill="#111" fill-opacity="1.0"/><circle cx="70.7" cy="319.4" r="0.56" fill="#111" fill-opacity="1.0"/><circle cx="73.1" cy="313.3" r="0.70" fill="#111" fill-opacity="1.0"/><circle cx="67.2" cy="317.0" r="0.45" fill="#111" fill-opacity="1.0"/><circle cx="66.8" cy="311.3" r="0.48" fill="#111" fill-opacity="1.0"/><circle cx="70.5" cy="315.5" r="0.54" fill="#111" fill-opacity="1.0"/><circle cx="69.7" cy="316.2" r="0.48" fill="#111" fill-opacity="1.0"/><circle cx="63.6" cy="317.0" r="0.64" fill="#111" fill-opacity="1.0"/><circle cx="69.0" cy="312.9" r="0.36" fill="#111" fill-opacity="1.0"/><circle cx="66.4" cy="317.3" r="0.65" fill="#111" fill-opacity="1.0"/><circle cx="64.0" cy="315.6" r="0.36" fill="#111" fill-opacity="1.0"/><circle cx="67.2" cy="310.9" r="0.67" fill="#111" fill-opacity="1.0"/><circle cx="65.5" cy="310.2" r="0.32" fill="#111" fill-opacity="1.0"/><circle cx="68.7" cy="318.5" r="0.72" fill="#111" fill-opacity="1.0"/><circle cx="63.0" cy="315.1" r="0.48" fill="#111" fill-opacity="1.0"/><circle cx="67.4" cy="320.4" r="0.89" fill="#111" fill-opacity="1.0"/><circle cx="63.2" cy="315.2" r="0.38" fill="#111" fill-opacity="1.0"/><circle cx="65.2" cy="313.8" r="0.68" fill="#111" fill-opacity="1.0"/><circle cx="66.5" cy="318.7" r="0.82" fill="#111" fill-opacity="1.0"/><circle cx="65.5" cy="318.8" r="0.49" fill="#111" fill-opacity="1.0"/><circle cx="61.4" cy="315.6" r="0.60" fill="#111" fill-opacity="1.0"/><circle cx="70.8" cy="314.4" r="0.57" fill="#111" fill-opacity="1.0"/><circle cx="64.6" cy="312.2" r="0.70" fill="#111" fill-opacity="1.0"/><circle cx="67.1" cy="315.6" r="0.55" fill="#111" fill-opacity="1.0"/><circle cx="69.7" cy="316.1" r="0.66" fill="#111" fill-opacity="1.0"/><circle cx="65.0" cy="310.1" r="0.71" fill="#111" fill-opacity="1.0"/><circle cx="64.1" cy="314.1" r="0.59" fill="#111" fill-opacity="1.0"/><circle cx="66.8" cy="316.6" r="0.62" fill="#111" fill-opacity="1.0"/><circle cx="65.1" cy="313.1" r="0.74" fill="#111" fill-opacity="1.0"/><circle cx="64.1" cy="314.6" r="0.81" fill="#111" fill-opacity="1.0"/><circle cx="70.0" cy="315.5" r="0.49" fill="#111" fill-opacity="1.0"/><circle cx="65.9" cy="312.9" r="0.89" fill="#111" fill-opacity="1.0"/><circle cx="70.3" cy="317.3" r="0.58" fill="#111" fill-opacity="1.0"/><circle cx="67.1" cy="312.6" r="0.40" fill="#111" fill-opacity="1.0"/><circle cx="67.0" cy="310.2" r="0.65" fill="#111" fill-opacity="1.0"/><circle cx="70.1" cy="313.3" r="0.57" fill="#111" fill-opacity="1.0"/><circle cx="65.4" cy="315.2" r="0.80" fill="#111" fill-opacity="1.0"/><circle cx="68.4" cy="315.6" r="0.85" fill="#111" fill-opacity="1.0"/><circle cx="65.3" cy="315.7" r="0.83" fill="#111" fill-opacity="1.0"/><text x="0" y="329.45" font-size="10" text-anchor="middle" fill="#111" stroke="#111" stroke-width="0.36" font-family="Liberation Sans" transform="translate(66.19,0) scale(0.9,1)">63</text>
<ellipse cx="92.56" cy="314.65" rx="3.5" ry="0.9" transform="rotate(-25 92.56 314.65)" fill="#111"/><text x="0" y="329.45" font-size="10" text-anchor="middle" fill="#111" stroke="#111" stroke-width="0.36" font-family="Liberation Sans" transform="translate(92.56,0) scale(0.9,1)">11</text>
<text x="0" y="0" font-size="9.5" font-weight="bold" font-style="italic" text-anchor="middle" fill="#111" stroke="#111" stroke-width="1.1" font-family="Liberation Serif" transform="translate(118.93,315.85) rotate(18) scale(1.15,0.9)">Stay</text><circle cx="119.1" cy="318.9" r="0.64" fill="#111" fill-opacity="1.0"/><circle cx="115.5" cy="316.2" r="0.59" fill="#111" fill-opacity="1.0"/><circle cx="117.5" cy="314.9" r="0.37" fill="#111" fill-opacity="1.0"/><circle cx="119.8" cy="320.1" r="0.32" fill="#111" fill-opacity="1.0"/><circle cx="117.7" cy="317.9" r="0.63" fill="#111" fill-opacity="1.0"/><circle cx="114.7" cy="317.3" r="0.86" fill="#111" fill-opacity="1.0"/><circle cx="117.7" cy="314.2" r="0.83" fill="#111" fill-opacity="1.0"/><circle cx="122.4" cy="312.3" r="0.78" fill="#111" fill-opacity="1.0"/><circle cx="124.5" cy="311.5" r="0.44" fill="#111" fill-opacity="1.0"/><circle cx="121.1" cy="320.0" r="0.46" fill="#111" fill-opacity="1.0"/><circle cx="119.8" cy="316.1" r="0.76" fill="#111" fill-opacity="1.0"/><circle cx="120.1" cy="317.1" r="0.67" fill="#111" fill-opacity="1.0"/><circle cx="124.6" cy="317.6" r="0.35" fill="#111" fill-opacity="1.0"/><circle cx="121.8" cy="314.9" r="0.39" fill="#111" fill-opacity="1.0"/><circle cx="114.7" cy="316.3" r="0.59" fill="#111" fill-opacity="1.0"/><circle cx="119.2" cy="312.8" r="0.81" fill="#111" fill-opacity="1.0"/><circle cx="121.0" cy="318.3" r="0.78" fill="#111" fill-opacity="1.0"/><circle cx="119.0" cy="315.8" r="0.73" fill="#111" fill-opacity="1.0"/><circle cx="123.0" cy="316.9" r="0.51" fill="#111" fill-opacity="1.0"/><circle cx="118.0" cy="315.3" r="0.85" fill="#111" fill-opacity="1.0"/><circle cx="121.6" cy="311.5" r="0.48" fill="#111" fill-opacity="1.0"/><circle cx="117.8" cy="316.8" r="0.54" fill="#111" fill-opacity="1.0"/><circle cx="114.6" cy="315.5" r="0.36" fill="#111" fill-opacity="1.0"/><circle cx="125.3" cy="313.0" r="0.62" fill="#111" fill-opacity="1.0"/><circle cx="118.5" cy="314.8" r="0.43" fill="#111" fill-opacity="1.0"/><circle cx="121.5" cy="315.6" r="0.73" fill="#111" fill-opacity="1.0"/><circle cx="121.6" cy="319.5" r="0.77" fill="#111" fill-opacity="1.0"/><circle cx="115.6" cy="317.4" r="0.65" fill="#111" fill-opacity="1.0"/><circle cx="116.6" cy="312.3" r="0.69" fill="#111" fill-opacity="1.0"/><circle cx="123.4" cy="319.9" r="0.42" fill="#111" fill-opacity="1.0"/><circle cx="121.7" cy="316.9" r="0.79" fill="#111" fill-opacity="1.0"/><circle cx="126.1" cy="314.4" r="0.38" fill="#111" fill-opacity="1.0"/><circle cx="116.0" cy="318.4" r="0.37" fill="#111" fill-opacity="1.0"/><circle cx="116.1" cy="317.3" r="0.46" fill="#111" fill-opacity="1.0"/><circle cx="118.7" cy="318.6" r="0.38" fill="#111" fill-opacity="1.0"/><circle cx="123.1" cy="312.9" r="0.40" fill="#111" fill-opacity="1.0"/><circle cx="116.5" cy="315.2" r="0.68" fill="#111" fill-opacity="1.0"/><circle cx="123.1" cy="316.4" r="0.34" fill="#111" fill-opacity="1.0"/><circle cx="116.5" cy="313.0" r="0.78" fill="#111" fill-opacity="1.0"/><circle cx="117.1" cy="312.3" r="0.68" fill="#111" fill-opacity="1.0"/><circle cx="118.1" cy="318.7" r="0.53" fill="#111" fill-opacity="1.0"/><circle cx="116.4" cy="316.1" r="0.30" fill="#111" fill-opacity="1.0"/><circle cx="121.3" cy="319.0" r="0.37" fill="#111" fill-opacity="1.0"/><circle cx="116.1" cy="318.8" r="0.59" fill="#111" fill-opacity="1.0"/><circle cx="120.4" cy="312.3" r="0.30" fill="#111" fill-opacity="1.0"/><text x="0" y="329.45" font-size="10" text-anchor="middle" fill="#111" stroke="#111" stroke-width="0.36" font-family="Liberation Sans" transform="translate(118.93,0) scale(0.9,1)">48</text>
<circle cx="147.5" cy="312.3" r="0.55" fill="#000" fill-opacity="1.0"/><circle cx="146.9" cy="316.1" r="1.24" fill="#000" fill-opacity="1.0"/><circle cx="147.6" cy="313.7" r="0.85" fill="#000" fill-opacity="1.0"/><circle cx="140.1" cy="316.0" r="0.85" fill="#000" fill-opacity="1.0"/><circle cx="144.0" cy="317.4" r="0.45" fill="#000" fill-opacity="1.0"/><circle cx="144.2" cy="314.6" r="1.19" fill="#000" fill-opacity="1.0"/><circle cx="140.1" cy="316.5" r="0.83" fill="#000" fill-opacity="1.0"/><circle cx="144.6" cy="319.8" r="1.24" fill="#000" fill-opacity="1.0"/><circle cx="151.0" cy="314.7" r="1.22" fill="#000" fill-opacity="1.0"/><circle cx="148.6" cy="313.2" r="1.11" fill="#000" fill-opacity="1.0"/><circle cx="144.8" cy="312.5" r="0.47" fill="#000" fill-opacity="1.0"/><circle cx="143.3" cy="310.0" r="0.54" fill="#000" fill-opacity="1.0"/><circle cx="144.1" cy="311.9" r="0.81" fill="#000" fill-opacity="1.0"/><circle cx="144.1" cy="311.4" r="1.15" fill="#000" fill-opacity="1.0"/><circle cx="142.5" cy="315.9" r="1.01" fill="#000" fill-opacity="1.0"/><circle cx="146.0" cy="319.5" r="0.50" fill="#000" fill-opacity="1.0"/><circle cx="145.9" cy="313.8" r="0.59" fill="#000" fill-opacity="1.0"/><circle cx="149.4" cy="314.6" r="0.71" fill="#000" fill-opacity="1.0"/><circle cx="144.5" cy="312.7" r="1.10" fill="#000" fill-opacity="1.0"/><circle cx="144.2" cy="316.8" r="0.55" fill="#000" fill-opacity="1.0"/><circle cx="144.0" cy="314.1" r="0.93" fill="#000" fill-opacity="1.0"/><circle cx="141.5" cy="316.7" r="0.65" fill="#000" fill-opacity="1.0"/><circle cx="145.2" cy="313.9" r="1.24" fill="#000" fill-opacity="1.0"/><circle cx="147.6" cy="316.7" r="0.56" fill="#000" fill-opacity="1.0"/><circle cx="146.4" cy="313.0" r="0.58" fill="#000" fill-opacity="1.0"/><circle cx="143.7" cy="310.5" r="1.01" fill="#000" fill-opacity="1.0"/><circle cx="142.3" cy="311.9" r="1.27" fill="#000" fill-opacity="1.0"/><circle cx="145.1" cy="315.3" r="1.31" fill="#000" fill-opacity="1.0"/><circle cx="143.5" cy="311.1" r="1.23" fill="#000" fill-opacity="1.0"/><circle cx="146.9" cy="318.1" r="0.89" fill="#000" fill-opacity="1.0"/><circle cx="149.4" cy="314.2" r="0.96" fill="#000" fill-opacity="1.0"/><circle cx="148.6" cy="311.9" r="0.91" fill="#000" fill-opacity="1.0"/><circle cx="145.3" cy="312.9" r="0.95" fill="#000" fill-opacity="1.0"/><circle cx="142.0" cy="316.2" r="1.19" fill="#000" fill-opacity="1.0"/><circle cx="149.7" cy="312.8" r="1.06" fill="#000" fill-opacity="1.0"/><circle cx="148.7" cy="312.0" r="0.80" fill="#000" fill-opacity="1.0"/><circle cx="144.4" cy="314.1" r="0.59" fill="#000" fill-opacity="1.0"/><circle cx="144.1" cy="313.9" r="0.54" fill="#000" fill-opacity="1.0"/><circle cx="145.4" cy="319.0" r="1.33" fill="#000" fill-opacity="1.0"/><circle cx="145.5" cy="314.9" r="0.62" fill="#000" fill-opacity="1.0"/><circle cx="144.7" cy="314.2" r="0.64" fill="#000" fill-opacity="1.0"/><circle cx="148.5" cy="311.6" r="0.46" fill="#000" fill-opacity="1.0"/><circle cx="145.8" cy="313.8" r="0.79" fill="#000" fill-opacity="1.0"/><circle cx="142.8" cy="310.3" r="1.29" fill="#000" fill-opacity="1.0"/><text x="0" y="329.45" font-size="10" text-anchor="middle" fill="#111" stroke="#111" stroke-width="0.36" font-family="Liberation Sans" transform="translate(145.30,0) scale(0.9,1)">32</text>
<circle cx="171.67" cy="314.65" r="6.3" fill="#000"/><text x="0" y="329.45" font-size="10" text-anchor="middle" fill="#111" stroke="#111" stroke-width="0.36" font-family="Liberation Sans" transform="translate(171.67,0) scale(0.9,1)">55</text>
<circle cx="193.2" cy="319.3" r="0.27" fill="#777" fill-opacity="1.0"/><circle cx="196.9" cy="318.1" r="0.28" fill="#777" fill-opacity="1.0"/><circle cx="196.0" cy="320.2" r="0.38" fill="#777" fill-opacity="1.0"/><circle cx="203.7" cy="317.6" r="0.28" fill="#777" fill-opacity="1.0"/><circle cx="198.3" cy="313.7" r="0.44" fill="#777" fill-opacity="1.0"/><circle cx="193.7" cy="312.1" r="0.56" fill="#777" fill-opacity="1.0"/><circle cx="197.9" cy="311.6" r="0.36" fill="#777" fill-opacity="1.0"/><circle cx="202.9" cy="316.5" r="0.34" fill="#777" fill-opacity="1.0"/><circle cx="202.4" cy="317.5" r="0.48" fill="#777" fill-opacity="1.0"/><circle cx="203.0" cy="317.4" r="0.45" fill="#777" fill-opacity="1.0"/><circle cx="202.7" cy="317.9" r="0.23" fill="#777" fill-opacity="1.0"/><circle cx="204.3" cy="315.4" r="0.53" fill="#777" fill-opacity="1.0"/><circle cx="190.9" cy="314.7" r="0.42" fill="#777" fill-opacity="1.0"/><circle cx="201.1" cy="312.1" r="0.36" fill="#777" fill-opacity="1.0"/><circle cx="202.5" cy="312.7" r="0.37" fill="#777" fill-opacity="1.0"/><circle cx="202.5" cy="311.0" r="0.49" fill="#777" fill-opacity="1.0"/><circle cx="193.5" cy="319.6" r="0.40" fill="#777" fill-opacity="1.0"/><circle cx="200.1" cy="318.8" r="0.41" fill="#777" fill-opacity="1.0"/><circle cx="199.2" cy="315.8" r="0.42" fill="#777" fill-opacity="1.0"/><circle cx="196.9" cy="313.9" r="0.39" fill="#777" fill-opacity="1.0"/><circle cx="193.8" cy="318.4" r="0.45" fill="#777" fill-opacity="1.0"/><circle cx="202.7" cy="315.9" r="0.21" fill="#777" fill-opacity="1.0"/><circle cx="200.4" cy="315.6" r="0.53" fill="#777" fill-opacity="1.0"/><circle cx="199.3" cy="310.0" r="0.31" fill="#777" fill-opacity="1.0"/><circle cx="198.1" cy="313.4" r="0.38" fill="#777" fill-opacity="1.0"/><circle cx="198.8" cy="315.1" r="0.55" fill="#777" fill-opacity="1.0"/><circle cx="197.4" cy="315.8" r="0.35" fill="#777" fill-opacity="1.0"/><circle cx="202.7" cy="312.0" r="0.22" fill="#777" fill-opacity="1.0"/><circle cx="191.7" cy="317.6" r="0.34" fill="#777" fill-opacity="1.0"/><circle cx="193.1" cy="316.2" r="0.54" fill="#777" fill-opacity="1.0"/><circle cx="199.6" cy="312.2" r="0.43" fill="#777" fill-opacity="1.0"/><circle cx="195.5" cy="314.1" r="0.23" fill="#777" fill-opacity="1.0"/><circle cx="198.3" cy="316.7" r="0.31" fill="#777" fill-opacity="1.0"/><circle cx="198.7" cy="312.9" r="0.39" fill="#777" fill-opacity="1.0"/><circle cx="204.5" cy="314.6" r="0.36" fill="#777" fill-opacity="1.0"/><circle cx="202.8" cy="314.8" r="0.46" fill="#777" fill-opacity="1.0"/><circle cx="193.4" cy="311.1" r="0.35" fill="#777" fill-opacity="1.0"/><circle cx="192.4" cy="314.8" r="0.27" fill="#777" fill-opacity="1.0"/><circle cx="193.2" cy="317.5" r="0.36" fill="#777" fill-opacity="1.0"/><circle cx="196.4" cy="314.9" r="0.54" fill="#777" fill-opacity="1.0"/><circle cx="196.2" cy="319.7" r="0.38" fill="#777" fill-opacity="1.0"/><circle cx="198.5" cy="309.5" r="0.38" fill="#777" fill-opacity="1.0"/><circle cx="204.3" cy="312.6" r="0.45" fill="#777" fill-opacity="1.0"/><circle cx="196.4" cy="313.3" r="0.22" fill="#777" fill-opacity="1.0"/><circle cx="199.8" cy="312.7" r="0.36" fill="#777" fill-opacity="1.0"/><circle cx="194.8" cy="315.2" r="0.53" fill="#777" fill-opacity="1.0"/><circle cx="196.8" cy="313.3" r="0.54" fill="#777" fill-opacity="1.0"/><circle cx="202.9" cy="318.1" r="0.22" fill="#777" fill-opacity="1.0"/><circle cx="204.2" cy="314.0" r="0.40" fill="#777" fill-opacity="1.0"/><circle cx="192.4" cy="318.1" r="0.28" fill="#777" fill-opacity="1.0"/><circle cx="196.2" cy="313.6" r="0.24" fill="#777" fill-opacity="1.0"/><circle cx="200.0" cy="315.7" r="0.19" fill="#777" fill-opacity="1.0"/><circle cx="196.9" cy="316.1" r="0.35" fill="#777" fill-opacity="1.0"/><circle cx="194.9" cy="310.1" r="0.33" fill="#777" fill-opacity="1.0"/><circle cx="194.1" cy="314.4" r="0.43" fill="#777" fill-opacity="1.0"/><circle cx="201.3" cy="317.8" r="0.38" fill="#777" fill-opacity="1.0"/><circle cx="198.4" cy="319.0" r="0.44" fill="#777" fill-opacity="1.0"/><circle cx="198.2" cy="319.2" r="0.37" fill="#777" fill-opacity="1.0"/><circle cx="193.1" cy="312.4" r="0.56" fill="#777" fill-opacity="1.0"/><circle cx="193.7" cy="315.3" r="0.20" fill="#777" fill-opacity="1.0"/><circle cx="197.3" cy="309.6" r="0.24" fill="#777" fill-opacity="1.0"/><circle cx="200.8" cy="316.4" r="0.31" fill="#777" fill-opacity="1.0"/><circle cx="199.5" cy="313.3" r="0.55" fill="#777" fill-opacity="1.0"/><circle cx="196.9" cy="317.9" r="0.56" fill="#777" fill-opacity="1.0"/><circle cx="203.2" cy="312.0" r="0.33" fill="#777" fill-opacity="1.0"/><circle cx="195.4" cy="318.5" r="0.44" fill="#777" fill-opacity="1.0"/><circle cx="195.1" cy="310.9" r="0.24" fill="#777" fill-opacity="1.0"/><circle cx="200.5" cy="311.7" r="0.54" fill="#777" fill-opacity="1.0"/><circle cx="202.8" cy="316.4" r="0.22" fill="#777" fill-opacity="1.0"/><circle cx="203.8" cy="316.0" r="0.21" fill="#777" fill-opacity="1.0"/><circle cx="197.6" cy="312.8" r="0.36" fill="#777" fill-opacity="1.0"/><circle cx="195.1" cy="309.9" r="0.28" fill="#777" fill-opacity="1.0"/><circle cx="193.5" cy="317.4" r="0.37" fill="#777" fill-opacity="1.0"/><circle cx="193.9" cy="311.2" r="0.42" fill="#777" fill-opacity="1.0"/><circle cx="196.5" cy="314.4" r="0.45" fill="#777" fill-opacity="1.0"/><circle cx="194.1" cy="312.4" r="0.48" fill="#777" fill-opacity="1.0"/><circle cx="195.1" cy="318.0" r="0.47" fill="#777" fill-opacity="1.0"/><circle cx="205.1" cy="316.2" r="0.54" fill="#777" fill-opacity="1.0"/><circle cx="200.3" cy="309.7" r="0.28" fill="#777" fill-opacity="1.0"/><circle cx="201.8" cy="309.9" r="0.42" fill="#777" fill-opacity="1.0"/><circle cx="192.6" cy="310.4" r="0.51" fill="#777" fill-opacity="1.0"/><circle cx="204.9" cy="313.6" r="0.24" fill="#777" fill-opacity="1.0"/><circle cx="203.9" cy="315.8" r="0.55" fill="#777" fill-opacity="1.0"/><circle cx="196.9" cy="313.2" r="0.56" fill="#777" fill-opacity="1.0"/><circle cx="195.5" cy="319.5" r="0.28" fill="#777" fill-opacity="1.0"/><circle cx="202.9" cy="317.9" r="0.37" fill="#777" fill-opacity="1.0"/><circle cx="196.0" cy="310.3" r="0.35" fill="#777" fill-opacity="1.0"/><circle cx="195.4" cy="314.1" r="0.50" fill="#777" fill-opacity="1.0"/><circle cx="196.4" cy="317.3" r="0.53" fill="#777" fill-opacity="1.0"/><circle cx="195.3" cy="316.5" r="0.50" fill="#777" fill-opacity="1.0"/><circle cx="192.7" cy="310.5" r="0.25" fill="#777" fill-opacity="1.0"/><circle cx="199.5" cy="311.4" r="0.32" fill="#777" fill-opacity="1.0"/><circle cx="195.5" cy="314.1" r="0.48" fill="#777" fill-opacity="1.0"/><circle cx="197.5" cy="315.0" r="0.53" fill="#777" fill-opacity="1.0"/><circle cx="200.4" cy="318.7" r="0.31" fill="#777" fill-opacity="1.0"/><circle cx="197.7" cy="313.9" r="0.31" fill="#777" fill-opacity="1.0"/><circle cx="198.3" cy="318.3" r="0.37" fill="#777" fill-opacity="1.0"/><circle cx="198.2" cy="310.2" r="0.31" fill="#777" fill-opacity="1.0"/><circle cx="192.5" cy="315.5" r="0.36" fill="#777" fill-opacity="1.0"/><circle cx="194.3" cy="312.9" r="0.38" fill="#777" fill-opacity="1.0"/><circle cx="192.8" cy="317.5" r="0.57" fill="#777" fill-opacity="1.0"/><circle cx="196.5" cy="317.6" r="0.31" fill="#777" fill-opacity="1.0"/><circle cx="196.6" cy="316.1" r="0.50" fill="#777" fill-opacity="1.0"/><circle cx="200.0" cy="314.0" r="0.19" fill="#777" fill-opacity="1.0"/><circle cx="198.7" cy="313.5" r="0.37" fill="#777" fill-opacity="1.0"/><circle cx="197.4" cy="316.2" r="0.27" fill="#777" fill-opacity="1.0"/><circle cx="201.5" cy="313.9" r="0.54" fill="#777" fill-opacity="1.0"/><circle cx="202.2" cy="310.1" r="0.21" fill="#777" fill-opacity="1.0"/><circle cx="196.2" cy="310.3" r="0.57" fill="#777" fill-opacity="1.0"/><circle cx="200.6" cy="320.6" r="0.38" fill="#777" fill-opacity="1.0"/><text x="0" y="329.45" font-size="10" text-anchor="middle" fill="#111" stroke="#111" stroke-width="0.36" font-family="Liberation Sans" transform="translate(198.03,0) scale(0.9,1)">100</text>
<ellipse cx="224.41" cy="314.65" rx="2.6" ry="4.6" fill="#aaa" fill-opacity="0.55" filter="url(#fblur)"/><path d="M223.41 311.65 q2 1 0 3 q-1 2 1 3" stroke="#888" stroke-opacity="0.5" stroke-width="0.8" fill="none"/><text x="0" y="329.45" font-size="10" text-anchor="middle" fill="#111" stroke="#111" stroke-width="0.36" font-family="Liberation Sans" transform="translate(224.41,0) scale(0.9,1)">330</text>
<ellipse cx="250.78" cy="314.65" rx="2.6" ry="4.6" fill="#aaa" fill-opacity="0.55" filter="url(#fblur)"/><path d="M249.78 311.65 q2 1 0 3 q-1 2 1 3" stroke="#888" stroke-opacity="0.5" stroke-width="0.8" fill="none"/><text x="0" y="329.45" font-size="10" text-anchor="middle" fill="#111" stroke="#111" stroke-width="0.36" font-family="Liberation Sans" transform="translate(250.78,0) scale(0.9,1)">91</text>
<ellipse cx="277.15" cy="314.65" rx="2.6" ry="4.6" fill="#aaa" fill-opacity="0.55" filter="url(#fblur)"/><path d="M276.15 311.65 q2 1 0 3 q-1 2 1 3" stroke="#888" stroke-opacity="0.5" stroke-width="0.8" fill="none"/><text x="0" y="329.45" font-size="10" text-anchor="middle" fill="#111" stroke="#111" stroke-width="0.36" font-family="Liberation Sans" transform="translate(277.15,0) scale(0.9,1)">180</text>
<ellipse cx="304.52" cy="313.65" rx="2" ry="5" transform="rotate(-35 304.52 313.65)" fill="#bbb" fill-opacity="0.4" filter="url(#fblur)"/><text x="0" y="329.45" font-size="10" text-anchor="middle" fill="#111" stroke="#111" stroke-width="0.36" font-family="Liberation Sans" transform="translate(303.52,0) scale(0.9,1)">200</text>
<ellipse cx="330.88" cy="313.65" rx="2" ry="5" transform="rotate(-35 330.88 313.65)" fill="#bbb" fill-opacity="0.4" filter="url(#fblur)"/><text x="0" y="329.45" font-size="10" text-anchor="middle" fill="#111" stroke="#111" stroke-width="0.36" font-family="Liberation Sans" transform="translate(329.88,0) scale(0.9,1)">200</text>
<ellipse cx="357.25" cy="313.65" rx="2" ry="5" transform="rotate(-35 357.25 313.65)" fill="#bbb" fill-opacity="0.4" filter="url(#fblur)"/><text x="0" y="329.45" font-size="10" text-anchor="middle" fill="#111" stroke="#111" stroke-width="0.36" font-family="Liberation Sans" transform="translate(356.25,0) scale(0.9,1)">100</text>
<text x="382.62" y="315.25" font-size="5.6" font-weight="bold" text-anchor="middle" fill="#555" font-family="Liberation Sans" textLength="25.5" lengthAdjust="spacingAndGlyphs">DIRT2.COM</text><text x="0" y="329.45" font-size="10" text-anchor="middle" fill="#111" stroke="#111" stroke-width="0.36" font-family="Liberation Sans" transform="translate(382.62,0) scale(0.9,1)">56</text>
<ellipse cx="409.00" cy="314.65" rx="2.6" ry="4.6" fill="#aaa" fill-opacity="0.55" filter="url(#fblur)"/><path d="M408.00 311.65 q2 1 0 3 q-1 2 1 3" stroke="#888" stroke-opacity="0.5" stroke-width="0.8" fill="none"/><text x="0" y="329.45" font-size="10" text-anchor="middle" fill="#111" stroke="#111" stroke-width="0.36" font-family="Liberation Sans" transform="translate(409.00,0) scale(0.9,1)">330</text>
<ellipse cx="66.19" cy="340.95" rx="2.6" ry="4.6" fill="#aaa" fill-opacity="0.55" filter="url(#fblur)"/><path d="M65.19 337.95 q2 1 0 3 q-1 2 1 3" stroke="#888" stroke-opacity="0.5" stroke-width="0.8" fill="none"/><text x="0" y="355.75" font-size="10" text-anchor="middle" fill="#111" stroke="#111" stroke-width="0.36" font-family="Liberation Sans" transform="translate(66.19,0) scale(0.9,1)">91</text>
<ellipse cx="92.56" cy="340.95" rx="2.6" ry="4.6" fill="#aaa" fill-opacity="0.55" filter="url(#fblur)"/><path d="M91.56 337.95 q2 1 0 3 q-1 2 1 3" stroke="#888" stroke-opacity="0.5" stroke-width="0.8" fill="none"/><text x="0" y="355.75" font-size="10" text-anchor="middle" fill="#111" stroke="#111" stroke-width="0.36" font-family="Liberation Sans" transform="translate(92.56,0) scale(0.9,1)">180</text>
<ellipse cx="119.93" cy="339.95" rx="2" ry="5" transform="rotate(-35 119.93 339.95)" fill="#bbb" fill-opacity="0.4" filter="url(#fblur)"/><text x="0" y="355.75" font-size="10" text-anchor="middle" fill="#111" stroke="#111" stroke-width="0.36" font-family="Liberation Sans" transform="translate(118.93,0) scale(0.9,1)">200</text>
<ellipse cx="146.30" cy="339.95" rx="2" ry="5" transform="rotate(-35 146.30 339.95)" fill="#bbb" fill-opacity="0.4" filter="url(#fblur)"/><text x="0" y="355.75" font-size="10" text-anchor="middle" fill="#111" stroke="#111" stroke-width="0.36" font-family="Liberation Sans" transform="translate(145.30,0) scale(0.9,1)">200</text>
<ellipse cx="172.67" cy="339.95" rx="2" ry="5" transform="rotate(-35 172.67 339.95)" fill="#bbb" fill-opacity="0.4" filter="url(#fblur)"/><text x="0" y="355.75" font-size="10" text-anchor="middle" fill="#111" stroke="#111" stroke-width="0.36" font-family="Liberation Sans" transform="translate(171.67,0) scale(0.9,1)">100</text>
<text x="198.03" y="341.55" font-size="5.6" font-weight="bold" text-anchor="middle" fill="#555" font-family="Liberation Sans" textLength="25.5" lengthAdjust="spacingAndGlyphs">DIRT2.COM</text><text x="0" y="355.75" font-size="10" text-anchor="middle" fill="#111" stroke="#111" stroke-width="0.36" font-family="Liberation Sans" transform="translate(198.03,0) scale(0.9,1)">56</text>
<g transform="translate(223.91,340.45) rotate(-15) scale(1.05)"><path d="M0,-6 L1.3,-3 L3.8,-4.3 L3.2,-1.4 L6.2,-1.6 L4.6,0.9 L5.8,2.7 L2.2,2.4 L1.1,4.8 L0,3.4 L-1.1,4.8 L-2.2,2.4 L-5.8,2.7 L-4.6,0.9 L-6.2,-1.6 L-3.2,-1.4 L-3.8,-4.3 L-1.3,-3 Z" fill="#262626"/><path d="M1 4 L4.5 6" stroke="#555" stroke-width="0.6"/></g><text x="0" y="355.75" font-size="10" text-anchor="middle" fill="#111" stroke="#111" stroke-width="0.36" font-family="Liberation Sans" transform="translate(224.41,0) scale(0.9,1)">852</text>
<g transform="translate(250.28,339.45) scale(0.85)"><path d="M0,-6 L1.3,-3 L3.8,-4.3 L3.2,-1.4 L6.2,-1.6 L4.6,0.9 L5.8,2.7 L2.2,2.4 L1.1,4.8 L0,3.4 L-1.1,4.8 L-2.2,2.4 L-5.8,2.7 L-4.6,0.9 L-6.2,-1.6 L-3.2,-1.4 L-3.8,-4.3 L-1.3,-3 Z" fill="#6a6a6a"/><path d="M0 4 V8" stroke="#bbb" stroke-width="0.5"/></g><text x="0" y="355.75" font-size="10" text-anchor="middle" fill="#111" stroke="#111" stroke-width="0.36" font-family="Liberation Sans" transform="translate(250.78,0) scale(0.9,1)">1496</text>
<g transform="translate(277.65,339.95)"><path d="M-4.5,4 C-5.5,-1 -1.5,-4.5 4.5,-5 C4.8,-1 2.5,3.5 -4.5,4Z" fill="#555"/><path d="M-4.5 4 L-6.5 6.5" stroke="#777" stroke-width="0.6"/></g><text x="0" y="355.75" font-size="10" text-anchor="middle" fill="#111" stroke="#111" stroke-width="0.36" font-family="Liberation Sans" transform="translate(277.15,0) scale(0.9,1)">1296</text>
<g transform="translate(303.52,344.95)"><ellipse cx="0" cy="-2.5" rx="0.9" ry="2.5" fill="#4a4a4a" transform="rotate(-70)"/><ellipse cx="0" cy="-3.5" rx="0.9" ry="3.5" fill="#4a4a4a" transform="rotate(-40)"/><ellipse cx="0" cy="-4.2" rx="0.9" ry="4.2" fill="#4a4a4a" transform="rotate(-15)"/><ellipse cx="0" cy="-4.5" rx="0.9" ry="4.5" fill="#4a4a4a" transform="rotate(0)"/><ellipse cx="0" cy="-4.2" rx="0.9" ry="4.2" fill="#4a4a4a" transform="rotate(15)"/><ellipse cx="0" cy="-3.5" rx="0.9" ry="3.5" fill="#4a4a4a" transform="rotate(40)"/><ellipse cx="0" cy="-2.5" rx="0.9" ry="2.5" fill="#4a4a4a" transform="rotate(70)"/></g><text x="0" y="355.75" font-size="10" text-anchor="middle" fill="#111" stroke="#111" stroke-width="0.36" font-family="Liberation Sans" transform="translate(303.52,0) scale(0.9,1)">1509</text>
<g transform="translate(329.88,340.45)"><path d="M-5,-6.5 C-2,-8 2,-7.5 3,-5 C5,-4 7,-2 6.5,1 C7,4 4,6.5 0.5,6.5 C-3,7 -7,5 -6.5,1.5 C-7.5,-1 -6.5,-4 -5,-6.5Z" fill="#4e4e4e"/><path d="M-4 -4 L3 4 M-5 1 L5 -2" stroke="#777" stroke-width="0.5"/></g><text x="0" y="355.75" font-size="10" text-anchor="middle" fill="#111" stroke="#111" stroke-width="0.36" font-family="Liberation Sans" transform="translate(329.88,0) scale(0.9,1)">1488</text>
<g transform="translate(356.25,340.45) rotate(10) scale(0.95)"><path d="M0,-6 L1.3,-3 L3.8,-4.3 L3.2,-1.4 L6.2,-1.6 L4.6,0.9 L5.8,2.7 L2.2,2.4 L1.1,4.8 L0,3.4 L-1.1,4.8 L-2.2,2.4 L-5.8,2.7 L-4.6,0.9 L-6.2,-1.6 L-3.2,-1.4 L-3.8,-4.3 L-1.3,-3 Z" fill="#9c9c9c"/></g><text x="0" y="355.75" font-size="10" text-anchor="middle" fill="#111" stroke="#111" stroke-width="0.36" font-family="Liberation Sans" transform="translate(356.25,0) scale(0.9,1)">1082</text>
</svg>
<div class="abs" style="left:602px;top:30px;width:188px;height:226px;background:#1e1e1e;border-radius:3px;"></div>
<div class="abs" style="left:603px;top:31px;width:186px;height:11px;background:#383838;border-radius:2px 2px 0 0;"></div>
<svg class="abs" style="left:606px;top:32px" width="8" height="8" viewBox="0 0 8 8"><path d="M1.4 1.9 L6.2 6.6 M6.2 1.9 L1.4 6.6" stroke="#e0e0e0" stroke-width="1.15"/></svg>
<svg class="abs" style="left:778px;top:33px" width="9" height="7" viewBox="0 0 9 7"><path d="M4 0.5 L0.8 3.5 L4 6.5Z M8 0.5 L4.8 3.5 L8 6.5Z" fill="#d8d8d8"/></svg>
<div class="abs" style="left:603px;top:42px;width:186px;height:14px;background:#3e3e3e;border-top:1px solid #343434;box-sizing:border-box;"></div>
<div class="abs" style="left:603px;top:42px;width:75.5px;height:14px;background:#535353;"></div>
<div class="t" style="left:609px;top:41.5px;font-size:8.7px;line-height:14px;font-weight:bold;color:#f0f0f0;">Pinselvorgaben</div>
<svg class="abs" style="left:775px;top:45px" width="12" height="8" viewBox="0 0 12 8"><path d="M0.5 2.5 L4 2.5 L2.25 4.5Z" fill="#ddd"/><rect x="5" y="0.5" width="6.5" height="1.6" fill="#777"/><rect x="5" y="3" width="6.5" height="1.6" fill="#777"/><rect x="5" y="5.5" width="6.5" height="1.6" fill="#777"/></svg>
<div class="abs" style="left:603px;top:56px;width:186px;height:38px;background:#535353;"></div>
<div class="t" style="left:607px;top:60.5px;font-size:9.3px;line-height:12px;letter-spacing:-0.25px;color:#b3b3b3;-webkit-text-stroke:0.2px #b3b3b3;">Größe:</div>
<svg class="abs" style="left:670px;top:56px" width="22" height="20" viewBox="670 56 22 20"><path d="M677.5 66 A3.6 3.6 0 1 1 683.3 68.9" stroke="#c6c6c6" stroke-width="1.3" fill="none"/><path d="M674.9 66.2 L680.1 66.2 L677.5 69Z" fill="#c6c6c6"/><path d="M675.2 71.6 H685.6" stroke="#c6c6c6" stroke-width="1"/></svg>
<div class="abs" style="left:694px;top:58.5px;width:60px;height:15px;background:#4a4a4a;box-sizing:border-box;border:1px solid #474747;"></div>
<svg class="abs" style="left:762px;top:65px" width="20" height="20" viewBox="762 65 20 20"><path d="M764.8 67.2 H770 L771.5 69.2 H779.1 V82 H764.8Z" fill="#d9d9d9" stroke="#262626" stroke-width="0.6"/><rect x="765.5" y="69.8" width="13" height="11.6" fill="#e6e6e6"/><path d="M765.5 80.5 H778.5" stroke="#f4f4f4" stroke-width="1"/><ellipse cx="768.7" cy="74.2" rx="1.1" ry="1.6" transform="rotate(-30 768.7 74.2)" fill="#1e1e1e"/><ellipse cx="771.8" cy="73.6" rx="0.8" ry="1.5" fill="#1e1e1e"/><ellipse cx="775.2" cy="74.2" rx="1.1" ry="1.5" transform="rotate(30 775.2 74.2)" fill="#1e1e1e"/><path d="M769.3 76.2 L771.8 77.5 L774.5 76.2" stroke="#333" stroke-width="0.7" fill="none"/><path d="M769.8 77.5 Q769.8 80 771.8 80 Q773.8 80 773.8 77.5" stroke="#222" stroke-width="1" fill="#fff"/></svg>
<div class="abs" style="left:609px;top:80.5px;width:138px;height:6px;box-sizing:border-box;border-radius:3px;background:#2c2c2c;border:1px solid #3a3a3a;box-shadow:0 1px 0 #6a6a6a;"></div>
<div class="abs" style="left:603px;top:93px;width:186px;height:1px;background:#3c3c3c;"></div>
<div class="abs" style="left:603px;top:94px;width:186px;height:27.5px;background:#4f4f4f;border-top:1px solid #3d3d3d;box-sizing:border-box;"></div>
<div class="abs" style="left:630.5px;top:95px;width:1px;height:26px;background:#484848;"></div>
<div class="abs" style="left:656.7px;top:95px;width:1px;height:26px;background:#484848;"></div>
<div class="abs" style="left:683px;top:95px;width:1px;height:26px;background:#484848;"></div>
<div class="abs" style="left:709.2px;top:95px;width:1px;height:26px;background:#484848;"></div>
<div class="abs" style="left:735.2px;top:95px;width:1px;height:26px;background:#484848;"></div>
<svg class="abs" style="left:0;top:0" width="1024" height="654"><defs><filter id="pb0" x="-50%" y="-50%" width="200%" height="200%"><feGaussianBlur stdDeviation="0.5"/></filter><filter id="pb1" x="-50%" y="-50%" width="200%" height="200%"><feGaussianBlur stdDeviation="0.4"/></filter><filter id="pb2" x="-50%" y="-50%" width="200%" height="200%"><feGaussianBlur stdDeviation="1.2"/></filter><filter id="pb3" x="-50%" y="-50%" width="200%" height="200%"><feGaussianBlur stdDeviation="1.6"/></filter><filter id="pb4" x="-50%" y="-50%" width="200%" height="200%"><feGaussianBlur stdDeviation="2.0"/></filter></defs><circle cx="616.7" cy="101.5" r="6.3" fill="#7a7a7a" filter="url(#pb0)"/><circle cx="642.9" cy="101.5" r="4.3" fill="#7a7a7a" filter="url(#pb1)"/><circle cx="669.5" cy="101.6" r="3.6" fill="#7a7a7a" filter="url(#pb2)"/><circle cx="695.8" cy="101.5" r="5.2" fill="#7a7a7a" filter="url(#pb3)"/><circle cx="722" cy="101.7" r="4.6" fill="#7a7a7a" filter="url(#pb4)"/><text x="616.7" y="118" font-size="9.5" text-anchor="middle" fill="#909090" stroke="#909090" stroke-width="0.25" font-family="Liberation Sans">72</text><text x="642.9" y="118" font-size="9.5" text-anchor="middle" fill="#909090" stroke="#909090" stroke-width="0.25" font-family="Liberation Sans">13</text><text x="669.5" y="118" font-size="9.5" text-anchor="middle" fill="#909090" stroke="#909090" stroke-width="0.25" font-family="Liberation Sans">13</text><text x="695.8" y="118" font-size="9.5" text-anchor="middle" fill="#909090" stroke="#909090" stroke-width="0.25" font-family="Liberation Sans">62</text><text x="722" y="118" font-size="9.5" text-anchor="middle" fill="#909090" stroke="#909090" stroke-width="0.25" font-family="Liberation Sans">21</text></svg>
<div class="abs" style="left:603px;top:120.5px;width:186px;height:1px;background:#666;"></div><div class="abs" style="left:603px;top:121.5px;width:186px;height:1.5px;background:#3a3a3a;"></div>
<div class="abs" style="left:603px;top:123px;width:186px;height:107px;background:#535353;"></div>
<div class="abs" style="left:604px;top:123.5px;width:171px;height:106px;background:#4e4e4e;"></div>
<div class="abs" style="left:775px;top:123px;width:10px;height:107px;background:#414141;"></div>
<div class="abs" style="left:778.2px;top:126.8px;width:8px;height:15px;background:#7a7a7a;border:1px solid #8e8e8e;box-sizing:border-box;border-radius:4px;"></div>
<svg class="abs" style="left:0;top:0" width="1024" height="654"><defs><filter id="blr" x="-20%" y="-80%" width="140%" height="260%"><feGaussianBlur stdDeviation="2.0"/></filter><filter id="blr2" x="-20%" y="-50%" width="140%" height="200%"><feGaussianBlur stdDeviation="1.0"/></filter><filter id="blrc" x="-50%" y="-50%" width="200%" height="200%"><feGaussianBlur stdDeviation="3"/></filter><radialGradient id="softc"><stop offset="0" stop-color="#7a7a7a" stop-opacity="0.9"/><stop offset="0.45" stop-color="#707070" stop-opacity="0.55"/><stop offset="1" stop-color="#4e4e4e" stop-opacity="0"/></radialGradient></defs><circle cx="616.6" cy="136.3" r="11.5" fill="url(#softc)"/><circle cx="616.6" cy="163.5" r="11.4" fill="#7c7c7c"/><circle cx="616.6" cy="189.8" r="11.5" fill="url(#softc)"/><circle cx="616.6" cy="216" r="11.4" fill="#7c7c7c"/><path d="M640 137 C 652 132, 664 131.5, 678 133.5 C 695 136, 708 142, 722 141 C 735 140, 742 137.5, 747 137" stroke="#7c7c7c" stroke-width="10" stroke-linecap="round" fill="none" filter="url(#blr)"/><path d="M639.5 163 C 650 159, 660 158, 672 159.5 C 690 161.5, 705 167, 722 166.5 C 735 166, 743 164.5, 749.5 164" stroke="#7c7c7c" stroke-width="15" stroke-linecap="round" fill="none"/><path d="M641 189 C 655 184, 672 181, 688 183 C 702 185, 715 190, 728 191 C 738 191.5, 745 191, 750 190.5 C 738 194, 722 198, 708 196.5 C 695 195, 680 191, 665 190 C 655 189.5, 648 189, 641 189Z" fill="#7c7c7c" filter="url(#blr2)"/><path d="M640.5 215.3 C 655 210, 670 207, 686 208 C 700 209, 712 214, 725 215.5 C 737 216.5, 745 216.3, 751 216 C 738 220, 722 224, 706 223 C 692 222, 678 217.5, 662 216.5 C 652 216, 646 215.6, 640.5 215.3Z" fill="#7c7c7c"/></svg>
<div class="abs" style="left:603px;top:229px;width:186px;height:1.5px;background:#3a3a3a;"></div>
<div class="abs" style="left:603px;top:230.5px;width:186px;height:1.3px;background:#6a6a6a;"></div>
<div class="abs" style="left:603px;top:231.8px;width:186px;height:1px;background:#3c3c3c;"></div>
<div class="abs" style="left:603px;top:232.8px;width:186px;height:15px;background:#545454;"></div>
<div class="abs" style="left:603px;top:247.8px;width:186px;height:1px;background:#3a3a3a;"></div>
<div class="abs" style="left:603px;top:248.8px;width:186px;height:1px;background:#666;"></div>
<div class="abs" style="left:603px;top:249.8px;width:186px;height:5px;background:#505050;"></div>
<div class="abs" style="left:687.6px;top:250.3px;width:16.5px;height:2.3px;background:#3a3a3a;"></div>
<svg class="abs" style="left:0;top:0" width="1024" height="654"><ellipse cx="682.3" cy="239.7" rx="3.6" ry="2.2" fill="none" stroke="#9a9a9a" stroke-width="1.1"/><path d="M693.2 237.3 L686.5 243.5" stroke="#9a9a9a" stroke-width="1.4"/><path d="M685.2 245.2 L687.8 242.2 L686 241.6Z" fill="#9a9a9a"/><rect x="705.2" y="235.6" width="10" height="9.4" fill="#e6e6e6"/><rect x="705.2" y="235.6" width="10" height="1" fill="#333"/><rect x="707.2" y="237.5" width="2.5" height="2.5" fill="#222"/><rect x="710.5" y="237.5" width="3" height="2" fill="#444"/><rect x="707.2" y="240.8" width="3" height="2.5" fill="#555"/><rect x="711" y="240.5" width="2.5" height="3" fill="#111"/><path d="M732 236.2 H741 V245.6 H735.5 V239.5 H732Z" fill="#8c8c8c"/><path d="M732 240.5 H734.5 V245.6 Z" fill="#8c8c8c"/><rect x="758.5" y="235.6" width="3" height="1.2" fill="#7c7c7c"/><rect x="755.5" y="237" width="9.5" height="1.5" fill="#7c7c7c"/><path d="M756.5 239 H764 L763.3 245.6 H757.2Z" fill="#7c7c7c"/><path d="M758.8 240 V244.5 M761.7 240 V244.5" stroke="#5a5a5a" stroke-width="0.6"/><path d="M784.5 242 L784.5 245.6 L781 245.6Z" fill="#2a2a2a"/></svg>
<div class="abs" style="left:787px;top:47.2px;width:212.5px;height:578.8px;background:#0a0a0a;border-radius:5px;"></div>
<div class="abs" style="left:785px;top:48.5px;width:213.5px;height:576.5px;background:#f2f2f2;border-radius:4px;box-sizing:border-box;border:1px solid #fcfcfc;"></div>
<div class="t" style="left:802.8px;top:52.20px;font-size:12.4px;line-height:15.6px;color:#9c9c9c;-webkit-text-stroke:0.25px #9c9c9c;">Neue Pinselvorgabe<span style="letter-spacing:0.6px">...</span></div>
<div class="abs" style="left:786.5px;top:72.20px;width:210.5px;height:1px;background:#e0e0e0;"></div>
<div class="t" style="left:802.8px;top:77.87px;font-size:12.4px;line-height:15.6px;color:#9c9c9c;-webkit-text-stroke:0.25px #9c9c9c;">Pinsel umbenennen<span style="letter-spacing:0.6px">...</span></div>
<div class="t" style="left:802.8px;top:93.50px;font-size:12.4px;line-height:15.6px;color:#9c9c9c;-webkit-text-stroke:0.25px #9c9c9c;">Pinsel löschen</div>
<div class="abs" style="left:786.5px;top:113.50px;width:210.5px;height:1px;background:#e0e0e0;"></div>
<div class="t" style="left:802.8px;top:119.17px;font-size:12.4px;line-height:15.6px;color:#0d0d0d;-webkit-text-stroke:0.25px #0d0d0d;">Nur Text</div>
<div class="t" style="left:802.8px;top:134.80px;font-size:12.4px;line-height:15.6px;color:#0d0d0d;-webkit-text-stroke:0.25px #0d0d0d;">Kleine Miniatur</div>
<div class="t" style="left:802.8px;top:150.43px;font-size:12.4px;line-height:15.6px;color:#0d0d0d;-webkit-text-stroke:0.25px #0d0d0d;">Große Miniatur</div>
<div class="t" style="left:802.8px;top:166.06px;font-size:12.4px;line-height:15.6px;color:#0d0d0d;-webkit-text-stroke:0.25px #0d0d0d;">Kleine Liste</div>
<div class="t" style="left:802.8px;top:181.69px;font-size:12.4px;line-height:15.6px;color:#0d0d0d;-webkit-text-stroke:0.25px #0d0d0d;">Große Liste</div>
<div class="t" style="left:802.8px;top:197.32px;font-size:12.4px;line-height:15.6px;color:#0d0d0d;-webkit-text-stroke:0.25px #0d0d0d;">Miniatur und Pinselstrich</div>
<svg class="abs" style="left:789px;top:199.22px" width="11" height="10" viewBox="0 0 11 10"><path d="M1 5 L3.8 8.6 L9.8 0.8" stroke="#222" stroke-width="1.5" fill="none"/></svg>
<div class="abs" style="left:786.5px;top:217.32px;width:210.5px;height:1px;background:#e0e0e0;"></div>
<div class="t" style="left:802.8px;top:222.99px;font-size:12.4px;line-height:15.6px;color:#0d0d0d;-webkit-text-stroke:0.25px #0d0d0d;">Letzte Pinsel anzeigen</div>
<svg class="abs" style="left:789px;top:224.89px" width="11" height="10" viewBox="0 0 11 10"><path d="M1 5 L3.8 8.6 L9.8 0.8" stroke="#222" stroke-width="1.5" fill="none"/></svg>
<div class="abs" style="left:786.5px;top:242.99px;width:210.5px;height:1px;background:#e0e0e0;"></div>
<div class="abs" style="left:785px;top:247.96px;width:213.5px;height:15.2px;background:linear-gradient(#7f858e,#6b717a);border-top:1px solid #5f6670;border-bottom:1px solid #555c65;box-sizing:border-box;"></div>
<div class="t" style="left:802.8px;top:248.66px;font-size:12.4px;line-height:15.6px;color:#ffffff;-webkit-text-stroke:0.25px #ffffff;">Vorgaben-Manager<span style="letter-spacing:0.6px">...</span></div>
<div class="abs" style="left:786.5px;top:268.66px;width:210.5px;height:1px;background:#e0e0e0;"></div>
<div class="t" style="left:802.8px;top:274.33px;font-size:12.4px;line-height:15.6px;color:#0d0d0d;-webkit-text-stroke:0.25px #0d0d0d;">Pinsel zurücksetzen<span style="letter-spacing:0.6px">...</span></div>
<div class="t" style="left:802.8px;top:289.96px;font-size:12.4px;line-height:15.6px;color:#0d0d0d;-webkit-text-stroke:0.25px #0d0d0d;">Pinsel laden<span style="letter-spacing:0.6px">...</span></div>
<div class="t" style="left:802.8px;top:305.59px;font-size:12.4px;line-height:15.6px;color:#0d0d0d;-webkit-text-stroke:0.25px #0d0d0d;">Pinsel speichern<span style="letter-spacing:0.6px">...</span></div>
<div class="t" style="left:802.8px;top:321.22px;font-size:12.4px;line-height:15.6px;color:#0d0d0d;-webkit-text-stroke:0.25px #0d0d0d;">Pinsel ersetzen<span style="letter-spacing:0.6px">...</span></div>
<div class="abs" style="left:786.5px;top:341.22px;width:210.5px;height:1px;background:#e0e0e0;"></div>
<div class="t" style="left:802.8px;top:346.89px;font-size:12.4px;line-height:15.6px;color:#0d0d0d;-webkit-text-stroke:0.25px #0d0d0d;">Verschiedene Spitzen</div>
<div class="t" style="left:802.8px;top:362.52px;font-size:12.4px;line-height:15.6px;color:#0d0d0d;-webkit-text-stroke:0.25px #0d0d0d;">Pinsel allgemein</div>
<div class="t" style="left:802.8px;top:378.15px;font-size:12.4px;line-height:15.6px;color:#0d0d0d;-webkit-text-stroke:0.25px #0d0d0d;">Kalligraphiepinsel</div>
<div class="t" style="left:802.8px;top:393.78px;font-size:12.4px;line-height:15.6px;color:#0d0d0d;-webkit-text-stroke:0.25px #0d0d0d;">DP-Pinsel</div>
<div class="t" style="left:802.8px;top:409.41px;font-size:12.4px;line-height:15.6px;color:#0d0d0d;-webkit-text-stroke:0.25px #0d0d0d;">Schlagschatten-Spitzen</div>
<div class="t" style="left:802.8px;top:425.04px;font-size:12.4px;line-height:15.6px;color:#0d0d0d;-webkit-text-stroke:0.25px #0d0d0d;">Pinsel für trockene Farbe</div>
<div class="t" style="left:802.8px;top:440.67px;font-size:12.4px;line-height:15.6px;color:#0d0d0d;-webkit-text-stroke:0.25px #0d0d0d;">Faux-Spitzen</div>
<div class="t" style="left:802.8px;top:456.30px;font-size:12.4px;line-height:15.6px;color:#0d0d0d;-webkit-text-stroke:0.25px #0d0d0d;">M-Pinsel</div>
<div class="t" style="left:802.8px;top:471.93px;font-size:12.4px;line-height:15.6px;color:#0d0d0d;-webkit-text-stroke:0.25px #0d0d0d;">Natürliche Spitzen 2</div>
<div class="t" style="left:802.8px;top:487.56px;font-size:12.4px;line-height:15.6px;color:#0d0d0d;-webkit-text-stroke:0.25px #0d0d0d;">Natürliche Spitzen</div>
<div class="t" style="left:802.8px;top:503.19px;font-size:12.4px;line-height:15.6px;color:#0d0d0d;-webkit-text-stroke:0.25px #0d0d0d;">Runde Pinsel mit Größe</div>
<div class="t" style="left:802.8px;top:518.82px;font-size:12.4px;line-height:15.6px;color:#0d0d0d;-webkit-text-stroke:0.25px #0d0d0d;">Pinsel für Spezialeffekte</div>
<div class="t" style="left:802.8px;top:534.45px;font-size:12.4px;line-height:15.6px;color:#0d0d0d;-webkit-text-stroke:0.25px #0d0d0d;">Quadratische Spitzen</div>
<div class="t" style="left:802.8px;top:550.08px;font-size:12.4px;line-height:15.6px;color:#0d0d0d;-webkit-text-stroke:0.25px #0d0d0d;">Breite Pinsel</div>
<div class="t" style="left:802.8px;top:565.71px;font-size:12.4px;line-height:15.6px;color:#0d0d0d;-webkit-text-stroke:0.25px #0d0d0d;">Aquarellpinsel</div>
<div class="abs" style="left:786.5px;top:585.71px;width:210.5px;height:1px;background:#e0e0e0;"></div>
<div class="t" style="left:802.8px;top:591.38px;font-size:12.4px;line-height:15.6px;color:#0d0d0d;-webkit-text-stroke:0.25px #0d0d0d;">Schließen</div>
<div class="t" style="left:802.8px;top:607.01px;font-size:12.4px;line-height:15.6px;color:#0d0d0d;-webkit-text-stroke:0.25px #0d0d0d;">Registerkartengruppe schließen</div>
</body></html>
